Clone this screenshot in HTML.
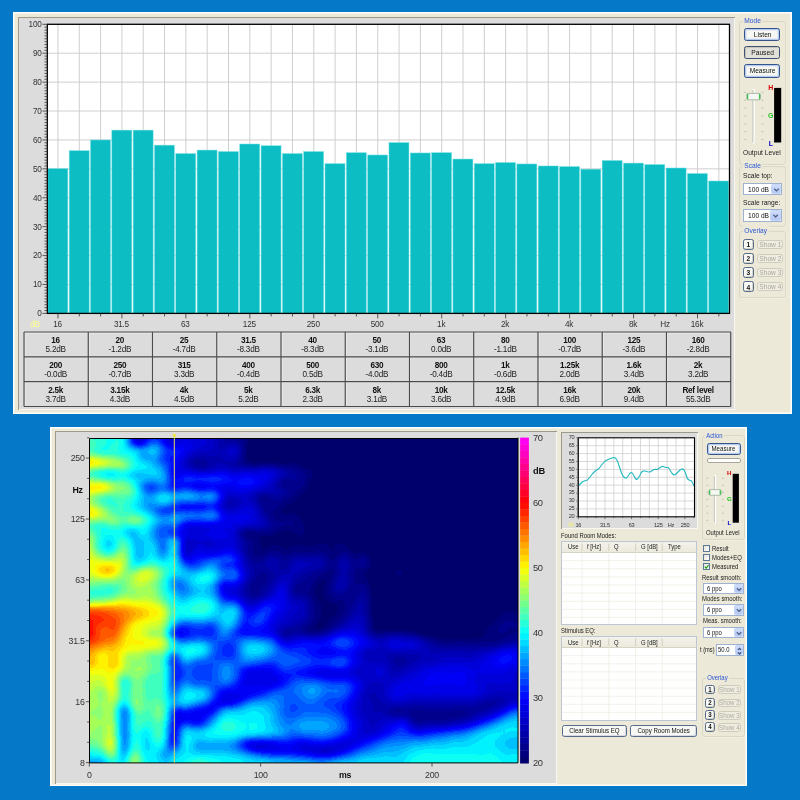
<!DOCTYPE html><html><head><meta charset="utf-8"><title>Room EQ - Spectrum and Waterfall</title><style>
html,body{margin:0;padding:0}
body{width:800px;height:800px;overflow:hidden;background:#0678c8;font-family:"Liberation Sans", Arial, sans-serif;position:relative;font-size:8px;color:#111}
#root{position:absolute;left:0;top:0;width:800px;height:800px;will-change:transform}
.abs{position:absolute}
.panel{background:#ece9d8;box-shadow:inset 0 0 0 1.6px #fefefa}
.sunk{background:#dcdcdc;box-shadow:inset 1px 1px 0 #9d9a8a, inset -1px -1px 0 #f8f7f0}
text.ax{font-family:"Liberation Sans", Arial, sans-serif;font-size:8.2px;fill:#333;letter-spacing:-0.25px}
text.ax2{font-family:"Liberation Sans", Arial, sans-serif;font-size:8.8px;fill:#333;letter-spacing:-0.3px}
text.ax3{font-family:"Liberation Sans", Arial, sans-serif;font-size:5.6px;fill:#333;letter-spacing:-0.2px}
text.b{font-weight:bold;fill:#111}
text.hgl{font-family:"Liberation Sans", Arial, sans-serif;font-weight:bold}
.tbl{border:0.6px solid #555;box-sizing:border-box}
.cell{box-sizing:border-box;text-align:center;font-size:8.2px;letter-spacing:-0.25px;color:#222}
.cell b{display:block;margin-top:4.2px;line-height:9px;color:#111}
.cell span{display:block;line-height:10.7px}
.grp{box-sizing:border-box;border:1px solid #dad7c7;border-radius:3px;box-shadow:0.5px 0.5px 0 #f6f5ec}
.glab{background:#ece9d8;color:#2a55d4;font-size:8px;line-height:10px;padding:0 1.5px;white-space:nowrap;transform:scaleX(.83);transform-origin:0 50%}
.lab{font-size:8px;line-height:10px;white-space:nowrap;color:#1a1a1a;transform:scaleX(.83);transform-origin:0 50%}
.btn{box-sizing:border-box;border:1px solid #35548a;border-radius:2.4px;background:#f7f7f3;display:flex;justify-content:center;align-items:center;padding-top:1px;font-size:8px;color:#111;white-space:nowrap;box-shadow:inset 0 0 0 1.3px #b6cbef}
.sx{display:block;flex:none;transform:scaleX(.83);transform-origin:50% 50%}
.btn.plain{box-shadow:inset -1px -1px 0 #d5d9e2;border-color:#566b8c}
.btn.down{background:#e2e1d9;box-shadow:inset 1px 1px 1px #c5c3b6;border-color:#3d5274}
.btn.num{font-weight:bold;box-shadow:inset -1px -1px 0 #d7d5c8;border-color:#55698a}
.btn.dis{border-color:#cfccbc;background:#efede2;color:#aaa89a;box-shadow:none;padding-top:0.8px}
.combo{box-sizing:border-box;border:1px solid #9fb3d0;background:#fff}
.combo .ct{position:absolute;top:0;font-size:8px;white-space:nowrap;color:#111;transform:scaleX(.83);transform-origin:0 50%}
.combo .cbtn{position:absolute;right:0;top:0;background:linear-gradient(#cfdcfb,#b3c8f3);border-radius:1.3px;border:0.5px solid #c5d5f7;box-sizing:border-box}
.list{box-sizing:border-box;border:1px solid #bcc6d4;background:#fff;overflow:hidden}
.lhead{position:absolute;left:0;top:0;right:0;height:10.2px;background:linear-gradient(#f3f2ea,#eceadd);border-bottom:1px solid #d6d3c4}
.lh{position:absolute;top:0.6px;font-size:8px;line-height:10px;color:#222;white-space:nowrap;transform:scaleX(.83);transform-origin:0 50%}
.p2 .lab,.p2 .glab,.p2 .combo .ct,.p2 .lh{font-size:7.25px;transform:scaleX(.815)}
.p2 .btn{font-size:7.4px}
.p2 .btn.dis{padding-top:0.2px}
.cb{box-sizing:border-box;border:0.8px solid #5d7896;background:linear-gradient(135deg,#e4e3dc,#fff);width:7.2px;height:7.2px}
</style></head><body><div id="root"><div class="abs panel" style="left:13px;top:12.4px;width:779px;height:401.6px"></div><div class="abs sunk" style="left:18px;top:17.4px;width:716.6px;height:393px"></div><svg class="abs" style="left:0;top:0" width="800" height="420" viewBox="0 0 800 420"><rect x="47.3" y="24.3" width="682.2" height="289.1" fill="#fff"/><path d="M47.3 284.49H729.5M47.3 255.58H729.5M47.3 226.67H729.5M47.3 197.76H729.5M47.3 168.85H729.5M47.3 139.94H729.5M47.3 111.03H729.5M47.3 82.12H729.5M47.3 53.21H729.5M57.96 24.3V313.4M79.28 24.3V313.4M100.6 24.3V313.4M121.92 24.3V313.4M143.23 24.3V313.4M164.55 24.3V313.4M185.87 24.3V313.4M207.19 24.3V313.4M228.51 24.3V313.4M249.83 24.3V313.4M271.15 24.3V313.4M292.47 24.3V313.4M313.78 24.3V313.4M335.1 24.3V313.4M356.42 24.3V313.4M377.74 24.3V313.4M399.06 24.3V313.4M420.38 24.3V313.4M441.7 24.3V313.4M463.02 24.3V313.4M484.33 24.3V313.4M505.65 24.3V313.4M526.97 24.3V313.4M548.29 24.3V313.4M569.61 24.3V313.4M590.93 24.3V313.4M612.25 24.3V313.4M633.57 24.3V313.4M654.88 24.3V313.4M676.2 24.3V313.4M697.52 24.3V313.4M718.84 24.3V313.4" stroke="#c9c9c9" stroke-width="0.9" fill="none"/><rect x="47.85" y="168.56" width="20.02" height="144.84" fill="#0cbec4" stroke="#7fe3e6" stroke-width="0.5"/><rect x="69.17" y="150.64" width="20.02" height="162.76" fill="#0cbec4" stroke="#7fe3e6" stroke-width="0.5"/><rect x="90.49" y="139.94" width="20.02" height="173.46" fill="#0cbec4" stroke="#7fe3e6" stroke-width="0.5"/><rect x="111.81" y="130.11" width="20.02" height="183.29" fill="#0cbec4" stroke="#7fe3e6" stroke-width="0.5"/><rect x="133.12" y="130.11" width="20.02" height="183.29" fill="#0cbec4" stroke="#7fe3e6" stroke-width="0.5"/><rect x="154.44" y="145.14" width="20.02" height="168.26" fill="#0cbec4" stroke="#7fe3e6" stroke-width="0.5"/><rect x="175.76" y="153.53" width="20.02" height="159.87" fill="#0cbec4" stroke="#7fe3e6" stroke-width="0.5"/><rect x="197.08" y="150.06" width="20.02" height="163.34" fill="#0cbec4" stroke="#7fe3e6" stroke-width="0.5"/><rect x="218.4" y="151.5" width="20.02" height="161.9" fill="#0cbec4" stroke="#7fe3e6" stroke-width="0.5"/><rect x="239.72" y="143.99" width="20.02" height="169.41" fill="#0cbec4" stroke="#7fe3e6" stroke-width="0.5"/><rect x="261.04" y="145.72" width="20.02" height="167.68" fill="#0cbec4" stroke="#7fe3e6" stroke-width="0.5"/><rect x="282.36" y="153.53" width="20.02" height="159.87" fill="#0cbec4" stroke="#7fe3e6" stroke-width="0.5"/><rect x="303.68" y="151.5" width="20.02" height="161.9" fill="#0cbec4" stroke="#7fe3e6" stroke-width="0.5"/><rect x="324.99" y="163.65" width="20.02" height="149.75" fill="#0cbec4" stroke="#7fe3e6" stroke-width="0.5"/><rect x="346.31" y="152.66" width="20.02" height="160.74" fill="#0cbec4" stroke="#7fe3e6" stroke-width="0.5"/><rect x="367.63" y="154.97" width="20.02" height="158.43" fill="#0cbec4" stroke="#7fe3e6" stroke-width="0.5"/><rect x="388.95" y="142.54" width="20.02" height="170.86" fill="#0cbec4" stroke="#7fe3e6" stroke-width="0.5"/><rect x="410.27" y="152.95" width="20.02" height="160.45" fill="#0cbec4" stroke="#7fe3e6" stroke-width="0.5"/><rect x="431.59" y="152.66" width="20.02" height="160.74" fill="#0cbec4" stroke="#7fe3e6" stroke-width="0.5"/><rect x="452.91" y="159.02" width="20.02" height="154.38" fill="#0cbec4" stroke="#7fe3e6" stroke-width="0.5"/><rect x="474.23" y="163.65" width="20.02" height="149.75" fill="#0cbec4" stroke="#7fe3e6" stroke-width="0.5"/><rect x="495.54" y="162.49" width="20.02" height="150.91" fill="#0cbec4" stroke="#7fe3e6" stroke-width="0.5"/><rect x="516.86" y="163.94" width="20.02" height="149.46" fill="#0cbec4" stroke="#7fe3e6" stroke-width="0.5"/><rect x="538.18" y="165.96" width="20.02" height="147.44" fill="#0cbec4" stroke="#7fe3e6" stroke-width="0.5"/><rect x="559.5" y="166.54" width="20.02" height="146.86" fill="#0cbec4" stroke="#7fe3e6" stroke-width="0.5"/><rect x="580.82" y="169.14" width="20.02" height="144.26" fill="#0cbec4" stroke="#7fe3e6" stroke-width="0.5"/><rect x="602.14" y="160.47" width="20.02" height="152.93" fill="#0cbec4" stroke="#7fe3e6" stroke-width="0.5"/><rect x="623.46" y="163.07" width="20.02" height="150.33" fill="#0cbec4" stroke="#7fe3e6" stroke-width="0.5"/><rect x="644.77" y="164.51" width="20.02" height="148.89" fill="#0cbec4" stroke="#7fe3e6" stroke-width="0.5"/><rect x="666.09" y="167.98" width="20.02" height="145.42" fill="#0cbec4" stroke="#7fe3e6" stroke-width="0.5"/><rect x="687.41" y="173.48" width="20.02" height="139.92" fill="#0cbec4" stroke="#7fe3e6" stroke-width="0.5"/><rect x="708.73" y="180.99" width="20.02" height="132.41" fill="#0cbec4" stroke="#7fe3e6" stroke-width="0.5"/><rect x="47.3" y="24.3" width="682.2" height="289.1" fill="none" stroke="#000" stroke-width="1.3"/><path d="M42.5 313.4H47.3M44.5 310.51H47.3M44.5 307.62H47.3M44.5 304.73H47.3M44.5 301.84H47.3M44.5 298.94H47.3M44.5 296.05H47.3M44.5 293.16H47.3M44.5 290.27H47.3M44.5 287.38H47.3M42.5 284.49H47.3M44.5 281.6H47.3M44.5 278.71H47.3M44.5 275.82H47.3M44.5 272.93H47.3M44.5 270.03H47.3M44.5 267.14H47.3M44.5 264.25H47.3M44.5 261.36H47.3M44.5 258.47H47.3M42.5 255.58H47.3M44.5 252.69H47.3M44.5 249.8H47.3M44.5 246.91H47.3M44.5 244.02H47.3M44.5 241.12H47.3M44.5 238.23H47.3M44.5 235.34H47.3M44.5 232.45H47.3M44.5 229.56H47.3M42.5 226.67H47.3M44.5 223.78H47.3M44.5 220.89H47.3M44.5 218H47.3M44.5 215.11H47.3M44.5 212.21H47.3M44.5 209.32H47.3M44.5 206.43H47.3M44.5 203.54H47.3M44.5 200.65H47.3M42.5 197.76H47.3M44.5 194.87H47.3M44.5 191.98H47.3M44.5 189.09H47.3M44.5 186.2H47.3M44.5 183.31H47.3M44.5 180.41H47.3M44.5 177.52H47.3M44.5 174.63H47.3M44.5 171.74H47.3M42.5 168.85H47.3M44.5 165.96H47.3M44.5 163.07H47.3M44.5 160.18H47.3M44.5 157.29H47.3M44.5 154.4H47.3M44.5 151.5H47.3M44.5 148.61H47.3M44.5 145.72H47.3M44.5 142.83H47.3M42.5 139.94H47.3M44.5 137.05H47.3M44.5 134.16H47.3M44.5 131.27H47.3M44.5 128.38H47.3M44.5 125.49H47.3M44.5 122.59H47.3M44.5 119.7H47.3M44.5 116.81H47.3M44.5 113.92H47.3M42.5 111.03H47.3M44.5 108.14H47.3M44.5 105.25H47.3M44.5 102.36H47.3M44.5 99.47H47.3M44.5 96.58H47.3M44.5 93.68H47.3M44.5 90.79H47.3M44.5 87.9H47.3M44.5 85.01H47.3M42.5 82.12H47.3M44.5 79.23H47.3M44.5 76.34H47.3M44.5 73.45H47.3M44.5 70.56H47.3M44.5 67.67H47.3M44.5 64.77H47.3M44.5 61.88H47.3M44.5 58.99H47.3M44.5 56.1H47.3M42.5 53.21H47.3M44.5 50.32H47.3M44.5 47.43H47.3M44.5 44.54H47.3M44.5 41.65H47.3M44.5 38.75H47.3M44.5 35.86H47.3M44.5 32.97H47.3M44.5 30.08H47.3M44.5 27.19H47.3M42.5 24.3H47.3" stroke="#333" stroke-width="0.8" fill="none"/><path d="M57.96 313.4v5M79.28 313.4v3M100.6 313.4v3M121.92 313.4v5M143.23 313.4v3M164.55 313.4v3M185.87 313.4v5M207.19 313.4v3M228.51 313.4v3M249.83 313.4v5M271.15 313.4v3M292.47 313.4v3M313.78 313.4v5M335.1 313.4v3M356.42 313.4v3M377.74 313.4v5M399.06 313.4v3M420.38 313.4v3M441.7 313.4v5M463.02 313.4v3M484.33 313.4v3M505.65 313.4v5M526.97 313.4v3M548.29 313.4v3M569.61 313.4v5M590.93 313.4v3M612.25 313.4v3M633.57 313.4v5M654.88 313.4v3M676.2 313.4v3M697.52 313.4v5M718.84 313.4v3" stroke="#333" stroke-width="0.8" fill="none"/><text x="41.5" y="316.3" text-anchor="end" class="ax">0</text><text x="41.5" y="287.39" text-anchor="end" class="ax">10</text><text x="41.5" y="258.48" text-anchor="end" class="ax">20</text><text x="41.5" y="229.57" text-anchor="end" class="ax">30</text><text x="41.5" y="200.66" text-anchor="end" class="ax">40</text><text x="41.5" y="171.75" text-anchor="end" class="ax">50</text><text x="41.5" y="142.84" text-anchor="end" class="ax">60</text><text x="41.5" y="113.93" text-anchor="end" class="ax">70</text><text x="41.5" y="85.02" text-anchor="end" class="ax">80</text><text x="41.5" y="56.11" text-anchor="end" class="ax">90</text><text x="41.5" y="27.2" text-anchor="end" class="ax">100</text><text x="57.46" y="327" text-anchor="middle" class="ax">16</text><text x="121.42" y="327" text-anchor="middle" class="ax">31.5</text><text x="185.37" y="327" text-anchor="middle" class="ax">63</text><text x="249.33" y="327" text-anchor="middle" class="ax">125</text><text x="313.28" y="327" text-anchor="middle" class="ax">250</text><text x="377.24" y="327" text-anchor="middle" class="ax">500</text><text x="441.2" y="327" text-anchor="middle" class="ax">1k</text><text x="505.15" y="327" text-anchor="middle" class="ax">2k</text><text x="569.11" y="327" text-anchor="middle" class="ax">4k</text><text x="633.07" y="327" text-anchor="middle" class="ax">8k</text><text x="697.02" y="327" text-anchor="middle" class="ax">16k</text><text x="665" y="327" text-anchor="middle" class="ax">Hz</text><text x="35" y="327" text-anchor="middle" class="ax" fill="#ffff8c" style="fill:#ffff8c">dB</text></svg><svg class="abs" style="left:21.5px;top:330.1px" width="710.75" height="78.49" viewBox="21.5 330.1 710.75 78.49"><path d="M24.5 332.1V406.59M88.75 332.1V406.59M153 332.1V406.59M217.25 332.1V406.59M281.5 332.1V406.59M345.75 332.1V406.59M410 332.1V406.59M474.25 332.1V406.59M538.5 332.1V406.59M602.75 332.1V406.59M667 332.1V406.59M23.5 333.1H730.25M23.5 357.93H730.25M23.5 382.76H730.25" stroke="#ededed" stroke-width="0.9" fill="none"/><path d="M23.5 332.1V406.59M87.75 332.1V406.59M152 332.1V406.59M216.25 332.1V406.59M280.5 332.1V406.59M344.75 332.1V406.59M409 332.1V406.59M473.25 332.1V406.59M537.5 332.1V406.59M601.75 332.1V406.59M666 332.1V406.59M730.25 332.1V406.59M23.5 332.1H730.25M23.5 356.93H730.25M23.5 381.76H730.25M23.5 406.59H730.25" stroke="#4a4a4a" stroke-width="1.15" fill="none"/></svg><div class="abs cell" style="left:23.5px;top:332.1px;width:64.25px;height:24.83px"><b>16</b><span>5.2dB</span></div><div class="abs cell" style="left:87.75px;top:332.1px;width:64.25px;height:24.83px"><b>20</b><span>-1.2dB</span></div><div class="abs cell" style="left:152px;top:332.1px;width:64.25px;height:24.83px"><b>25</b><span>-4.7dB</span></div><div class="abs cell" style="left:216.25px;top:332.1px;width:64.25px;height:24.83px"><b>31.5</b><span>-8.3dB</span></div><div class="abs cell" style="left:280.5px;top:332.1px;width:64.25px;height:24.83px"><b>40</b><span>-8.3dB</span></div><div class="abs cell" style="left:344.75px;top:332.1px;width:64.25px;height:24.83px"><b>50</b><span>-3.1dB</span></div><div class="abs cell" style="left:409px;top:332.1px;width:64.25px;height:24.83px"><b>63</b><span>0.0dB</span></div><div class="abs cell" style="left:473.25px;top:332.1px;width:64.25px;height:24.83px"><b>80</b><span>-1.1dB</span></div><div class="abs cell" style="left:537.5px;top:332.1px;width:64.25px;height:24.83px"><b>100</b><span>-0.7dB</span></div><div class="abs cell" style="left:601.75px;top:332.1px;width:64.25px;height:24.83px"><b>125</b><span>-3.6dB</span></div><div class="abs cell" style="left:666px;top:332.1px;width:64.25px;height:24.83px"><b>160</b><span>-2.8dB</span></div><div class="abs cell" style="left:23.5px;top:356.93px;width:64.25px;height:24.83px"><b>200</b><span>-0.0dB</span></div><div class="abs cell" style="left:87.75px;top:356.93px;width:64.25px;height:24.83px"><b>250</b><span>-0.7dB</span></div><div class="abs cell" style="left:152px;top:356.93px;width:64.25px;height:24.83px"><b>315</b><span>3.3dB</span></div><div class="abs cell" style="left:216.25px;top:356.93px;width:64.25px;height:24.83px"><b>400</b><span>-0.4dB</span></div><div class="abs cell" style="left:280.5px;top:356.93px;width:64.25px;height:24.83px"><b>500</b><span>0.5dB</span></div><div class="abs cell" style="left:344.75px;top:356.93px;width:64.25px;height:24.83px"><b>630</b><span>-4.0dB</span></div><div class="abs cell" style="left:409px;top:356.93px;width:64.25px;height:24.83px"><b>800</b><span>-0.4dB</span></div><div class="abs cell" style="left:473.25px;top:356.93px;width:64.25px;height:24.83px"><b>1k</b><span>-0.6dB</span></div><div class="abs cell" style="left:537.5px;top:356.93px;width:64.25px;height:24.83px"><b>1.25k</b><span>2.0dB</span></div><div class="abs cell" style="left:601.75px;top:356.93px;width:64.25px;height:24.83px"><b>1.6k</b><span>3.4dB</span></div><div class="abs cell" style="left:666px;top:356.93px;width:64.25px;height:24.83px"><b>2k</b><span>3.2dB</span></div><div class="abs cell" style="left:23.5px;top:381.76px;width:64.25px;height:24.83px"><b>2.5k</b><span>3.7dB</span></div><div class="abs cell" style="left:87.75px;top:381.76px;width:64.25px;height:24.83px"><b>3.15k</b><span>4.3dB</span></div><div class="abs cell" style="left:152px;top:381.76px;width:64.25px;height:24.83px"><b>4k</b><span>4.5dB</span></div><div class="abs cell" style="left:216.25px;top:381.76px;width:64.25px;height:24.83px"><b>5k</b><span>5.2dB</span></div><div class="abs cell" style="left:280.5px;top:381.76px;width:64.25px;height:24.83px"><b>6.3k</b><span>2.3dB</span></div><div class="abs cell" style="left:344.75px;top:381.76px;width:64.25px;height:24.83px"><b>8k</b><span>3.1dB</span></div><div class="abs cell" style="left:409px;top:381.76px;width:64.25px;height:24.83px"><b>10k</b><span>3.6dB</span></div><div class="abs cell" style="left:473.25px;top:381.76px;width:64.25px;height:24.83px"><b>12.5k</b><span>4.9dB</span></div><div class="abs cell" style="left:537.5px;top:381.76px;width:64.25px;height:24.83px"><b>16k</b><span>6.9dB</span></div><div class="abs cell" style="left:601.75px;top:381.76px;width:64.25px;height:24.83px"><b>20k</b><span>9.4dB</span></div><div class="abs cell" style="left:666px;top:381.76px;width:64.25px;height:24.83px"><b>Ref level</b><span>55.3dB</span></div><div class="abs grp" style="left:738.6px;top:21px;width:47.4px;height:143.5px"></div><div class="abs glab" style="left:742.8px;top:15.7px">Mode</div><div class="abs btn " style="left:744.4px;top:27.6px;width:36px;height:13.6px;line-height:12.4px"><span class="sx">Listen</span></div><div class="abs btn down" style="left:744.4px;top:45.6px;width:36px;height:13.8px;line-height:12.6px"><span class="sx">Paused</span></div><div class="abs btn " style="left:744.4px;top:63.6px;width:36px;height:14px;line-height:12.8px"><span class="sx">Measure</span></div><svg class="abs" style="left:736px;top:80px" width="56" height="72" viewBox="736 80 56 72"><path d="M753.6 90V142.6" stroke="#fff" stroke-width="2.2" stroke-linecap="round"/><path d="M752.9 90V142.6" stroke="#b9b7a8" stroke-width="0.9"/><path d="M744.4 92.4h1.7M761.6 92.4h1.7M744.4 100.25h1.7M761.6 100.25h1.7M744.4 108.1h1.7M761.6 108.1h1.7M744.4 115.95h1.7M761.6 115.95h1.7M744.4 123.8h1.7M761.6 123.8h1.7M744.4 131.65h1.7M761.6 131.65h1.7M744.4 139.5h1.7M761.6 139.5h1.7" stroke="#b3b1a2" stroke-width="0.8"/><rect x="746.8" y="93.4" width="13.6" height="6.4" rx="1.2" fill="#f6f6f2" stroke="#8fa58f" stroke-width="0.7"/><path d="M747.6 94v5.2M759.6 94v5.2" stroke="#3fc24a" stroke-width="1.3"/><rect x="774.1" y="87.9" width="7.1" height="54.6" fill="#000"/><text x="770.8" y="89.8" text-anchor="middle" class="hgl" style="fill:#d40000;font-size:6.9px">H</text><text x="770.8" y="118" text-anchor="middle" class="hgl" style="fill:#1fc01f;font-size:6.9px">G</text><text x="770.8" y="146.2" text-anchor="middle" class="hgl" style="fill:#0000c8;font-size:6.9px">L</text></svg><div class="abs lab" style="left:743px;top:148.2px;">Output Level</div><div class="abs grp" style="left:738.6px;top:166px;width:47.4px;height:60.5px"></div><div class="abs glab" style="left:742.8px;top:160.7px">Scale</div><div class="abs lab" style="left:742.8px;top:171.3px;">Scale top:</div><div class="abs combo" style="left:742.8px;top:183.3px;width:38.8px;height:12.2px"><span class="ct" style="left:4.5px;line-height:11.2px">100 dB</span><span class="cbtn" style="width:10px;height:10.2px"><svg width="10" height="10.2" style="display:block"><path d="M2.3 3.7L4.5 5.9L6.7 3.7" stroke="#4d6185" stroke-width="1.3" fill="none"/></svg></span></div><div class="abs lab" style="left:742.8px;top:197.8px;">Scale range:</div><div class="abs combo" style="left:742.8px;top:209.3px;width:38.8px;height:12.4px"><span class="ct" style="left:4.5px;line-height:11.4px">100 dB</span><span class="cbtn" style="width:10.2px;height:10.4px"><svg width="10.2" height="10.4" style="display:block"><path d="M2.4 3.8L4.6 6L6.8 3.8" stroke="#4d6185" stroke-width="1.3" fill="none"/></svg></span></div><div class="abs grp" style="left:738.6px;top:231px;width:47.4px;height:66.8px"></div><div class="abs glab" style="left:742.8px;top:225.7px">Overlay</div><div class="abs btn num" style="left:742.5px;top:239.2px;width:11.4px;height:10.4px;line-height:9.2px"><span class="sx">1</span></div><div class="abs btn dis" style="left:756.8px;top:239.7px;width:26.2px;height:9.4px;line-height:8.2px"><span class="sx">Show 1</span></div><div class="abs btn num" style="left:742.5px;top:253.27px;width:11.4px;height:10.4px;line-height:9.2px"><span class="sx">2</span></div><div class="abs btn dis" style="left:756.8px;top:253.77px;width:26.2px;height:9.4px;line-height:8.2px"><span class="sx">Show 2</span></div><div class="abs btn num" style="left:742.5px;top:267.34px;width:11.4px;height:10.4px;line-height:9.2px"><span class="sx">3</span></div><div class="abs btn dis" style="left:756.8px;top:267.84px;width:26.2px;height:9.4px;line-height:8.2px"><span class="sx">Show 3</span></div><div class="abs btn num" style="left:742.5px;top:281.41px;width:11.4px;height:10.4px;line-height:9.2px"><span class="sx">4</span></div><div class="abs btn dis" style="left:756.8px;top:281.91px;width:26.2px;height:9.4px;line-height:8.2px"><span class="sx">Show 4</span></div><div class="abs panel" style="left:50.2px;top:427.3px;width:697px;height:359px"></div><div class="abs sunk" style="left:55px;top:431.4px;width:502px;height:352.2px"></div><svg class="abs" style="left:89.3px;top:437.6px;overflow:hidden" width="428.3" height="325" viewBox="0 0 428.3 325"><defs><filter id="hm" x="-5%" y="-5%" width="110%" height="110%" filterUnits="objectBoundingBox" color-interpolation-filters="sRGB"><feGaussianBlur stdDeviation="2.5"/><feComponentTransfer><feFuncR type="discrete" tableValues="0 0 0 0 0 0 0 0 0 0 0 0 0 0 0 0 0 0 0 0 0.05 0.15 0.25 0.35 0.45 0.55 0.65 0.75 0.85 0.95 1 1 1 1 1 1 1 1 1 1"/><feFuncG type="discrete" tableValues="0 0 0 0 0 0 0 0 0 0 0.05 0.15 0.25 0.35 0.45 0.55 0.65 0.75 0.85 0.95 1 1 1 1 1 1 1 1 1 1 0.95 0.85 0.75 0.65 0.55 0.45 0.35 0.25 0.15 0.05"/><feFuncB type="discrete" tableValues="0.43 0.49 0.55 0.61 0.67 0.73 0.79 0.85 0.91 0.97 1 1 1 1 1 1 1 1 1 1 0.95 0.85 0.75 0.65 0.55 0.45 0.35 0.25 0.15 0.05 0 0 0 0 0 0 0 0 0 0"/></feComponentTransfer></filter></defs><g filter="url(#hm)"><rect x="-25" y="-25" width="478.3" height="375" fill="#000"/><path fill="rgb(1,1,1)" d="M214.7 24.4h15.5v5.5h-15.5zM229.7 29.4h5.5v5.5h-5.5zM229.7 34.4h5.5v5.5h-5.5zM219.7 44.4h5.5v5.5h-5.5zM219.7 49.4h5.5v5.5h-5.5zM219.7 79.4h5.5v5.5h-5.5zM219.7 84.4h5.5v5.5h-5.5zM229.7 94.4h30.5v5.5h-30.5zM294.7 124.4h5.5v5.5h-5.5zM314.7 124.4h5.5v5.5h-5.5zM294.7 129.4h5.5v5.5h-5.5zM319.7 129.4h5.5v5.5h-5.5zM279.7 134.4h5.5v5.5h-5.5zM294.7 134.4h5.5v5.5h-5.5zM319.7 134.4h5.5v5.5h-5.5zM294.7 139.4h5.5v5.5h-5.5zM314.7 139.4h5.5v5.5h-5.5zM294.7 154.4h10.5v5.5h-10.5zM294.7 159.4h10.5v5.5h-10.5zM294.7 164.4h10.5v5.5h-10.5zM409.7 164.4h40.5v5.5h-40.5zM294.7 169.4h10.5v5.5h-10.5zM329.7 174.4h10.5v5.5h-10.5zM334.7 179.4h5.5v5.5h-5.5zM284.7 184.4h5.5v5.5h-5.5zM319.7 189.4h5.5v5.5h-5.5zM349.7 194.4h30.5v5.5h-30.5z"/><path fill="rgb(2,2,2)" d="M159.7 -20.6h5.5v5.5h-5.5zM159.7 -15.6h5.5v5.5h-5.5zM159.7 -10.6h5.5v5.5h-5.5zM159.7 -5.6h5.5v5.5h-5.5zM159.7 -0.6h5.5v5.5h-5.5zM209.7 59.4h5.5v5.5h-5.5zM219.7 94.4h5.5v5.5h-5.5zM259.7 104.4h5.5v5.5h-5.5zM299.7 124.4h15.5v5.5h-15.5zM279.7 129.4h5.5v5.5h-5.5zM279.7 139.4h5.5v5.5h-5.5zM299.7 139.4h15.5v5.5h-15.5zM404.7 174.4h5.5v5.5h-5.5zM399.7 179.4h5.5v5.5h-5.5zM389.7 189.4h5.5v5.5h-5.5zM344.7 194.4h5.5v5.5h-5.5zM384.7 194.4h5.5v5.5h-5.5z"/><path fill="rgb(3,3,3)" d="M199.7 19.4h10.5v5.5h-10.5zM214.7 54.4h5.5v5.5h-5.5zM209.7 74.4h5.5v5.5h-5.5zM214.7 79.4h5.5v5.5h-5.5zM199.7 94.4h5.5v5.5h-5.5zM264.7 109.4h15.5v5.5h-15.5zM279.7 114.4h5.5v5.5h-5.5zM279.7 144.4h5.5v5.5h-5.5zM229.7 149.4h5.5v5.5h-5.5zM409.7 169.4h5.5v5.5h-5.5zM229.7 184.4h5.5v5.5h-5.5zM394.7 184.4h5.5v5.5h-5.5zM284.7 189.4h5.5v5.5h-5.5zM339.7 194.4h5.5v5.5h-5.5z"/><path fill="rgb(4,4,4)" d="M209.7 24.4h5.5v5.5h-5.5zM224.7 29.4h5.5v5.5h-5.5zM224.7 34.4h5.5v5.5h-5.5zM219.7 39.4h5.5v5.5h-5.5zM204.7 64.4h5.5v5.5h-5.5zM204.7 69.4h5.5v5.5h-5.5zM159.7 94.4h5.5v5.5h-5.5zM184.7 94.4h5.5v5.5h-5.5zM174.7 99.4h5.5v5.5h-5.5zM224.7 99.4h5.5v5.5h-5.5zM254.7 99.4h5.5v5.5h-5.5zM279.7 124.4h5.5v5.5h-5.5zM274.7 134.4h5.5v5.5h-5.5zM229.7 144.4h5.5v5.5h-5.5zM224.7 149.4h5.5v5.5h-5.5zM279.7 149.4h5.5v5.5h-5.5zM224.7 154.4h10.5v5.5h-10.5zM239.7 164.4h5.5v5.5h-5.5zM239.7 169.4h5.5v5.5h-5.5zM279.7 169.4h5.5v5.5h-5.5zM424.7 169.4h25.5v5.5h-25.5zM224.7 189.4h5.5v5.5h-5.5zM289.7 189.4h5.5v5.5h-5.5zM314.7 189.4h5.5v5.5h-5.5zM334.7 194.4h5.5v5.5h-5.5z"/><path fill="rgb(5,5,5)" d="M154.7 14.4h5.5v5.5h-5.5zM194.7 64.4h10.5v5.5h-10.5zM194.7 69.4h10.5v5.5h-10.5zM214.7 84.4h5.5v5.5h-5.5zM214.7 89.4h5.5v5.5h-5.5zM164.7 94.4h10.5v5.5h-10.5zM214.7 94.4h5.5v5.5h-5.5zM179.7 99.4h25.5v5.5h-25.5zM219.7 99.4h5.5v5.5h-5.5zM229.7 99.4h20.5v5.5h-20.5zM174.7 104.4h5.5v5.5h-5.5zM169.7 109.4h5.5v5.5h-5.5zM259.7 109.4h5.5v5.5h-5.5zM279.7 119.4h5.5v5.5h-5.5zM299.7 129.4h5.5v5.5h-5.5zM314.7 129.4h5.5v5.5h-5.5zM299.7 134.4h5.5v5.5h-5.5zM314.7 134.4h5.5v5.5h-5.5zM279.7 154.4h5.5v5.5h-5.5zM229.7 159.4h5.5v5.5h-5.5zM279.7 159.4h5.5v5.5h-5.5zM234.7 164.4h5.5v5.5h-5.5zM244.7 164.4h5.5v5.5h-5.5zM279.7 164.4h5.5v5.5h-5.5zM234.7 169.4h5.5v5.5h-5.5zM244.7 169.4h5.5v5.5h-5.5zM414.7 169.4h10.5v5.5h-10.5zM234.7 174.4h10.5v5.5h-10.5zM229.7 179.4h10.5v5.5h-10.5zM224.7 184.4h5.5v5.5h-5.5zM234.7 184.4h5.5v5.5h-5.5zM299.7 189.4h15.5v5.5h-15.5zM389.7 194.4h5.5v5.5h-5.5z"/><path fill="rgb(6,6,6)" d="M154.7 9.4h5.5v5.5h-5.5zM154.7 19.4h5.5v5.5h-5.5zM214.7 49.4h5.5v5.5h-5.5zM209.7 54.4h5.5v5.5h-5.5zM204.7 59.4h5.5v5.5h-5.5zM189.7 69.4h5.5v5.5h-5.5zM189.7 74.4h5.5v5.5h-5.5zM194.7 89.4h5.5v5.5h-5.5zM154.7 94.4h5.5v5.5h-5.5zM174.7 94.4h10.5v5.5h-10.5zM204.7 94.4h5.5v5.5h-5.5zM169.7 99.4h5.5v5.5h-5.5zM204.7 99.4h15.5v5.5h-15.5zM249.7 99.4h5.5v5.5h-5.5zM169.7 104.4h5.5v5.5h-5.5zM179.7 104.4h45.5v5.5h-45.5zM239.7 104.4h5.5v5.5h-5.5zM254.7 104.4h5.5v5.5h-5.5zM194.7 109.4h5.5v5.5h-5.5zM239.7 109.4h10.5v5.5h-10.5zM229.7 139.4h10.5v5.5h-10.5zM234.7 159.4h5.5v5.5h-5.5zM229.7 164.4h5.5v5.5h-5.5zM229.7 169.4h5.5v5.5h-5.5zM229.7 174.4h5.5v5.5h-5.5zM279.7 174.4h5.5v5.5h-5.5zM404.7 179.4h5.5v5.5h-5.5zM219.7 189.4h5.5v5.5h-5.5zM229.7 189.4h5.5v5.5h-5.5zM294.7 189.4h5.5v5.5h-5.5z"/><path fill="rgb(7,7,7)" d="M154.7 4.4h5.5v5.5h-5.5zM189.7 24.4h10.5v5.5h-10.5zM219.7 29.4h5.5v5.5h-5.5zM194.7 74.4h5.5v5.5h-5.5zM204.7 74.4h5.5v5.5h-5.5zM209.7 79.4h5.5v5.5h-5.5zM189.7 89.4h5.5v5.5h-5.5zM199.7 89.4h5.5v5.5h-5.5zM209.7 94.4h5.5v5.5h-5.5zM224.7 104.4h15.5v5.5h-15.5zM244.7 104.4h5.5v5.5h-5.5zM174.7 109.4h5.5v5.5h-5.5zM189.7 109.4h5.5v5.5h-5.5zM239.7 114.4h5.5v5.5h-5.5zM304.7 129.4h10.5v5.5h-10.5zM269.7 134.4h5.5v5.5h-5.5zM304.7 134.4h10.5v5.5h-10.5zM224.7 144.4h5.5v5.5h-5.5zM234.7 144.4h5.5v5.5h-5.5zM224.7 159.4h5.5v5.5h-5.5zM244.7 174.4h5.5v5.5h-5.5zM409.7 174.4h5.5v5.5h-5.5zM239.7 179.4h5.5v5.5h-5.5zM399.7 184.4h5.5v5.5h-5.5zM394.7 189.4h5.5v5.5h-5.5zM354.7 199.4h10.5v5.5h-10.5zM374.7 199.4h10.5v5.5h-10.5z"/><path fill="rgb(8,8,8)" d="M204.7 24.4h5.5v5.5h-5.5zM219.7 34.4h5.5v5.5h-5.5zM214.7 44.4h5.5v5.5h-5.5zM199.7 59.4h5.5v5.5h-5.5zM199.7 74.4h5.5v5.5h-5.5zM209.7 89.4h5.5v5.5h-5.5zM249.7 104.4h5.5v5.5h-5.5zM199.7 109.4h5.5v5.5h-5.5zM214.7 109.4h5.5v5.5h-5.5zM264.7 114.4h5.5v5.5h-5.5zM274.7 129.4h5.5v5.5h-5.5zM234.7 134.4h5.5v5.5h-5.5zM274.7 139.4h5.5v5.5h-5.5zM234.7 154.4h5.5v5.5h-5.5zM239.7 159.4h5.5v5.5h-5.5zM249.7 169.4h5.5v5.5h-5.5zM329.7 194.4h5.5v5.5h-5.5zM394.7 194.4h5.5v5.5h-5.5zM349.7 199.4h5.5v5.5h-5.5zM364.7 199.4h10.5v5.5h-10.5zM384.7 199.4h20.5v5.5h-20.5z"/><path fill="rgb(9,9,9)" d="M154.7 -20.6h5.5v5.5h-5.5zM154.7 -15.6h5.5v5.5h-5.5zM154.7 -10.6h5.5v5.5h-5.5zM154.7 -5.6h5.5v5.5h-5.5zM154.7 -0.6h5.5v5.5h-5.5zM199.7 24.4h5.5v5.5h-5.5zM214.7 29.4h5.5v5.5h-5.5zM204.7 54.4h5.5v5.5h-5.5zM189.7 64.4h5.5v5.5h-5.5zM184.7 74.4h5.5v5.5h-5.5zM209.7 84.4h5.5v5.5h-5.5zM204.7 89.4h5.5v5.5h-5.5zM164.7 99.4h5.5v5.5h-5.5zM164.7 109.4h5.5v5.5h-5.5zM204.7 109.4h10.5v5.5h-10.5zM219.7 109.4h5.5v5.5h-5.5zM234.7 109.4h5.5v5.5h-5.5zM249.7 109.4h10.5v5.5h-10.5zM244.7 114.4h5.5v5.5h-5.5zM274.7 114.4h5.5v5.5h-5.5zM264.7 134.4h5.5v5.5h-5.5zM219.7 149.4h5.5v5.5h-5.5zM234.7 149.4h5.5v5.5h-5.5zM224.7 164.4h5.5v5.5h-5.5zM249.7 164.4h5.5v5.5h-5.5zM224.7 169.4h5.5v5.5h-5.5zM414.7 174.4h35.5v5.5h-35.5zM404.7 199.4h5.5v5.5h-5.5z"/><path fill="rgb(10,10,10)" d="M209.7 49.4h5.5v5.5h-5.5zM164.7 104.4h5.5v5.5h-5.5zM224.7 109.4h5.5v5.5h-5.5zM164.7 114.4h10.5v5.5h-10.5zM239.7 129.4h5.5v5.5h-5.5zM264.7 129.4h10.5v5.5h-10.5zM229.7 134.4h5.5v5.5h-5.5zM239.7 134.4h5.5v5.5h-5.5zM264.7 139.4h10.5v5.5h-10.5zM219.7 154.4h5.5v5.5h-5.5zM244.7 159.4h5.5v5.5h-5.5zM224.7 174.4h5.5v5.5h-5.5zM224.7 179.4h5.5v5.5h-5.5zM279.7 179.4h5.5v5.5h-5.5zM219.7 184.4h5.5v5.5h-5.5zM279.7 184.4h5.5v5.5h-5.5zM214.7 189.4h5.5v5.5h-5.5zM399.7 194.4h5.5v5.5h-5.5z"/><path fill="rgb(11,11,11)" d="M164.7 24.4h5.5v5.5h-5.5zM184.7 24.4h5.5v5.5h-5.5zM214.7 39.4h5.5v5.5h-5.5zM174.7 59.4h5.5v5.5h-5.5zM194.7 59.4h5.5v5.5h-5.5zM184.7 69.4h5.5v5.5h-5.5zM204.7 79.4h5.5v5.5h-5.5zM184.7 89.4h5.5v5.5h-5.5zM179.7 109.4h10.5v5.5h-10.5zM229.7 109.4h5.5v5.5h-5.5zM259.7 114.4h5.5v5.5h-5.5zM269.7 114.4h5.5v5.5h-5.5zM239.7 119.4h5.5v5.5h-5.5zM224.7 139.4h5.5v5.5h-5.5zM249.7 174.4h5.5v5.5h-5.5zM244.7 179.4h5.5v5.5h-5.5zM409.7 179.4h5.5v5.5h-5.5zM239.7 184.4h5.5v5.5h-5.5zM404.7 184.4h5.5v5.5h-5.5zM399.7 189.4h5.5v5.5h-5.5zM404.7 194.4h15.5v5.5h-15.5zM344.7 199.4h5.5v5.5h-5.5zM409.7 199.4h5.5v5.5h-5.5z"/><path fill="rgb(12,12,12)" d="M159.7 24.4h5.5v5.5h-5.5zM169.7 24.4h5.5v5.5h-5.5zM209.7 29.4h5.5v5.5h-5.5zM194.7 44.4h5.5v5.5h-5.5zM184.7 79.4h10.5v5.5h-10.5zM204.7 84.4h5.5v5.5h-5.5zM194.7 114.4h5.5v5.5h-5.5zM239.7 124.4h5.5v5.5h-5.5zM239.7 139.4h5.5v5.5h-5.5zM264.7 144.4h5.5v5.5h-5.5zM249.7 159.4h5.5v5.5h-5.5zM424.7 179.4h25.5v5.5h-25.5zM279.7 189.4h5.5v5.5h-5.5zM419.7 189.4h30.5v5.5h-30.5zM419.7 194.4h5.5v5.5h-5.5zM429.7 194.4h20.5v5.5h-20.5z"/><path fill="rgb(13,13,13)" d="M174.7 24.4h5.5v5.5h-5.5zM214.7 34.4h5.5v5.5h-5.5zM194.7 39.4h5.5v5.5h-5.5zM204.7 49.4h5.5v5.5h-5.5zM199.7 54.4h5.5v5.5h-5.5zM169.7 59.4h5.5v5.5h-5.5zM179.7 69.4h5.5v5.5h-5.5zM194.7 79.4h5.5v5.5h-5.5zM194.7 84.4h10.5v5.5h-10.5zM159.7 99.4h5.5v5.5h-5.5zM159.7 109.4h5.5v5.5h-5.5zM264.7 119.4h5.5v5.5h-5.5zM264.7 124.4h5.5v5.5h-5.5zM219.7 144.4h5.5v5.5h-5.5zM274.7 144.4h5.5v5.5h-5.5zM259.7 149.4h10.5v5.5h-10.5zM259.7 154.4h5.5v5.5h-5.5zM254.7 159.4h5.5v5.5h-5.5zM254.7 164.4h5.5v5.5h-5.5zM414.7 179.4h10.5v5.5h-10.5zM409.7 184.4h5.5v5.5h-5.5zM419.7 184.4h30.5v5.5h-30.5zM234.7 189.4h5.5v5.5h-5.5zM404.7 189.4h5.5v5.5h-5.5zM414.7 189.4h5.5v5.5h-5.5zM324.7 194.4h5.5v5.5h-5.5zM424.7 194.4h5.5v5.5h-5.5z"/><path fill="rgb(14,14,14)" d="M179.7 24.4h5.5v5.5h-5.5zM179.7 74.4h5.5v5.5h-5.5zM199.7 79.4h5.5v5.5h-5.5zM189.7 84.4h5.5v5.5h-5.5zM159.7 104.4h5.5v5.5h-5.5zM159.7 114.4h5.5v5.5h-5.5zM189.7 114.4h5.5v5.5h-5.5zM234.7 114.4h5.5v5.5h-5.5zM234.7 129.4h5.5v5.5h-5.5zM224.7 134.4h5.5v5.5h-5.5zM204.7 149.4h5.5v5.5h-5.5zM239.7 154.4h5.5v5.5h-5.5zM254.7 169.4h5.5v5.5h-5.5zM414.7 184.4h5.5v5.5h-5.5zM409.7 189.4h5.5v5.5h-5.5zM414.7 199.4h5.5v5.5h-5.5zM324.7 274.4h5.5v5.5h-5.5z"/><path fill="rgb(15,15,15)" d="M149.7 -10.6h5.5v5.5h-5.5zM149.7 -5.6h5.5v5.5h-5.5zM149.7 -0.6h5.5v5.5h-5.5zM154.7 24.4h5.5v5.5h-5.5zM189.7 44.4h5.5v5.5h-5.5zM209.7 44.4h5.5v5.5h-5.5zM189.7 59.4h5.5v5.5h-5.5zM174.7 69.4h5.5v5.5h-5.5zM154.7 89.4h5.5v5.5h-5.5zM179.7 89.4h5.5v5.5h-5.5zM174.7 114.4h5.5v5.5h-5.5zM244.7 119.4h5.5v5.5h-5.5zM274.7 124.4h5.5v5.5h-5.5zM219.7 139.4h5.5v5.5h-5.5zM269.7 144.4h5.5v5.5h-5.5zM209.7 149.4h5.5v5.5h-5.5zM274.7 149.4h5.5v5.5h-5.5zM254.7 154.4h5.5v5.5h-5.5zM219.7 159.4h5.5v5.5h-5.5zM259.7 159.4h5.5v5.5h-5.5zM329.7 274.4h5.5v5.5h-5.5zM344.7 274.4h15.5v5.5h-15.5zM324.7 279.4h5.5v5.5h-5.5z"/><path fill="rgb(16,16,16)" d="M149.7 -20.6h5.5v5.5h-5.5zM149.7 -15.6h5.5v5.5h-5.5zM149.7 19.4h5.5v5.5h-5.5zM204.7 29.4h5.5v5.5h-5.5zM199.7 44.4h5.5v5.5h-5.5zM174.7 64.4h5.5v5.5h-5.5zM184.7 64.4h5.5v5.5h-5.5zM159.7 89.4h5.5v5.5h-5.5zM199.7 114.4h5.5v5.5h-5.5zM164.7 119.4h5.5v5.5h-5.5zM259.7 119.4h5.5v5.5h-5.5zM274.7 119.4h5.5v5.5h-5.5zM244.7 129.4h5.5v5.5h-5.5zM164.7 139.4h10.5v5.5h-10.5zM164.7 144.4h5.5v5.5h-5.5zM239.7 144.4h5.5v5.5h-5.5zM259.7 144.4h5.5v5.5h-5.5zM164.7 149.4h5.5v5.5h-5.5zM214.7 149.4h5.5v5.5h-5.5zM164.7 154.4h5.5v5.5h-5.5zM209.7 189.4h5.5v5.5h-5.5zM339.7 199.4h5.5v5.5h-5.5zM304.7 269.4h10.5v5.5h-10.5zM334.7 274.4h10.5v5.5h-10.5zM359.7 274.4h15.5v5.5h-15.5zM329.7 279.4h5.5v5.5h-5.5zM349.7 279.4h5.5v5.5h-5.5z"/><path fill="rgb(17,17,17)" d="M209.7 34.4h5.5v5.5h-5.5zM189.7 39.4h5.5v5.5h-5.5zM199.7 49.4h5.5v5.5h-5.5zM179.7 59.4h5.5v5.5h-5.5zM179.7 79.4h5.5v5.5h-5.5zM184.7 84.4h5.5v5.5h-5.5zM249.7 114.4h5.5v5.5h-5.5zM169.7 119.4h5.5v5.5h-5.5zM269.7 124.4h5.5v5.5h-5.5zM259.7 129.4h5.5v5.5h-5.5zM259.7 134.4h5.5v5.5h-5.5zM169.7 144.4h5.5v5.5h-5.5zM209.7 144.4h10.5v5.5h-10.5zM159.7 149.4h5.5v5.5h-5.5zM159.7 154.4h5.5v5.5h-5.5zM264.7 154.4h5.5v5.5h-5.5zM254.7 174.4h5.5v5.5h-5.5zM219.7 179.4h5.5v5.5h-5.5zM249.7 179.4h5.5v5.5h-5.5zM214.7 184.4h5.5v5.5h-5.5zM284.7 194.4h5.5v5.5h-5.5zM419.7 199.4h5.5v5.5h-5.5zM354.7 204.4h10.5v5.5h-10.5zM374.7 204.4h30.5v5.5h-30.5zM319.7 274.4h5.5v5.5h-5.5zM344.7 279.4h5.5v5.5h-5.5zM354.7 279.4h5.5v5.5h-5.5z"/><path fill="rgb(18,18,18)" d="M144.7 -20.6h5.5v5.5h-5.5zM144.7 -15.6h5.5v5.5h-5.5zM144.7 -10.6h5.5v5.5h-5.5zM144.7 -5.6h5.5v5.5h-5.5zM199.7 39.4h5.5v5.5h-5.5zM209.7 39.4h5.5v5.5h-5.5zM204.7 44.4h5.5v5.5h-5.5zM194.7 54.4h5.5v5.5h-5.5zM179.7 64.4h5.5v5.5h-5.5zM174.7 89.4h5.5v5.5h-5.5zM149.7 94.4h5.5v5.5h-5.5zM204.7 114.4h20.5v5.5h-20.5zM254.7 114.4h5.5v5.5h-5.5zM269.7 119.4h5.5v5.5h-5.5zM244.7 124.4h5.5v5.5h-5.5zM259.7 124.4h5.5v5.5h-5.5zM169.7 134.4h5.5v5.5h-5.5zM219.7 134.4h5.5v5.5h-5.5zM244.7 134.4h5.5v5.5h-5.5zM174.7 139.4h5.5v5.5h-5.5zM259.7 139.4h5.5v5.5h-5.5zM159.7 144.4h5.5v5.5h-5.5zM204.7 144.4h5.5v5.5h-5.5zM239.7 149.4h5.5v5.5h-5.5zM269.7 149.4h5.5v5.5h-5.5zM244.7 154.4h10.5v5.5h-10.5zM274.7 154.4h5.5v5.5h-5.5zM219.7 164.4h5.5v5.5h-5.5zM259.7 164.4h5.5v5.5h-5.5zM219.7 169.4h5.5v5.5h-5.5zM219.7 174.4h5.5v5.5h-5.5zM244.7 184.4h5.5v5.5h-5.5zM289.7 194.4h5.5v5.5h-5.5zM319.7 194.4h5.5v5.5h-5.5zM434.7 199.4h15.5v5.5h-15.5zM349.7 204.4h5.5v5.5h-5.5zM364.7 204.4h10.5v5.5h-10.5zM314.7 269.4h10.5v5.5h-10.5zM364.7 269.4h10.5v5.5h-10.5zM374.7 274.4h5.5v5.5h-5.5zM339.7 279.4h5.5v5.5h-5.5z"/><path fill="rgb(19,19,19)" d="M139.7 -5.6h5.5v5.5h-5.5zM144.7 -0.6h5.5v5.5h-5.5zM149.7 4.4h5.5v5.5h-5.5zM149.7 24.4h5.5v5.5h-5.5zM169.7 54.4h10.5v5.5h-10.5zM184.7 59.4h5.5v5.5h-5.5zM164.7 89.4h5.5v5.5h-5.5zM154.7 99.4h5.5v5.5h-5.5zM184.7 114.4h5.5v5.5h-5.5zM224.7 114.4h10.5v5.5h-10.5zM194.7 119.4h5.5v5.5h-5.5zM169.7 129.4h5.5v5.5h-5.5zM229.7 129.4h5.5v5.5h-5.5zM174.7 134.4h5.5v5.5h-5.5zM214.7 139.4h5.5v5.5h-5.5zM204.7 154.4h5.5v5.5h-5.5zM214.7 154.4h5.5v5.5h-5.5zM424.7 199.4h10.5v5.5h-10.5zM404.7 204.4h5.5v5.5h-5.5zM324.7 269.4h10.5v5.5h-10.5zM359.7 269.4h5.5v5.5h-5.5zM374.7 269.4h5.5v5.5h-5.5zM334.7 279.4h5.5v5.5h-5.5z"/><path fill="rgb(20,20,20)" d="M139.7 -20.6h5.5v5.5h-5.5zM139.7 -15.6h5.5v5.5h-5.5zM139.7 -10.6h5.5v5.5h-5.5zM139.7 -0.6h5.5v5.5h-5.5zM149.7 14.4h5.5v5.5h-5.5zM104.7 24.4h10.5v5.5h-10.5zM199.7 29.4h5.5v5.5h-5.5zM204.7 34.4h5.5v5.5h-5.5zM169.7 89.4h5.5v5.5h-5.5zM154.7 109.4h5.5v5.5h-5.5zM179.7 114.4h5.5v5.5h-5.5zM159.7 119.4h5.5v5.5h-5.5zM234.7 119.4h5.5v5.5h-5.5zM234.7 124.4h5.5v5.5h-5.5zM174.7 144.4h5.5v5.5h-5.5zM169.7 149.4h5.5v5.5h-5.5zM259.7 169.4h5.5v5.5h-5.5zM274.7 169.4h5.5v5.5h-5.5zM194.7 189.4h5.5v5.5h-5.5zM194.7 194.4h5.5v5.5h-5.5zM299.7 269.4h5.5v5.5h-5.5zM334.7 269.4h25.5v5.5h-25.5zM359.7 279.4h5.5v5.5h-5.5z"/><path fill="rgb(21,21,21)" d="M104.7 19.4h10.5v5.5h-10.5zM204.7 39.4h5.5v5.5h-5.5zM169.7 64.4h5.5v5.5h-5.5zM174.7 74.4h5.5v5.5h-5.5zM154.7 104.4h5.5v5.5h-5.5zM189.7 124.4h10.5v5.5h-10.5zM174.7 129.4h5.5v5.5h-5.5zM164.7 134.4h5.5v5.5h-5.5zM209.7 139.4h5.5v5.5h-5.5zM254.7 149.4h5.5v5.5h-5.5zM169.7 154.4h5.5v5.5h-5.5zM209.7 154.4h5.5v5.5h-5.5zM264.7 159.4h5.5v5.5h-5.5zM274.7 159.4h5.5v5.5h-5.5zM274.7 164.4h5.5v5.5h-5.5zM274.7 174.4h5.5v5.5h-5.5zM199.7 189.4h10.5v5.5h-10.5zM294.7 194.4h5.5v5.5h-5.5zM314.7 194.4h5.5v5.5h-5.5zM394.7 264.4h5.5v5.5h-5.5zM379.7 269.4h5.5v5.5h-5.5zM304.7 274.4h5.5v5.5h-5.5z"/><path fill="rgb(22,22,22)" d="M134.7 -5.6h5.5v5.5h-5.5zM134.7 -0.6h5.5v5.5h-5.5zM194.7 49.4h5.5v5.5h-5.5zM189.7 119.4h5.5v5.5h-5.5zM164.7 129.4h5.5v5.5h-5.5zM179.7 134.4h5.5v5.5h-5.5zM214.7 134.4h5.5v5.5h-5.5zM159.7 139.4h5.5v5.5h-5.5zM179.7 139.4h5.5v5.5h-5.5zM209.7 184.4h5.5v5.5h-5.5zM239.7 189.4h5.5v5.5h-5.5zM334.7 199.4h5.5v5.5h-5.5zM344.7 204.4h5.5v5.5h-5.5zM304.7 219.4h10.5v5.5h-10.5zM389.7 264.4h5.5v5.5h-5.5zM399.7 264.4h5.5v5.5h-5.5zM384.7 269.4h5.5v5.5h-5.5zM314.7 274.4h5.5v5.5h-5.5zM364.7 279.4h5.5v5.5h-5.5z"/><path fill="rgb(23,23,23)" d="M134.7 -20.6h5.5v5.5h-5.5zM134.7 -15.6h5.5v5.5h-5.5zM134.7 -10.6h5.5v5.5h-5.5zM149.7 9.4h5.5v5.5h-5.5zM144.7 24.4h5.5v5.5h-5.5zM189.7 54.4h5.5v5.5h-5.5zM179.7 84.4h5.5v5.5h-5.5zM149.7 89.4h5.5v5.5h-5.5zM164.7 124.4h5.5v5.5h-5.5zM224.7 129.4h5.5v5.5h-5.5zM244.7 139.4h5.5v5.5h-5.5zM269.7 154.4h5.5v5.5h-5.5zM219.7 194.4h10.5v5.5h-10.5zM299.7 194.4h5.5v5.5h-5.5zM309.7 194.4h5.5v5.5h-5.5zM304.7 224.4h5.5v5.5h-5.5zM389.7 269.4h5.5v5.5h-5.5zM309.7 274.4h5.5v5.5h-5.5zM379.7 274.4h5.5v5.5h-5.5z"/><path fill="rgb(24,24,24)" d="M114.7 24.4h5.5v5.5h-5.5zM194.7 29.4h5.5v5.5h-5.5zM199.7 34.4h5.5v5.5h-5.5zM179.7 54.4h5.5v5.5h-5.5zM154.7 114.4h5.5v5.5h-5.5zM174.7 119.4h5.5v5.5h-5.5zM169.7 124.4h5.5v5.5h-5.5zM154.7 149.4h5.5v5.5h-5.5zM154.7 154.4h5.5v5.5h-5.5zM304.7 194.4h5.5v5.5h-5.5zM409.7 204.4h5.5v5.5h-5.5zM314.7 219.4h5.5v5.5h-5.5zM309.7 224.4h5.5v5.5h-5.5zM299.7 274.4h5.5v5.5h-5.5z"/><path fill="rgb(25,25,25)" d="M114.7 19.4h5.5v5.5h-5.5zM164.7 59.4h5.5v5.5h-5.5zM169.7 69.4h5.5v5.5h-5.5zM179.7 129.4h5.5v5.5h-5.5zM189.7 129.4h5.5v5.5h-5.5zM219.7 129.4h5.5v5.5h-5.5zM209.7 134.4h5.5v5.5h-5.5zM204.7 139.4h5.5v5.5h-5.5zM154.7 144.4h5.5v5.5h-5.5zM199.7 149.4h5.5v5.5h-5.5zM244.7 149.4h5.5v5.5h-5.5zM264.7 164.4h5.5v5.5h-5.5zM214.7 179.4h5.5v5.5h-5.5zM254.7 179.4h5.5v5.5h-5.5zM274.7 179.4h5.5v5.5h-5.5zM249.7 184.4h5.5v5.5h-5.5zM199.7 194.4h5.5v5.5h-5.5zM214.7 194.4h5.5v5.5h-5.5zM279.7 194.4h5.5v5.5h-5.5zM399.7 259.4h10.5v5.5h-10.5zM384.7 264.4h5.5v5.5h-5.5zM404.7 264.4h5.5v5.5h-5.5zM394.7 269.4h5.5v5.5h-5.5zM319.7 279.4h5.5v5.5h-5.5zM369.7 279.4h5.5v5.5h-5.5z"/><path fill="rgb(26,26,26)" d="M99.7 19.4h5.5v5.5h-5.5zM99.7 24.4h5.5v5.5h-5.5zM139.7 24.4h5.5v5.5h-5.5zM164.7 54.4h5.5v5.5h-5.5zM184.7 54.4h5.5v5.5h-5.5zM199.7 119.4h5.5v5.5h-5.5zM159.7 124.4h5.5v5.5h-5.5zM184.7 129.4h5.5v5.5h-5.5zM249.7 129.4h5.5v5.5h-5.5zM254.7 134.4h5.5v5.5h-5.5zM174.7 149.4h5.5v5.5h-5.5zM249.7 149.4h5.5v5.5h-5.5zM214.7 159.4h5.5v5.5h-5.5zM259.7 174.4h5.5v5.5h-5.5zM204.7 184.4h5.5v5.5h-5.5zM274.7 184.4h5.5v5.5h-5.5zM229.7 194.4h5.5v5.5h-5.5zM304.7 214.4h10.5v5.5h-10.5zM299.7 219.4h5.5v5.5h-5.5zM324.7 264.4h10.5v5.5h-10.5zM364.7 264.4h15.5v5.5h-15.5z"/><path fill="rgb(27,27,27)" d="M129.7 -0.6h5.5v5.5h-5.5zM129.7 4.4h10.5v5.5h-10.5zM184.7 44.4h5.5v5.5h-5.5zM189.7 49.4h5.5v5.5h-5.5zM194.7 129.4h5.5v5.5h-5.5zM254.7 129.4h5.5v5.5h-5.5zM184.7 134.4h5.5v5.5h-5.5zM249.7 134.4h5.5v5.5h-5.5zM179.7 144.4h5.5v5.5h-5.5zM244.7 144.4h5.5v5.5h-5.5zM269.7 159.4h5.5v5.5h-5.5zM264.7 169.4h5.5v5.5h-5.5zM189.7 189.4h5.5v5.5h-5.5zM274.7 189.4h5.5v5.5h-5.5zM339.7 204.4h5.5v5.5h-5.5zM374.7 209.4h10.5v5.5h-10.5zM314.7 214.4h5.5v5.5h-5.5zM319.7 219.4h5.5v5.5h-5.5zM394.7 259.4h5.5v5.5h-5.5zM409.7 259.4h5.5v5.5h-5.5zM319.7 264.4h5.5v5.5h-5.5zM334.7 264.4h30.5v5.5h-30.5zM379.7 264.4h5.5v5.5h-5.5zM294.7 269.4h5.5v5.5h-5.5zM324.7 284.4h5.5v5.5h-5.5z"/><path fill="rgb(28,28,28)" d="M129.7 -20.6h5.5v5.5h-5.5zM129.7 -15.6h5.5v5.5h-5.5zM129.7 -10.6h5.5v5.5h-5.5zM129.7 -5.6h5.5v5.5h-5.5zM144.7 19.4h5.5v5.5h-5.5zM119.7 24.4h5.5v5.5h-5.5zM139.7 64.4h5.5v5.5h-5.5zM174.7 79.4h5.5v5.5h-5.5zM249.7 119.4h10.5v5.5h-10.5zM174.7 124.4h5.5v5.5h-5.5zM159.7 129.4h5.5v5.5h-5.5zM214.7 129.4h5.5v5.5h-5.5zM159.7 134.4h5.5v5.5h-5.5zM199.7 144.4h5.5v5.5h-5.5zM254.7 144.4h5.5v5.5h-5.5zM199.7 154.4h5.5v5.5h-5.5zM214.7 174.4h5.5v5.5h-5.5zM189.7 194.4h5.5v5.5h-5.5zM349.7 209.4h25.5v5.5h-25.5zM384.7 209.4h5.5v5.5h-5.5zM299.7 214.4h5.5v5.5h-5.5zM319.7 214.4h5.5v5.5h-5.5zM314.7 224.4h5.5v5.5h-5.5zM304.7 229.4h5.5v5.5h-5.5zM384.7 274.4h5.5v5.5h-5.5zM374.7 279.4h5.5v5.5h-5.5zM329.7 284.4h5.5v5.5h-5.5z"/><path fill="rgb(29,29,29)" d="M119.7 19.4h5.5v5.5h-5.5zM194.7 34.4h5.5v5.5h-5.5zM139.7 59.4h5.5v5.5h-5.5zM149.7 99.4h5.5v5.5h-5.5zM229.7 119.4h5.5v5.5h-5.5zM229.7 124.4h5.5v5.5h-5.5zM254.7 139.4h5.5v5.5h-5.5zM174.7 154.4h5.5v5.5h-5.5zM159.7 159.4h5.5v5.5h-5.5zM269.7 164.4h5.5v5.5h-5.5zM214.7 169.4h5.5v5.5h-5.5zM269.7 169.4h5.5v5.5h-5.5zM199.7 184.4h5.5v5.5h-5.5zM209.7 194.4h5.5v5.5h-5.5zM414.7 204.4h5.5v5.5h-5.5zM344.7 209.4h5.5v5.5h-5.5zM324.7 214.4h5.5v5.5h-5.5zM299.7 224.4h5.5v5.5h-5.5zM314.7 264.4h5.5v5.5h-5.5zM409.7 264.4h5.5v5.5h-5.5z"/><path fill="rgb(30,30,30)" d="M134.7 24.4h5.5v5.5h-5.5zM189.7 29.4h5.5v5.5h-5.5zM134.7 64.4h5.5v5.5h-5.5zM174.7 84.4h5.5v5.5h-5.5zM149.7 104.4h5.5v5.5h-5.5zM154.7 119.4h5.5v5.5h-5.5zM214.7 119.4h10.5v5.5h-10.5zM184.7 124.4h5.5v5.5h-5.5zM204.7 134.4h5.5v5.5h-5.5zM184.7 139.4h5.5v5.5h-5.5zM214.7 164.4h5.5v5.5h-5.5zM204.7 194.4h5.5v5.5h-5.5zM329.7 199.4h5.5v5.5h-5.5zM279.7 214.4h10.5v5.5h-10.5zM294.7 214.4h5.5v5.5h-5.5zM324.7 219.4h5.5v5.5h-5.5zM279.7 254.4h5.5v5.5h-5.5zM284.7 259.4h5.5v5.5h-5.5zM284.7 264.4h30.5v5.5h-30.5zM284.7 269.4h10.5v5.5h-10.5zM399.7 269.4h5.5v5.5h-5.5z"/><path fill="rgb(31,31,31)" d="M144.7 4.4h5.5v5.5h-5.5zM129.7 9.4h5.5v5.5h-5.5zM109.7 14.4h10.5v5.5h-10.5zM124.7 14.4h10.5v5.5h-10.5zM124.7 19.4h10.5v5.5h-10.5zM124.7 24.4h10.5v5.5h-10.5zM109.7 29.4h5.5v5.5h-5.5zM184.7 49.4h5.5v5.5h-5.5zM169.7 74.4h5.5v5.5h-5.5zM184.7 119.4h5.5v5.5h-5.5zM204.7 119.4h10.5v5.5h-10.5zM224.7 119.4h5.5v5.5h-5.5zM199.7 124.4h5.5v5.5h-5.5zM249.7 124.4h10.5v5.5h-10.5zM209.7 129.4h5.5v5.5h-5.5zM189.7 134.4h5.5v5.5h-5.5zM199.7 139.4h5.5v5.5h-5.5zM164.7 159.4h5.5v5.5h-5.5zM209.7 159.4h5.5v5.5h-5.5zM209.7 179.4h5.5v5.5h-5.5zM339.7 209.4h5.5v5.5h-5.5zM389.7 209.4h5.5v5.5h-5.5zM289.7 214.4h5.5v5.5h-5.5zM329.7 214.4h5.5v5.5h-5.5zM309.7 229.4h5.5v5.5h-5.5zM284.7 254.4h5.5v5.5h-5.5zM279.7 259.4h5.5v5.5h-5.5zM389.7 259.4h5.5v5.5h-5.5zM414.7 259.4h5.5v5.5h-5.5zM279.7 269.4h5.5v5.5h-5.5zM294.7 274.4h5.5v5.5h-5.5z"/><path fill="rgb(32,32,32)" d="M119.7 14.4h5.5v5.5h-5.5zM134.7 19.4h5.5v5.5h-5.5zM114.7 29.4h5.5v5.5h-5.5zM184.7 39.4h5.5v5.5h-5.5zM144.7 59.4h5.5v5.5h-5.5zM149.7 109.4h5.5v5.5h-5.5zM179.7 119.4h5.5v5.5h-5.5zM154.7 124.4h5.5v5.5h-5.5zM224.7 124.4h5.5v5.5h-5.5zM199.7 134.4h5.5v5.5h-5.5zM249.7 139.4h5.5v5.5h-5.5zM204.7 159.4h5.5v5.5h-5.5zM264.7 174.4h10.5v5.5h-10.5zM244.7 189.4h5.5v5.5h-5.5zM419.7 204.4h5.5v5.5h-5.5zM334.7 214.4h10.5v5.5h-10.5zM319.7 224.4h5.5v5.5h-5.5zM299.7 229.4h5.5v5.5h-5.5zM279.7 249.4h10.5v5.5h-10.5zM289.7 259.4h5.5v5.5h-5.5zM279.7 264.4h5.5v5.5h-5.5zM334.7 284.4h15.5v5.5h-15.5z"/><path fill="rgb(33,33,33)" d="M139.7 4.4h5.5v5.5h-5.5zM139.7 19.4h5.5v5.5h-5.5zM144.7 64.4h5.5v5.5h-5.5zM164.7 64.4h5.5v5.5h-5.5zM179.7 124.4h5.5v5.5h-5.5zM214.7 124.4h10.5v5.5h-10.5zM199.7 129.4h5.5v5.5h-5.5zM194.7 134.4h5.5v5.5h-5.5zM249.7 144.4h5.5v5.5h-5.5zM179.7 149.4h5.5v5.5h-5.5zM204.7 179.4h5.5v5.5h-5.5zM259.7 179.4h5.5v5.5h-5.5zM254.7 184.4h5.5v5.5h-5.5zM334.7 204.4h5.5v5.5h-5.5zM434.7 204.4h15.5v5.5h-15.5zM334.7 209.4h5.5v5.5h-5.5zM394.7 209.4h5.5v5.5h-5.5zM274.7 214.4h5.5v5.5h-5.5zM344.7 214.4h5.5v5.5h-5.5zM294.7 219.4h5.5v5.5h-5.5zM274.7 254.4h5.5v5.5h-5.5zM404.7 254.4h10.5v5.5h-10.5zM279.7 274.4h10.5v5.5h-10.5zM389.7 274.4h5.5v5.5h-5.5zM349.7 284.4h5.5v5.5h-5.5z"/><path fill="rgb(34,34,34)" d="M104.7 14.4h5.5v5.5h-5.5zM104.7 29.4h5.5v5.5h-5.5zM179.7 49.4h5.5v5.5h-5.5zM134.7 59.4h5.5v5.5h-5.5zM204.7 129.4h5.5v5.5h-5.5zM194.7 184.4h5.5v5.5h-5.5zM289.7 199.4h5.5v5.5h-5.5zM424.7 204.4h10.5v5.5h-10.5zM289.7 209.4h5.5v5.5h-5.5zM399.7 209.4h5.5v5.5h-5.5zM329.7 219.4h5.5v5.5h-5.5zM289.7 254.4h5.5v5.5h-5.5zM414.7 254.4h5.5v5.5h-5.5zM274.7 259.4h5.5v5.5h-5.5zM274.7 269.4h5.5v5.5h-5.5zM289.7 274.4h5.5v5.5h-5.5z"/><path fill="rgb(35,35,35)" d="M124.7 -20.6h5.5v5.5h-5.5zM124.7 -15.6h5.5v5.5h-5.5zM124.7 -10.6h5.5v5.5h-5.5zM124.7 -5.6h5.5v5.5h-5.5zM124.7 -0.6h5.5v5.5h-5.5zM124.7 4.4h5.5v5.5h-5.5zM124.7 9.4h5.5v5.5h-5.5zM134.7 14.4h5.5v5.5h-5.5zM159.7 54.4h5.5v5.5h-5.5zM159.7 59.4h5.5v5.5h-5.5zM154.7 139.4h5.5v5.5h-5.5zM149.7 149.4h5.5v5.5h-5.5zM149.7 154.4h5.5v5.5h-5.5zM209.7 174.4h5.5v5.5h-5.5zM234.7 194.4h5.5v5.5h-5.5zM284.7 209.4h5.5v5.5h-5.5zM294.7 209.4h5.5v5.5h-5.5zM329.7 209.4h5.5v5.5h-5.5zM349.7 214.4h5.5v5.5h-5.5zM374.7 214.4h10.5v5.5h-10.5zM279.7 219.4h10.5v5.5h-10.5zM334.7 219.4h10.5v5.5h-10.5zM304.7 234.4h5.5v5.5h-5.5zM284.7 244.4h5.5v5.5h-5.5zM274.7 249.4h5.5v5.5h-5.5zM289.7 249.4h5.5v5.5h-5.5zM399.7 254.4h5.5v5.5h-5.5zM419.7 254.4h30.5v5.5h-30.5zM384.7 259.4h5.5v5.5h-5.5zM274.7 264.4h5.5v5.5h-5.5zM379.7 279.4h5.5v5.5h-5.5zM354.7 284.4h5.5v5.5h-5.5z"/><path fill="rgb(36,36,36)" d="M134.7 9.4h5.5v5.5h-5.5zM144.7 14.4h5.5v5.5h-5.5zM119.7 29.4h5.5v5.5h-5.5zM144.7 29.4h5.5v5.5h-5.5zM189.7 34.4h5.5v5.5h-5.5zM174.7 49.4h5.5v5.5h-5.5zM149.7 59.4h5.5v5.5h-5.5zM169.7 84.4h5.5v5.5h-5.5zM209.7 124.4h5.5v5.5h-5.5zM154.7 159.4h5.5v5.5h-5.5zM269.7 179.4h5.5v5.5h-5.5zM279.7 209.4h5.5v5.5h-5.5zM354.7 214.4h20.5v5.5h-20.5zM289.7 219.4h5.5v5.5h-5.5zM344.7 219.4h5.5v5.5h-5.5zM324.7 224.4h5.5v5.5h-5.5zM314.7 229.4h5.5v5.5h-5.5zM299.7 234.4h5.5v5.5h-5.5zM279.7 244.4h5.5v5.5h-5.5zM289.7 244.4h5.5v5.5h-5.5zM294.7 259.4h5.5v5.5h-5.5zM329.7 259.4h5.5v5.5h-5.5zM419.7 259.4h5.5v5.5h-5.5zM434.7 259.4h10.5v5.5h-10.5zM274.7 274.4h5.5v5.5h-5.5z"/><path fill="rgb(37,37,37)" d="M94.7 19.4h5.5v5.5h-5.5zM94.7 24.4h5.5v5.5h-5.5zM184.7 29.4h5.5v5.5h-5.5zM179.7 44.4h5.5v5.5h-5.5zM144.7 94.4h5.5v5.5h-5.5zM204.7 124.4h5.5v5.5h-5.5zM154.7 129.4h5.5v5.5h-5.5zM199.7 159.4h5.5v5.5h-5.5zM209.7 164.4h5.5v5.5h-5.5zM209.7 169.4h5.5v5.5h-5.5zM204.7 174.4h5.5v5.5h-5.5zM199.7 179.4h5.5v5.5h-5.5zM284.7 199.4h5.5v5.5h-5.5zM324.7 259.4h5.5v5.5h-5.5zM334.7 259.4h45.5v5.5h-45.5zM429.7 259.4h5.5v5.5h-5.5zM444.7 259.4h5.5v5.5h-5.5zM404.7 269.4h5.5v5.5h-5.5zM279.7 279.4h10.5v5.5h-10.5zM279.7 284.4h5.5v5.5h-5.5zM234.7 309.4h5.5v5.5h-5.5z"/><path fill="rgb(38,38,38)" d="M149.7 29.4h15.5v5.5h-15.5zM169.7 79.4h5.5v5.5h-5.5zM94.7 104.4h10.5v5.5h-10.5zM94.7 109.4h5.5v5.5h-5.5zM189.7 139.4h10.5v5.5h-10.5zM184.7 144.4h5.5v5.5h-5.5zM264.7 179.4h5.5v5.5h-5.5zM269.7 184.4h5.5v5.5h-5.5zM274.7 194.4h5.5v5.5h-5.5zM294.7 199.4h5.5v5.5h-5.5zM324.7 199.4h5.5v5.5h-5.5zM314.7 209.4h15.5v5.5h-15.5zM384.7 214.4h5.5v5.5h-5.5zM294.7 224.4h5.5v5.5h-5.5zM394.7 254.4h5.5v5.5h-5.5zM379.7 259.4h5.5v5.5h-5.5zM424.7 259.4h5.5v5.5h-5.5zM414.7 264.4h5.5v5.5h-5.5zM279.7 289.4h5.5v5.5h-5.5zM229.7 309.4h5.5v5.5h-5.5z"/><path fill="rgb(39,39,39)" d="M109.7 9.4h15.5v5.5h-15.5zM99.7 14.4h5.5v5.5h-5.5zM139.7 29.4h5.5v5.5h-5.5zM169.7 49.4h5.5v5.5h-5.5zM154.7 59.4h5.5v5.5h-5.5zM164.7 84.4h5.5v5.5h-5.5zM144.7 89.4h5.5v5.5h-5.5zM149.7 144.4h5.5v5.5h-5.5zM169.7 159.4h5.5v5.5h-5.5zM204.7 169.4h5.5v5.5h-5.5zM199.7 174.4h5.5v5.5h-5.5zM189.7 184.4h5.5v5.5h-5.5zM289.7 204.4h5.5v5.5h-5.5zM274.7 209.4h5.5v5.5h-5.5zM299.7 209.4h5.5v5.5h-5.5zM309.7 209.4h5.5v5.5h-5.5zM274.7 219.4h5.5v5.5h-5.5zM269.7 229.4h10.5v5.5h-10.5zM269.7 234.4h10.5v5.5h-10.5zM319.7 259.4h5.5v5.5h-5.5zM269.7 264.4h5.5v5.5h-5.5zM269.7 269.4h5.5v5.5h-5.5zM284.7 284.4h5.5v5.5h-5.5zM319.7 284.4h5.5v5.5h-5.5zM359.7 284.4h5.5v5.5h-5.5zM239.7 309.4h5.5v5.5h-5.5z"/><path fill="rgb(40,40,40)" d="M164.7 29.4h5.5v5.5h-5.5zM134.7 69.4h5.5v5.5h-5.5zM164.7 69.4h5.5v5.5h-5.5zM159.7 84.4h5.5v5.5h-5.5zM99.7 99.4h5.5v5.5h-5.5zM144.7 99.4h5.5v5.5h-5.5zM149.7 114.4h5.5v5.5h-5.5zM179.7 154.4h5.5v5.5h-5.5zM204.7 164.4h5.5v5.5h-5.5zM259.7 184.4h5.5v5.5h-5.5zM249.7 189.4h5.5v5.5h-5.5zM194.7 199.4h5.5v5.5h-5.5zM329.7 204.4h5.5v5.5h-5.5zM304.7 209.4h5.5v5.5h-5.5zM404.7 209.4h5.5v5.5h-5.5zM349.7 219.4h5.5v5.5h-5.5zM329.7 224.4h5.5v5.5h-5.5zM319.7 229.4h5.5v5.5h-5.5zM309.7 234.4h5.5v5.5h-5.5zM279.7 239.4h25.5v5.5h-25.5zM274.7 244.4h5.5v5.5h-5.5zM294.7 244.4h5.5v5.5h-5.5zM404.7 249.4h45.5v5.5h-45.5zM269.7 259.4h5.5v5.5h-5.5zM394.7 274.4h5.5v5.5h-5.5zM274.7 279.4h5.5v5.5h-5.5zM289.7 279.4h5.5v5.5h-5.5zM299.7 279.4h5.5v5.5h-5.5zM274.7 289.4h5.5v5.5h-5.5z"/><path fill="rgb(41,41,41)" d="M119.7 -20.6h5.5v5.5h-5.5zM119.7 -15.6h5.5v5.5h-5.5zM119.7 -10.6h5.5v5.5h-5.5zM119.7 -5.6h5.5v5.5h-5.5zM139.7 14.4h5.5v5.5h-5.5zM99.7 29.4h5.5v5.5h-5.5zM124.7 29.4h5.5v5.5h-5.5zM139.7 54.4h5.5v5.5h-5.5zM149.7 64.4h5.5v5.5h-5.5zM139.7 69.4h5.5v5.5h-5.5zM94.7 99.4h5.5v5.5h-5.5zM144.7 104.4h5.5v5.5h-5.5zM94.7 114.4h5.5v5.5h-5.5zM159.7 164.4h5.5v5.5h-5.5zM269.7 189.4h5.5v5.5h-5.5zM314.7 199.4h10.5v5.5h-10.5zM269.7 214.4h5.5v5.5h-5.5zM279.7 224.4h5.5v5.5h-5.5zM294.7 229.4h5.5v5.5h-5.5zM294.7 234.4h5.5v5.5h-5.5zM274.7 239.4h5.5v5.5h-5.5zM269.7 254.4h5.5v5.5h-5.5zM294.7 254.4h5.5v5.5h-5.5zM269.7 274.4h5.5v5.5h-5.5zM294.7 279.4h5.5v5.5h-5.5zM314.7 279.4h5.5v5.5h-5.5zM274.7 284.4h5.5v5.5h-5.5zM284.7 289.4h5.5v5.5h-5.5zM224.7 309.4h5.5v5.5h-5.5z"/><path fill="rgb(42,42,42)" d="M119.7 -0.6h5.5v5.5h-5.5zM119.7 4.4h5.5v5.5h-5.5zM144.7 9.4h5.5v5.5h-5.5zM154.7 54.4h5.5v5.5h-5.5zM164.7 74.4h5.5v5.5h-5.5zM114.7 104.4h10.5v5.5h-10.5zM99.7 109.4h5.5v5.5h-5.5zM154.7 134.4h5.5v5.5h-5.5zM194.7 144.4h5.5v5.5h-5.5zM199.7 169.4h5.5v5.5h-5.5zM194.7 179.4h5.5v5.5h-5.5zM264.7 184.4h5.5v5.5h-5.5zM184.7 189.4h5.5v5.5h-5.5zM389.7 214.4h5.5v5.5h-5.5zM354.7 219.4h30.5v5.5h-30.5zM274.7 224.4h5.5v5.5h-5.5zM284.7 224.4h5.5v5.5h-5.5zM334.7 224.4h10.5v5.5h-10.5zM264.7 229.4h5.5v5.5h-5.5zM279.7 234.4h5.5v5.5h-5.5zM294.7 249.4h5.5v5.5h-5.5zM399.7 249.4h5.5v5.5h-5.5zM299.7 259.4h5.5v5.5h-5.5zM314.7 259.4h5.5v5.5h-5.5z"/><path fill="rgb(43,43,43)" d="M44.7 -5.6h5.5v5.5h-5.5zM79.7 -5.6h5.5v5.5h-5.5zM44.7 -0.6h5.5v5.5h-5.5zM79.7 -0.6h5.5v5.5h-5.5zM104.7 9.4h5.5v5.5h-5.5zM134.7 29.4h5.5v5.5h-5.5zM179.7 29.4h5.5v5.5h-5.5zM164.7 49.4h5.5v5.5h-5.5zM134.7 54.4h5.5v5.5h-5.5zM129.7 64.4h5.5v5.5h-5.5zM159.7 64.4h5.5v5.5h-5.5zM154.7 84.4h5.5v5.5h-5.5zM114.7 99.4h5.5v5.5h-5.5zM199.7 164.4h5.5v5.5h-5.5zM194.7 174.4h5.5v5.5h-5.5zM284.7 204.4h5.5v5.5h-5.5zM294.7 204.4h5.5v5.5h-5.5zM289.7 224.4h5.5v5.5h-5.5zM279.7 229.4h5.5v5.5h-5.5zM324.7 229.4h5.5v5.5h-5.5zM264.7 234.4h5.5v5.5h-5.5zM424.7 234.4h25.5v5.5h-25.5zM304.7 239.4h5.5v5.5h-5.5zM389.7 254.4h5.5v5.5h-5.5zM384.7 279.4h5.5v5.5h-5.5zM364.7 284.4h5.5v5.5h-5.5zM164.7 304.4h10.5v5.5h-10.5zM244.7 309.4h5.5v5.5h-5.5z"/><path fill="rgb(44,44,44)" d="M79.7 -20.6h5.5v5.5h-5.5zM104.7 -20.6h5.5v5.5h-5.5zM79.7 -15.6h5.5v5.5h-5.5zM104.7 -15.6h5.5v5.5h-5.5zM44.7 -10.6h5.5v5.5h-5.5zM79.7 -10.6h5.5v5.5h-5.5zM104.7 -10.6h5.5v5.5h-5.5zM84.7 -5.6h5.5v5.5h-5.5zM104.7 -5.6h5.5v5.5h-5.5zM84.7 -0.6h5.5v5.5h-5.5zM129.7 29.4h5.5v5.5h-5.5zM169.7 29.4h5.5v5.5h-5.5zM184.7 34.4h5.5v5.5h-5.5zM174.7 44.4h5.5v5.5h-5.5zM144.7 54.4h5.5v5.5h-5.5zM144.7 69.4h5.5v5.5h-5.5zM104.7 99.4h5.5v5.5h-5.5zM119.7 99.4h5.5v5.5h-5.5zM104.7 104.4h10.5v5.5h-10.5zM124.7 104.4h5.5v5.5h-5.5zM199.7 199.4h5.5v5.5h-5.5zM279.7 199.4h5.5v5.5h-5.5zM309.7 199.4h5.5v5.5h-5.5zM384.7 219.4h5.5v5.5h-5.5zM269.7 224.4h5.5v5.5h-5.5zM344.7 224.4h5.5v5.5h-5.5zM314.7 234.4h5.5v5.5h-5.5zM419.7 234.4h5.5v5.5h-5.5zM424.7 239.4h10.5v5.5h-10.5zM444.7 239.4h5.5v5.5h-5.5zM394.7 244.4h55.5v5.5h-55.5zM304.7 279.4h5.5v5.5h-5.5zM289.7 284.4h5.5v5.5h-5.5zM219.7 309.4h5.5v5.5h-5.5z"/><path fill="rgb(45,45,45)" d="M44.7 -20.6h5.5v5.5h-5.5zM84.7 -20.6h5.5v5.5h-5.5zM109.7 -20.6h10.5v5.5h-10.5zM44.7 -15.6h5.5v5.5h-5.5zM84.7 -15.6h5.5v5.5h-5.5zM109.7 -15.6h10.5v5.5h-10.5zM84.7 -10.6h5.5v5.5h-5.5zM109.7 -10.6h10.5v5.5h-10.5zM109.7 -5.6h10.5v5.5h-10.5zM49.7 -0.6h5.5v5.5h-5.5zM104.7 -0.6h15.5v5.5h-15.5zM114.7 4.4h5.5v5.5h-5.5zM179.7 39.4h5.5v5.5h-5.5zM149.7 54.4h5.5v5.5h-5.5zM154.7 64.4h5.5v5.5h-5.5zM164.7 79.4h5.5v5.5h-5.5zM109.7 99.4h5.5v5.5h-5.5zM144.7 149.4h5.5v5.5h-5.5zM184.7 149.4h5.5v5.5h-5.5zM189.7 179.4h5.5v5.5h-5.5zM254.7 189.4h5.5v5.5h-5.5zM269.7 219.4h5.5v5.5h-5.5zM424.7 229.4h5.5v5.5h-5.5zM394.7 239.4h10.5v5.5h-10.5zM414.7 239.4h10.5v5.5h-10.5zM434.7 239.4h10.5v5.5h-10.5zM269.7 249.4h5.5v5.5h-5.5zM394.7 249.4h5.5v5.5h-5.5zM264.7 264.4h5.5v5.5h-5.5zM264.7 269.4h5.5v5.5h-5.5zM409.7 269.4h5.5v5.5h-5.5zM269.7 279.4h5.5v5.5h-5.5zM269.7 289.4h5.5v5.5h-5.5zM274.7 294.4h5.5v5.5h-5.5zM244.7 304.4h10.5v5.5h-10.5zM214.7 309.4h5.5v5.5h-5.5z"/><path fill="rgb(46,46,46)" d="M99.7 -20.6h5.5v5.5h-5.5zM99.7 -15.6h5.5v5.5h-5.5zM99.7 -10.6h5.5v5.5h-5.5zM49.7 -5.6h5.5v5.5h-5.5zM99.7 -5.6h5.5v5.5h-5.5zM109.7 4.4h5.5v5.5h-5.5zM139.7 9.4h5.5v5.5h-5.5zM94.7 14.4h5.5v5.5h-5.5zM174.7 29.4h5.5v5.5h-5.5zM149.7 69.4h5.5v5.5h-5.5zM149.7 84.4h5.5v5.5h-5.5zM124.7 99.4h5.5v5.5h-5.5zM144.7 109.4h5.5v5.5h-5.5zM149.7 124.4h5.5v5.5h-5.5zM189.7 144.4h5.5v5.5h-5.5zM194.7 149.4h5.5v5.5h-5.5zM144.7 154.4h5.5v5.5h-5.5zM194.7 154.4h5.5v5.5h-5.5zM184.7 184.4h5.5v5.5h-5.5zM239.7 194.4h5.5v5.5h-5.5zM299.7 199.4h5.5v5.5h-5.5zM269.7 209.4h5.5v5.5h-5.5zM394.7 214.4h5.5v5.5h-5.5zM429.7 229.4h5.5v5.5h-5.5zM439.7 229.4h10.5v5.5h-10.5zM284.7 234.4h10.5v5.5h-10.5zM319.7 234.4h5.5v5.5h-5.5zM269.7 239.4h5.5v5.5h-5.5zM389.7 239.4h5.5v5.5h-5.5zM404.7 239.4h10.5v5.5h-10.5zM299.7 244.4h5.5v5.5h-5.5zM304.7 259.4h10.5v5.5h-10.5zM269.7 284.4h5.5v5.5h-5.5zM369.7 284.4h5.5v5.5h-5.5zM269.7 294.4h5.5v5.5h-5.5zM174.7 304.4h5.5v5.5h-5.5zM254.7 304.4h5.5v5.5h-5.5z"/><path fill="rgb(47,47,47)" d="M49.7 -10.6h5.5v5.5h-5.5zM99.7 -0.6h5.5v5.5h-5.5zM159.7 49.4h5.5v5.5h-5.5zM194.7 159.4h5.5v5.5h-5.5zM189.7 174.4h5.5v5.5h-5.5zM259.7 189.4h10.5v5.5h-10.5zM324.7 204.4h5.5v5.5h-5.5zM409.7 209.4h5.5v5.5h-5.5zM349.7 224.4h5.5v5.5h-5.5zM379.7 224.4h5.5v5.5h-5.5zM284.7 229.4h5.5v5.5h-5.5zM329.7 229.4h5.5v5.5h-5.5zM434.7 229.4h5.5v5.5h-5.5zM414.7 234.4h5.5v5.5h-5.5zM389.7 244.4h5.5v5.5h-5.5zM384.7 254.4h5.5v5.5h-5.5zM279.7 294.4h5.5v5.5h-5.5zM159.7 304.4h5.5v5.5h-5.5zM239.7 304.4h5.5v5.5h-5.5z"/><path fill="rgb(48,48,48)" d="M49.7 -20.6h5.5v5.5h-5.5zM49.7 -15.6h5.5v5.5h-5.5zM99.7 9.4h5.5v5.5h-5.5zM89.7 24.4h5.5v5.5h-5.5zM94.7 29.4h5.5v5.5h-5.5zM134.7 49.4h5.5v5.5h-5.5zM154.7 69.4h10.5v5.5h-10.5zM99.7 89.4h5.5v5.5h-5.5zM129.7 104.4h5.5v5.5h-5.5zM139.7 104.4h5.5v5.5h-5.5zM114.7 109.4h15.5v5.5h-15.5zM99.7 114.4h5.5v5.5h-5.5zM149.7 119.4h5.5v5.5h-5.5zM134.7 149.4h10.5v5.5h-10.5zM154.7 164.4h5.5v5.5h-5.5zM164.7 164.4h5.5v5.5h-5.5zM194.7 169.4h5.5v5.5h-5.5zM184.7 179.4h5.5v5.5h-5.5zM184.7 194.4h5.5v5.5h-5.5zM304.7 199.4h5.5v5.5h-5.5zM279.7 204.4h5.5v5.5h-5.5zM314.7 204.4h10.5v5.5h-10.5zM389.7 219.4h5.5v5.5h-5.5zM374.7 224.4h5.5v5.5h-5.5zM384.7 224.4h5.5v5.5h-5.5zM259.7 229.4h5.5v5.5h-5.5zM289.7 229.4h5.5v5.5h-5.5zM419.7 229.4h5.5v5.5h-5.5zM259.7 234.4h5.5v5.5h-5.5zM309.7 239.4h5.5v5.5h-5.5zM324.7 254.4h55.5v5.5h-55.5zM264.7 259.4h5.5v5.5h-5.5zM264.7 274.4h5.5v5.5h-5.5zM399.7 274.4h5.5v5.5h-5.5zM309.7 279.4h5.5v5.5h-5.5zM289.7 289.4h5.5v5.5h-5.5zM259.7 299.4h10.5v5.5h-10.5zM209.7 304.4h10.5v5.5h-10.5zM209.7 309.4h5.5v5.5h-5.5zM249.7 309.4h5.5v5.5h-5.5z"/><path fill="rgb(49,49,49)" d="M89.7 -5.6h5.5v5.5h-5.5zM104.7 4.4h5.5v5.5h-5.5zM89.7 19.4h5.5v5.5h-5.5zM104.7 44.4h10.5v5.5h-10.5zM139.7 49.4h5.5v5.5h-5.5zM159.7 79.4h5.5v5.5h-5.5zM99.7 84.4h5.5v5.5h-5.5zM104.7 89.4h15.5v5.5h-15.5zM139.7 89.4h5.5v5.5h-5.5zM104.7 94.4h10.5v5.5h-10.5zM139.7 94.4h5.5v5.5h-5.5zM139.7 99.4h5.5v5.5h-5.5zM174.7 159.4h5.5v5.5h-5.5zM194.7 164.4h5.5v5.5h-5.5zM189.7 199.4h5.5v5.5h-5.5zM354.7 224.4h20.5v5.5h-20.5zM239.7 234.4h10.5v5.5h-10.5zM324.7 234.4h5.5v5.5h-5.5zM389.7 234.4h25.5v5.5h-25.5zM384.7 239.4h5.5v5.5h-5.5zM269.7 244.4h5.5v5.5h-5.5zM299.7 249.4h5.5v5.5h-5.5zM389.7 249.4h5.5v5.5h-5.5zM299.7 254.4h5.5v5.5h-5.5zM319.7 254.4h5.5v5.5h-5.5zM379.7 254.4h5.5v5.5h-5.5zM419.7 264.4h5.5v5.5h-5.5zM294.7 284.4h5.5v5.5h-5.5zM324.7 289.4h10.5v5.5h-10.5zM234.7 304.4h5.5v5.5h-5.5z"/><path fill="rgb(50,50,50)" d="M89.7 -20.6h5.5v5.5h-5.5zM89.7 -15.6h5.5v5.5h-5.5zM89.7 -10.6h5.5v5.5h-5.5zM74.7 -5.6h5.5v5.5h-5.5zM94.7 -5.6h5.5v5.5h-5.5zM74.7 -0.6h5.5v5.5h-5.5zM89.7 -0.6h5.5v5.5h-5.5zM89.7 29.4h5.5v5.5h-5.5zM169.7 44.4h5.5v5.5h-5.5zM139.7 74.4h5.5v5.5h-5.5zM159.7 74.4h5.5v5.5h-5.5zM104.7 84.4h15.5v5.5h-15.5zM144.7 84.4h5.5v5.5h-5.5zM119.7 89.4h15.5v5.5h-15.5zM99.7 94.4h5.5v5.5h-5.5zM129.7 99.4h5.5v5.5h-5.5zM134.7 104.4h5.5v5.5h-5.5zM129.7 109.4h5.5v5.5h-5.5zM149.7 159.4h5.5v5.5h-5.5zM269.7 194.4h5.5v5.5h-5.5zM309.7 204.4h5.5v5.5h-5.5zM399.7 214.4h5.5v5.5h-5.5zM264.7 224.4h5.5v5.5h-5.5zM334.7 229.4h5.5v5.5h-5.5zM384.7 229.4h5.5v5.5h-5.5zM234.7 234.4h5.5v5.5h-5.5zM249.7 234.4h10.5v5.5h-10.5zM384.7 234.4h5.5v5.5h-5.5zM314.7 239.4h10.5v5.5h-10.5zM304.7 244.4h5.5v5.5h-5.5zM314.7 254.4h5.5v5.5h-5.5zM264.7 294.4h5.5v5.5h-5.5zM179.7 304.4h5.5v5.5h-5.5zM259.7 304.4h5.5v5.5h-5.5z"/><path fill="rgb(51,51,51)" d="M74.7 -20.6h5.5v5.5h-5.5zM94.7 -20.6h5.5v5.5h-5.5zM74.7 -15.6h5.5v5.5h-5.5zM94.7 -15.6h5.5v5.5h-5.5zM74.7 -10.6h5.5v5.5h-5.5zM94.7 -10.6h5.5v5.5h-5.5zM94.7 -0.6h5.5v5.5h-5.5zM179.7 34.4h5.5v5.5h-5.5zM174.7 39.4h5.5v5.5h-5.5zM154.7 49.4h5.5v5.5h-5.5zM129.7 69.4h5.5v5.5h-5.5zM119.7 84.4h20.5v5.5h-20.5zM94.7 89.4h5.5v5.5h-5.5zM134.7 89.4h5.5v5.5h-5.5zM94.7 94.4h5.5v5.5h-5.5zM134.7 94.4h5.5v5.5h-5.5zM134.7 99.4h5.5v5.5h-5.5zM104.7 109.4h10.5v5.5h-10.5zM139.7 154.4h5.5v5.5h-5.5zM184.7 154.4h5.5v5.5h-5.5zM204.7 199.4h5.5v5.5h-5.5zM299.7 204.4h5.5v5.5h-5.5zM264.7 214.4h5.5v5.5h-5.5zM389.7 224.4h5.5v5.5h-5.5zM384.7 244.4h5.5v5.5h-5.5zM134.7 259.4h5.5v5.5h-5.5zM264.7 279.4h5.5v5.5h-5.5zM374.7 284.4h5.5v5.5h-5.5zM254.7 299.4h5.5v5.5h-5.5zM219.7 304.4h5.5v5.5h-5.5zM229.7 304.4h5.5v5.5h-5.5z"/><path fill="rgb(52,52,52)" d="M84.7 4.4h5.5v5.5h-5.5zM84.7 29.4h5.5v5.5h-5.5zM144.7 49.4h5.5v5.5h-5.5zM134.7 74.4h5.5v5.5h-5.5zM144.7 74.4h5.5v5.5h-5.5zM154.7 74.4h5.5v5.5h-5.5zM139.7 79.4h5.5v5.5h-5.5zM94.7 84.4h5.5v5.5h-5.5zM139.7 84.4h5.5v5.5h-5.5zM114.7 94.4h5.5v5.5h-5.5zM414.7 209.4h5.5v5.5h-5.5zM424.7 209.4h25.5v5.5h-25.5zM394.7 219.4h5.5v5.5h-5.5zM379.7 229.4h5.5v5.5h-5.5zM389.7 229.4h5.5v5.5h-5.5zM329.7 234.4h5.5v5.5h-5.5zM324.7 239.4h5.5v5.5h-5.5zM384.7 249.4h5.5v5.5h-5.5zM134.7 254.4h5.5v5.5h-5.5zM309.7 254.4h5.5v5.5h-5.5zM139.7 259.4h5.5v5.5h-5.5zM434.7 264.4h15.5v5.5h-15.5zM389.7 279.4h5.5v5.5h-5.5zM284.7 294.4h5.5v5.5h-5.5zM224.7 304.4h5.5v5.5h-5.5zM174.7 309.4h5.5v5.5h-5.5z"/><path fill="rgb(53,53,53)" d="M79.7 4.4h5.5v5.5h-5.5zM144.7 34.4h5.5v5.5h-5.5zM114.7 44.4h5.5v5.5h-5.5zM149.7 49.4h5.5v5.5h-5.5zM149.7 74.4h5.5v5.5h-5.5zM144.7 79.4h5.5v5.5h-5.5zM154.7 79.4h5.5v5.5h-5.5zM129.7 94.4h5.5v5.5h-5.5zM134.7 109.4h5.5v5.5h-5.5zM134.7 144.4h5.5v5.5h-5.5zM144.7 144.4h5.5v5.5h-5.5zM184.7 174.4h5.5v5.5h-5.5zM179.7 184.4h5.5v5.5h-5.5zM274.7 199.4h5.5v5.5h-5.5zM274.7 204.4h5.5v5.5h-5.5zM304.7 204.4h5.5v5.5h-5.5zM419.7 209.4h5.5v5.5h-5.5zM264.7 219.4h5.5v5.5h-5.5zM424.7 224.4h5.5v5.5h-5.5zM229.7 229.4h10.5v5.5h-10.5zM339.7 229.4h5.5v5.5h-5.5zM394.7 229.4h10.5v5.5h-10.5zM414.7 229.4h5.5v5.5h-5.5zM229.7 234.4h5.5v5.5h-5.5zM379.7 234.4h5.5v5.5h-5.5zM379.7 239.4h5.5v5.5h-5.5zM309.7 244.4h15.5v5.5h-15.5zM314.7 249.4h10.5v5.5h-10.5zM139.7 254.4h5.5v5.5h-5.5zM304.7 254.4h5.5v5.5h-5.5zM259.7 264.4h5.5v5.5h-5.5zM429.7 264.4h5.5v5.5h-5.5zM259.7 269.4h5.5v5.5h-5.5zM264.7 289.4h5.5v5.5h-5.5zM334.7 289.4h5.5v5.5h-5.5zM269.7 299.4h5.5v5.5h-5.5zM204.7 304.4h5.5v5.5h-5.5zM169.7 309.4h5.5v5.5h-5.5zM179.7 309.4h10.5v5.5h-10.5zM204.7 309.4h5.5v5.5h-5.5zM229.7 314.4h5.5v5.5h-5.5z"/><path fill="rgb(54,54,54)" d="M99.7 4.4h5.5v5.5h-5.5zM164.7 34.4h5.5v5.5h-5.5zM174.7 34.4h5.5v5.5h-5.5zM134.7 79.4h5.5v5.5h-5.5zM149.7 79.4h5.5v5.5h-5.5zM139.7 109.4h5.5v5.5h-5.5zM189.7 149.4h5.5v5.5h-5.5zM134.7 154.4h5.5v5.5h-5.5zM189.7 169.4h5.5v5.5h-5.5zM179.7 189.4h5.5v5.5h-5.5zM209.7 199.4h5.5v5.5h-5.5zM219.7 199.4h10.5v5.5h-10.5zM394.7 224.4h5.5v5.5h-5.5zM429.7 224.4h20.5v5.5h-20.5zM254.7 229.4h5.5v5.5h-5.5zM404.7 229.4h5.5v5.5h-5.5zM154.7 239.4h10.5v5.5h-10.5zM179.7 239.4h5.5v5.5h-5.5zM264.7 239.4h5.5v5.5h-5.5zM324.7 244.4h5.5v5.5h-5.5zM379.7 244.4h5.5v5.5h-5.5zM304.7 249.4h10.5v5.5h-10.5zM324.7 249.4h5.5v5.5h-5.5zM344.7 249.4h5.5v5.5h-5.5zM144.7 254.4h5.5v5.5h-5.5zM264.7 254.4h5.5v5.5h-5.5zM129.7 259.4h5.5v5.5h-5.5zM424.7 264.4h5.5v5.5h-5.5zM264.7 284.4h5.5v5.5h-5.5zM299.7 284.4h5.5v5.5h-5.5zM189.7 309.4h5.5v5.5h-5.5zM234.7 314.4h5.5v5.5h-5.5z"/><path fill="rgb(55,55,55)" d="M94.7 9.4h5.5v5.5h-5.5zM139.7 34.4h5.5v5.5h-5.5zM169.7 34.4h5.5v5.5h-5.5zM99.7 44.4h5.5v5.5h-5.5zM129.7 49.4h5.5v5.5h-5.5zM129.7 59.4h5.5v5.5h-5.5zM119.7 94.4h5.5v5.5h-5.5zM149.7 139.4h5.5v5.5h-5.5zM189.7 154.4h5.5v5.5h-5.5zM159.7 169.4h5.5v5.5h-5.5zM214.7 199.4h5.5v5.5h-5.5zM229.7 199.4h5.5v5.5h-5.5zM164.7 229.4h10.5v5.5h-10.5zM239.7 229.4h5.5v5.5h-5.5zM344.7 229.4h5.5v5.5h-5.5zM374.7 229.4h5.5v5.5h-5.5zM409.7 229.4h5.5v5.5h-5.5zM159.7 234.4h25.5v5.5h-25.5zM174.7 239.4h5.5v5.5h-5.5zM184.7 239.4h5.5v5.5h-5.5zM154.7 244.4h5.5v5.5h-5.5zM174.7 244.4h10.5v5.5h-10.5zM329.7 249.4h15.5v5.5h-15.5zM349.7 249.4h35.5v5.5h-35.5zM149.7 254.4h5.5v5.5h-5.5zM84.7 274.4h10.5v5.5h-10.5zM294.7 289.4h5.5v5.5h-5.5zM184.7 304.4h5.5v5.5h-5.5zM194.7 309.4h10.5v5.5h-10.5z"/><path fill="rgb(56,56,56)" d="M89.7 4.4h5.5v5.5h-5.5zM84.7 34.4h5.5v5.5h-5.5zM159.7 34.4h5.5v5.5h-5.5zM124.7 94.4h5.5v5.5h-5.5zM114.7 114.4h10.5v5.5h-10.5zM149.7 129.4h5.5v5.5h-5.5zM139.7 144.4h5.5v5.5h-5.5zM189.7 159.4h5.5v5.5h-5.5zM189.7 164.4h5.5v5.5h-5.5zM264.7 194.4h5.5v5.5h-5.5zM264.7 209.4h5.5v5.5h-5.5zM404.7 214.4h5.5v5.5h-5.5zM399.7 219.4h5.5v5.5h-5.5zM419.7 224.4h5.5v5.5h-5.5zM159.7 229.4h5.5v5.5h-5.5zM174.7 229.4h5.5v5.5h-5.5zM224.7 229.4h5.5v5.5h-5.5zM349.7 229.4h25.5v5.5h-25.5zM169.7 239.4h5.5v5.5h-5.5zM329.7 239.4h5.5v5.5h-5.5zM159.7 244.4h5.5v5.5h-5.5zM169.7 244.4h5.5v5.5h-5.5zM144.7 259.4h5.5v5.5h-5.5zM84.7 279.4h5.5v5.5h-5.5zM339.7 289.4h5.5v5.5h-5.5zM164.7 309.4h5.5v5.5h-5.5zM254.7 309.4h5.5v5.5h-5.5z"/><path fill="rgb(57,57,57)" d="M89.7 14.4h5.5v5.5h-5.5zM149.7 34.4h5.5v5.5h-5.5zM169.7 39.4h5.5v5.5h-5.5zM119.7 44.4h5.5v5.5h-5.5zM134.7 44.4h5.5v5.5h-5.5zM164.7 44.4h5.5v5.5h-5.5zM179.7 159.4h5.5v5.5h-5.5zM179.7 179.4h5.5v5.5h-5.5zM244.7 194.4h5.5v5.5h-5.5zM234.7 209.4h5.5v5.5h-5.5zM399.7 224.4h5.5v5.5h-5.5zM244.7 229.4h5.5v5.5h-5.5zM154.7 234.4h5.5v5.5h-5.5zM184.7 234.4h5.5v5.5h-5.5zM224.7 234.4h5.5v5.5h-5.5zM334.7 234.4h5.5v5.5h-5.5zM164.7 239.4h5.5v5.5h-5.5zM164.7 244.4h5.5v5.5h-5.5zM329.7 244.4h5.5v5.5h-5.5zM344.7 244.4h20.5v5.5h-20.5zM374.7 244.4h5.5v5.5h-5.5zM154.7 254.4h5.5v5.5h-5.5zM119.7 269.4h5.5v5.5h-5.5zM259.7 274.4h5.5v5.5h-5.5zM89.7 279.4h5.5v5.5h-5.5zM84.7 284.4h5.5v5.5h-5.5zM319.7 289.4h5.5v5.5h-5.5zM259.7 294.4h5.5v5.5h-5.5zM249.7 299.4h5.5v5.5h-5.5zM264.7 304.4h5.5v5.5h-5.5zM224.7 314.4h5.5v5.5h-5.5z"/><path fill="rgb(58,58,58)" d="M94.7 4.4h5.5v5.5h-5.5zM84.7 44.4h5.5v5.5h-5.5zM129.7 44.4h5.5v5.5h-5.5zM139.7 44.4h5.5v5.5h-5.5zM89.7 94.4h5.5v5.5h-5.5zM109.7 114.4h5.5v5.5h-5.5zM239.7 209.4h5.5v5.5h-5.5zM249.7 229.4h5.5v5.5h-5.5zM374.7 234.4h5.5v5.5h-5.5zM374.7 239.4h5.5v5.5h-5.5zM184.7 244.4h5.5v5.5h-5.5zM339.7 244.4h5.5v5.5h-5.5zM364.7 244.4h10.5v5.5h-10.5zM129.7 254.4h5.5v5.5h-5.5zM114.7 269.4h5.5v5.5h-5.5zM104.7 274.4h10.5v5.5h-10.5zM404.7 274.4h5.5v5.5h-5.5zM379.7 284.4h5.5v5.5h-5.5zM344.7 289.4h5.5v5.5h-5.5zM274.7 299.4h5.5v5.5h-5.5zM154.7 304.4h5.5v5.5h-5.5zM199.7 304.4h5.5v5.5h-5.5zM239.7 314.4h5.5v5.5h-5.5z"/><path fill="rgb(59,59,59)" d="M84.7 24.4h5.5v5.5h-5.5zM154.7 34.4h5.5v5.5h-5.5zM124.7 44.4h5.5v5.5h-5.5zM104.7 114.4h5.5v5.5h-5.5zM144.7 114.4h5.5v5.5h-5.5zM184.7 159.4h5.5v5.5h-5.5zM154.7 189.4h5.5v5.5h-5.5zM269.7 204.4h5.5v5.5h-5.5zM229.7 209.4h5.5v5.5h-5.5zM154.7 229.4h5.5v5.5h-5.5zM179.7 229.4h5.5v5.5h-5.5zM354.7 234.4h10.5v5.5h-10.5zM189.7 239.4h5.5v5.5h-5.5zM334.7 239.4h5.5v5.5h-5.5zM349.7 239.4h15.5v5.5h-15.5zM149.7 244.4h5.5v5.5h-5.5zM334.7 244.4h5.5v5.5h-5.5zM259.7 259.4h5.5v5.5h-5.5zM124.7 264.4h5.5v5.5h-5.5zM414.7 269.4h5.5v5.5h-5.5zM104.7 279.4h5.5v5.5h-5.5zM314.7 284.4h5.5v5.5h-5.5zM189.7 304.4h5.5v5.5h-5.5z"/><path fill="rgb(60,60,60)" d="M84.7 19.4h5.5v5.5h-5.5zM124.7 64.4h5.5v5.5h-5.5zM89.7 89.4h5.5v5.5h-5.5zM94.7 119.4h5.5v5.5h-5.5zM169.7 164.4h5.5v5.5h-5.5zM89.7 189.4h5.5v5.5h-5.5zM174.7 189.4h5.5v5.5h-5.5zM89.7 194.4h5.5v5.5h-5.5zM259.7 224.4h5.5v5.5h-5.5zM404.7 224.4h5.5v5.5h-5.5zM219.7 229.4h5.5v5.5h-5.5zM219.7 234.4h5.5v5.5h-5.5zM339.7 234.4h5.5v5.5h-5.5zM349.7 234.4h5.5v5.5h-5.5zM364.7 234.4h10.5v5.5h-10.5zM339.7 239.4h10.5v5.5h-10.5zM364.7 239.4h10.5v5.5h-10.5zM264.7 249.4h5.5v5.5h-5.5zM109.7 269.4h5.5v5.5h-5.5zM94.7 274.4h10.5v5.5h-10.5zM289.7 294.4h5.5v5.5h-5.5zM194.7 304.4h5.5v5.5h-5.5z"/><path fill="rgb(61,61,61)" d="M54.7 -0.6h5.5v5.5h-5.5zM89.7 34.4h5.5v5.5h-5.5zM144.7 44.4h5.5v5.5h-5.5zM94.7 64.4h5.5v5.5h-5.5zM124.7 114.4h5.5v5.5h-5.5zM154.7 169.4h5.5v5.5h-5.5zM184.7 169.4h5.5v5.5h-5.5zM174.7 184.4h5.5v5.5h-5.5zM159.7 189.4h5.5v5.5h-5.5zM179.7 194.4h5.5v5.5h-5.5zM259.7 194.4h5.5v5.5h-5.5zM234.7 199.4h5.5v5.5h-5.5zM269.7 199.4h5.5v5.5h-5.5zM194.7 204.4h5.5v5.5h-5.5zM234.7 214.4h10.5v5.5h-10.5zM259.7 214.4h5.5v5.5h-5.5zM424.7 219.4h10.5v5.5h-10.5zM414.7 224.4h5.5v5.5h-5.5zM189.7 234.4h5.5v5.5h-5.5zM344.7 234.4h5.5v5.5h-5.5zM149.7 239.4h5.5v5.5h-5.5zM134.7 249.4h5.5v5.5h-5.5zM149.7 249.4h25.5v5.5h-25.5zM159.7 254.4h5.5v5.5h-5.5zM129.7 264.4h5.5v5.5h-5.5zM104.7 269.4h5.5v5.5h-5.5zM99.7 279.4h5.5v5.5h-5.5zM349.7 289.4h5.5v5.5h-5.5zM219.7 314.4h5.5v5.5h-5.5z"/><path fill="rgb(62,62,62)" d="M54.7 -5.6h5.5v5.5h-5.5zM74.7 4.4h5.5v5.5h-5.5zM134.7 34.4h5.5v5.5h-5.5zM89.7 44.4h10.5v5.5h-10.5zM129.7 54.4h5.5v5.5h-5.5zM99.7 64.4h15.5v5.5h-15.5zM99.7 119.4h5.5v5.5h-5.5zM144.7 124.4h5.5v5.5h-5.5zM129.7 144.4h5.5v5.5h-5.5zM129.7 149.4h5.5v5.5h-5.5zM169.7 189.4h5.5v5.5h-5.5zM84.7 194.4h5.5v5.5h-5.5zM244.7 209.4h5.5v5.5h-5.5zM229.7 214.4h5.5v5.5h-5.5zM404.7 219.4h5.5v5.5h-5.5zM434.7 219.4h15.5v5.5h-15.5zM259.7 239.4h5.5v5.5h-5.5zM264.7 244.4h5.5v5.5h-5.5zM139.7 249.4h10.5v5.5h-10.5zM124.7 259.4h5.5v5.5h-5.5zM119.7 264.4h5.5v5.5h-5.5zM114.7 274.4h5.5v5.5h-5.5zM94.7 279.4h5.5v5.5h-5.5zM109.7 279.4h5.5v5.5h-5.5zM259.7 279.4h5.5v5.5h-5.5zM394.7 279.4h5.5v5.5h-5.5zM84.7 289.4h5.5v5.5h-5.5zM244.7 299.4h5.5v5.5h-5.5z"/><path fill="rgb(63,63,63)" d="M54.7 -10.6h5.5v5.5h-5.5zM69.7 -5.6h5.5v5.5h-5.5zM89.7 9.4h5.5v5.5h-5.5zM84.7 39.4h5.5v5.5h-5.5zM159.7 44.4h5.5v5.5h-5.5zM129.7 79.4h5.5v5.5h-5.5zM184.7 164.4h5.5v5.5h-5.5zM164.7 169.4h5.5v5.5h-5.5zM149.7 189.4h5.5v5.5h-5.5zM164.7 189.4h5.5v5.5h-5.5zM174.7 194.4h5.5v5.5h-5.5zM249.7 194.4h5.5v5.5h-5.5zM199.7 204.4h5.5v5.5h-5.5zM224.7 209.4h5.5v5.5h-5.5zM409.7 214.4h5.5v5.5h-5.5zM424.7 214.4h25.5v5.5h-25.5zM409.7 224.4h5.5v5.5h-5.5zM214.7 229.4h5.5v5.5h-5.5zM214.7 234.4h5.5v5.5h-5.5zM149.7 259.4h5.5v5.5h-5.5zM134.7 264.4h5.5v5.5h-5.5zM254.7 269.4h5.5v5.5h-5.5zM304.7 284.4h5.5v5.5h-5.5zM299.7 289.4h5.5v5.5h-5.5zM159.7 309.4h5.5v5.5h-5.5z"/><path fill="rgb(64,64,64)" d="M54.7 -20.6h5.5v5.5h-5.5zM69.7 -20.6h5.5v5.5h-5.5zM54.7 -15.6h5.5v5.5h-5.5zM69.7 -15.6h5.5v5.5h-5.5zM69.7 -10.6h5.5v5.5h-5.5zM69.7 -0.6h5.5v5.5h-5.5zM49.7 4.4h5.5v5.5h-5.5zM164.7 39.4h5.5v5.5h-5.5zM89.7 64.4h5.5v5.5h-5.5zM149.7 134.4h5.5v5.5h-5.5zM179.7 174.4h5.5v5.5h-5.5zM169.7 194.4h5.5v5.5h-5.5zM254.7 194.4h5.5v5.5h-5.5zM259.7 209.4h5.5v5.5h-5.5zM244.7 214.4h5.5v5.5h-5.5zM419.7 219.4h5.5v5.5h-5.5zM254.7 264.4h5.5v5.5h-5.5zM99.7 269.4h5.5v5.5h-5.5zM84.7 294.4h5.5v5.5h-5.5zM209.7 299.4h5.5v5.5h-5.5zM279.7 299.4h5.5v5.5h-5.5zM244.7 314.4h5.5v5.5h-5.5z"/><path fill="rgb(65,65,65)" d="M79.7 29.4h5.5v5.5h-5.5zM104.7 34.4h20.5v5.5h-20.5zM144.7 39.4h5.5v5.5h-5.5zM149.7 44.4h5.5v5.5h-5.5zM114.7 64.4h5.5v5.5h-5.5zM89.7 84.4h5.5v5.5h-5.5zM144.7 159.4h5.5v5.5h-5.5zM84.7 189.4h5.5v5.5h-5.5zM224.7 214.4h5.5v5.5h-5.5zM419.7 214.4h5.5v5.5h-5.5zM259.7 219.4h5.5v5.5h-5.5zM194.7 234.4h5.5v5.5h-5.5zM189.7 244.4h5.5v5.5h-5.5zM174.7 249.4h5.5v5.5h-5.5zM259.7 284.4h5.5v5.5h-5.5zM259.7 289.4h5.5v5.5h-5.5zM354.7 289.4h5.5v5.5h-5.5zM84.7 299.4h5.5v5.5h-5.5z"/><path fill="rgb(66,66,66)" d="M44.7 4.4h5.5v5.5h-5.5zM99.7 34.4h5.5v5.5h-5.5zM139.7 39.4h5.5v5.5h-5.5zM149.7 39.4h5.5v5.5h-5.5zM154.7 44.4h5.5v5.5h-5.5zM89.7 99.4h5.5v5.5h-5.5zM89.7 109.4h5.5v5.5h-5.5zM89.7 114.4h5.5v5.5h-5.5zM94.7 189.4h5.5v5.5h-5.5zM229.7 204.4h5.5v5.5h-5.5zM249.7 209.4h5.5v5.5h-5.5zM414.7 214.4h5.5v5.5h-5.5zM184.7 229.4h5.5v5.5h-5.5zM194.7 239.4h5.5v5.5h-5.5zM244.7 239.4h5.5v5.5h-5.5zM144.7 244.4h5.5v5.5h-5.5zM129.7 249.4h5.5v5.5h-5.5zM164.7 254.4h5.5v5.5h-5.5zM139.7 264.4h5.5v5.5h-5.5zM84.7 269.4h10.5v5.5h-10.5zM254.7 294.4h5.5v5.5h-5.5zM79.7 299.4h5.5v5.5h-5.5zM204.7 299.4h5.5v5.5h-5.5zM214.7 299.4h5.5v5.5h-5.5zM269.7 304.4h5.5v5.5h-5.5zM259.7 309.4h5.5v5.5h-5.5zM214.7 314.4h5.5v5.5h-5.5z"/><path fill="rgb(67,67,67)" d="M79.7 19.4h5.5v5.5h-5.5zM79.7 34.4h5.5v5.5h-5.5zM94.7 34.4h5.5v5.5h-5.5zM124.7 34.4h10.5v5.5h-10.5zM124.7 49.4h5.5v5.5h-5.5zM119.7 64.4h5.5v5.5h-5.5zM74.7 69.4h5.5v5.5h-5.5zM129.7 74.4h5.5v5.5h-5.5zM89.7 104.4h5.5v5.5h-5.5zM154.7 184.4h5.5v5.5h-5.5zM94.7 194.4h5.5v5.5h-5.5zM164.7 194.4h5.5v5.5h-5.5zM264.7 199.4h5.5v5.5h-5.5zM204.7 204.4h5.5v5.5h-5.5zM234.7 204.4h5.5v5.5h-5.5zM264.7 204.4h5.5v5.5h-5.5zM219.7 209.4h5.5v5.5h-5.5zM254.7 214.4h5.5v5.5h-5.5zM409.7 219.4h5.5v5.5h-5.5zM84.7 229.4h5.5v5.5h-5.5zM209.7 229.4h5.5v5.5h-5.5zM84.7 234.4h5.5v5.5h-5.5zM209.7 234.4h5.5v5.5h-5.5zM239.7 239.4h5.5v5.5h-5.5zM254.7 239.4h5.5v5.5h-5.5zM259.7 254.4h5.5v5.5h-5.5zM294.7 294.4h5.5v5.5h-5.5zM164.7 299.4h10.5v5.5h-10.5z"/><path fill="rgb(68,68,68)" d="M84.7 14.4h5.5v5.5h-5.5zM154.7 39.4h10.5v5.5h-10.5zM79.7 44.4h5.5v5.5h-5.5zM79.7 69.4h5.5v5.5h-5.5zM84.7 94.4h5.5v5.5h-5.5zM129.7 114.4h5.5v5.5h-5.5zM149.7 164.4h5.5v5.5h-5.5zM179.7 164.4h5.5v5.5h-5.5zM159.7 174.4h5.5v5.5h-5.5zM154.7 179.4h5.5v5.5h-5.5zM149.7 194.4h5.5v5.5h-5.5zM184.7 199.4h5.5v5.5h-5.5zM189.7 204.4h5.5v5.5h-5.5zM224.7 204.4h5.5v5.5h-5.5zM254.7 209.4h5.5v5.5h-5.5zM249.7 214.4h5.5v5.5h-5.5zM414.7 219.4h5.5v5.5h-5.5zM84.7 224.4h5.5v5.5h-5.5zM174.7 224.4h10.5v5.5h-10.5zM149.7 234.4h5.5v5.5h-5.5zM249.7 239.4h5.5v5.5h-5.5zM254.7 274.4h5.5v5.5h-5.5zM384.7 284.4h5.5v5.5h-5.5zM359.7 289.4h5.5v5.5h-5.5zM79.7 294.4h5.5v5.5h-5.5zM174.7 299.4h10.5v5.5h-10.5zM239.7 299.4h5.5v5.5h-5.5z"/><path fill="rgb(69,69,69)" d="M39.7 -5.6h5.5v5.5h-5.5zM39.7 -0.6h5.5v5.5h-5.5zM109.7 49.4h5.5v5.5h-5.5zM84.7 69.4h15.5v5.5h-15.5zM104.7 69.4h10.5v5.5h-10.5zM144.7 119.4h5.5v5.5h-5.5zM134.7 124.4h10.5v5.5h-10.5zM129.7 154.4h5.5v5.5h-5.5zM174.7 164.4h5.5v5.5h-5.5zM169.7 184.4h5.5v5.5h-5.5zM154.7 194.4h10.5v5.5h-10.5zM219.7 214.4h5.5v5.5h-5.5zM149.7 229.4h5.5v5.5h-5.5zM199.7 234.4h5.5v5.5h-5.5zM84.7 239.4h5.5v5.5h-5.5zM254.7 259.4h5.5v5.5h-5.5zM94.7 269.4h5.5v5.5h-5.5zM104.7 284.4h5.5v5.5h-5.5zM309.7 284.4h5.5v5.5h-5.5zM159.7 299.4h5.5v5.5h-5.5zM209.7 314.4h5.5v5.5h-5.5z"/><path fill="rgb(70,70,70)" d="M39.7 -10.6h5.5v5.5h-5.5zM89.7 39.4h5.5v5.5h-5.5zM134.7 39.4h5.5v5.5h-5.5zM99.7 69.4h5.5v5.5h-5.5zM104.7 119.4h5.5v5.5h-5.5zM154.7 174.4h5.5v5.5h-5.5zM119.7 189.4h5.5v5.5h-5.5zM209.7 204.4h5.5v5.5h-5.5zM219.7 204.4h5.5v5.5h-5.5zM214.7 209.4h5.5v5.5h-5.5zM169.7 224.4h5.5v5.5h-5.5zM204.7 229.4h5.5v5.5h-5.5zM204.7 234.4h5.5v5.5h-5.5zM234.7 239.4h5.5v5.5h-5.5zM124.7 269.4h5.5v5.5h-5.5zM409.7 274.4h5.5v5.5h-5.5zM79.7 289.4h5.5v5.5h-5.5zM314.7 289.4h5.5v5.5h-5.5zM219.7 299.4h5.5v5.5h-5.5z"/><path fill="rgb(71,71,71)" d="M39.7 -20.6h5.5v5.5h-5.5zM39.7 -15.6h5.5v5.5h-5.5zM84.7 9.4h5.5v5.5h-5.5zM79.7 24.4h5.5v5.5h-5.5zM114.7 49.4h5.5v5.5h-5.5zM124.7 69.4h5.5v5.5h-5.5zM139.7 114.4h5.5v5.5h-5.5zM134.7 159.4h10.5v5.5h-10.5zM179.7 169.4h5.5v5.5h-5.5zM174.7 179.4h5.5v5.5h-5.5zM99.7 189.4h5.5v5.5h-5.5zM114.7 189.4h5.5v5.5h-5.5zM239.7 199.4h5.5v5.5h-5.5zM214.7 204.4h5.5v5.5h-5.5zM139.7 209.4h5.5v5.5h-5.5zM224.7 224.4h10.5v5.5h-10.5zM114.7 264.4h5.5v5.5h-5.5zM249.7 264.4h5.5v5.5h-5.5zM249.7 269.4h5.5v5.5h-5.5zM304.7 289.4h5.5v5.5h-5.5zM184.7 299.4h5.5v5.5h-5.5zM199.7 299.4h5.5v5.5h-5.5zM284.7 299.4h5.5v5.5h-5.5zM79.7 304.4h5.5v5.5h-5.5z"/><path fill="rgb(72,72,72)" d="M79.7 14.4h5.5v5.5h-5.5zM74.7 19.4h5.5v5.5h-5.5zM79.7 39.4h5.5v5.5h-5.5zM84.7 64.4h5.5v5.5h-5.5zM84.7 89.4h5.5v5.5h-5.5zM99.7 194.4h5.5v5.5h-5.5zM114.7 194.4h10.5v5.5h-10.5zM144.7 194.4h5.5v5.5h-5.5zM239.7 204.4h5.5v5.5h-5.5zM134.7 209.4h5.5v5.5h-5.5zM209.7 209.4h5.5v5.5h-5.5zM139.7 214.4h5.5v5.5h-5.5zM84.7 219.4h5.5v5.5h-5.5zM179.7 249.4h5.5v5.5h-5.5zM169.7 254.4h5.5v5.5h-5.5zM399.7 279.4h5.5v5.5h-5.5zM79.7 284.4h5.5v5.5h-5.5zM364.7 289.4h5.5v5.5h-5.5zM234.7 299.4h5.5v5.5h-5.5zM204.7 314.4h5.5v5.5h-5.5zM249.7 314.4h5.5v5.5h-5.5z"/><path fill="rgb(73,73,73)" d="M74.7 14.4h5.5v5.5h-5.5zM104.7 49.4h5.5v5.5h-5.5zM119.7 49.4h5.5v5.5h-5.5zM69.7 69.4h5.5v5.5h-5.5zM134.7 114.4h5.5v5.5h-5.5zM159.7 179.4h5.5v5.5h-5.5zM149.7 184.4h5.5v5.5h-5.5zM159.7 184.4h5.5v5.5h-5.5zM134.7 204.4h10.5v5.5h-10.5zM134.7 214.4h5.5v5.5h-5.5zM214.7 214.4h5.5v5.5h-5.5zM184.7 224.4h5.5v5.5h-5.5zM234.7 224.4h5.5v5.5h-5.5zM124.7 254.4h5.5v5.5h-5.5zM419.7 269.4h5.5v5.5h-5.5zM119.7 274.4h5.5v5.5h-5.5zM114.7 279.4h5.5v5.5h-5.5zM324.7 294.4h10.5v5.5h-10.5zM224.7 299.4h5.5v5.5h-5.5zM149.7 304.4h5.5v5.5h-5.5z"/><path fill="rgb(74,74,74)" d="M79.7 9.4h5.5v5.5h-5.5zM129.7 39.4h5.5v5.5h-5.5zM84.7 49.4h5.5v5.5h-5.5zM114.7 69.4h5.5v5.5h-5.5zM109.7 119.4h5.5v5.5h-5.5zM144.7 139.4h5.5v5.5h-5.5zM94.7 184.4h5.5v5.5h-5.5zM104.7 189.4h10.5v5.5h-10.5zM104.7 194.4h5.5v5.5h-5.5zM259.7 199.4h5.5v5.5h-5.5zM199.7 209.4h10.5v5.5h-10.5zM164.7 224.4h5.5v5.5h-5.5zM219.7 224.4h5.5v5.5h-5.5zM254.7 224.4h5.5v5.5h-5.5zM189.7 229.4h5.5v5.5h-5.5zM199.7 229.4h5.5v5.5h-5.5zM194.7 244.4h5.5v5.5h-5.5zM259.7 244.4h5.5v5.5h-5.5zM259.7 249.4h5.5v5.5h-5.5zM154.7 259.4h5.5v5.5h-5.5zM144.7 264.4h5.5v5.5h-5.5zM244.7 264.4h5.5v5.5h-5.5zM89.7 284.4h5.5v5.5h-5.5zM249.7 294.4h5.5v5.5h-5.5zM299.7 294.4h5.5v5.5h-5.5zM229.7 299.4h5.5v5.5h-5.5zM84.7 304.4h5.5v5.5h-5.5zM274.7 304.4h5.5v5.5h-5.5zM154.7 309.4h5.5v5.5h-5.5zM199.7 314.4h5.5v5.5h-5.5z"/><path fill="rgb(75,75,75)" d="M59.7 -5.6h10.5v5.5h-10.5zM59.7 -0.6h5.5v5.5h-5.5zM104.7 39.4h5.5v5.5h-5.5zM124.7 79.4h5.5v5.5h-5.5zM99.7 124.4h5.5v5.5h-5.5zM134.7 139.4h5.5v5.5h-5.5zM169.7 169.4h5.5v5.5h-5.5zM164.7 174.4h5.5v5.5h-5.5zM164.7 184.4h5.5v5.5h-5.5zM144.7 189.4h5.5v5.5h-5.5zM109.7 194.4h5.5v5.5h-5.5zM259.7 204.4h5.5v5.5h-5.5zM194.7 209.4h5.5v5.5h-5.5zM224.7 219.4h10.5v5.5h-10.5zM89.7 229.4h5.5v5.5h-5.5zM89.7 234.4h5.5v5.5h-5.5zM199.7 239.4h5.5v5.5h-5.5zM229.7 239.4h5.5v5.5h-5.5zM139.7 244.4h5.5v5.5h-5.5zM254.7 279.4h5.5v5.5h-5.5zM99.7 284.4h5.5v5.5h-5.5zM109.7 284.4h5.5v5.5h-5.5zM369.7 289.4h5.5v5.5h-5.5zM154.7 299.4h5.5v5.5h-5.5zM189.7 299.4h10.5v5.5h-10.5z"/><path fill="rgb(76,76,76)" d="M59.7 -10.6h10.5v5.5h-10.5zM64.7 -0.6h5.5v5.5h-5.5zM109.7 39.4h5.5v5.5h-5.5zM79.7 49.4h5.5v5.5h-5.5zM174.7 174.4h5.5v5.5h-5.5zM89.7 184.4h5.5v5.5h-5.5zM129.7 209.4h5.5v5.5h-5.5zM129.7 214.4h5.5v5.5h-5.5zM234.7 219.4h5.5v5.5h-5.5zM194.7 229.4h5.5v5.5h-5.5zM144.7 239.4h5.5v5.5h-5.5zM124.7 249.4h5.5v5.5h-5.5zM249.7 259.4h5.5v5.5h-5.5zM309.7 289.4h5.5v5.5h-5.5zM319.7 294.4h5.5v5.5h-5.5zM334.7 294.4h5.5v5.5h-5.5zM264.7 309.4h5.5v5.5h-5.5zM184.7 314.4h15.5v5.5h-15.5z"/><path fill="rgb(77,77,77)" d="M59.7 -20.6h10.5v5.5h-10.5zM59.7 -15.6h10.5v5.5h-10.5zM99.7 39.4h5.5v5.5h-5.5zM114.7 39.4h5.5v5.5h-5.5zM124.7 39.4h5.5v5.5h-5.5zM59.7 44.4h5.5v5.5h-5.5zM104.7 124.4h5.5v5.5h-5.5zM129.7 124.4h5.5v5.5h-5.5zM129.7 204.4h5.5v5.5h-5.5zM209.7 214.4h5.5v5.5h-5.5zM159.7 224.4h5.5v5.5h-5.5zM239.7 224.4h5.5v5.5h-5.5zM239.7 264.4h5.5v5.5h-5.5zM244.7 269.4h5.5v5.5h-5.5zM434.7 269.4h10.5v5.5h-10.5zM254.7 289.4h5.5v5.5h-5.5zM179.7 314.4h5.5v5.5h-5.5z"/><path fill="rgb(78,78,78)" d="M54.7 4.4h5.5v5.5h-5.5zM74.7 9.4h5.5v5.5h-5.5zM94.7 39.4h5.5v5.5h-5.5zM119.7 39.4h5.5v5.5h-5.5zM59.7 49.4h5.5v5.5h-5.5zM99.7 79.4h15.5v5.5h-15.5zM79.7 94.4h5.5v5.5h-5.5zM144.7 129.4h5.5v5.5h-5.5zM149.7 179.4h5.5v5.5h-5.5zM99.7 184.4h5.5v5.5h-5.5zM119.7 184.4h5.5v5.5h-5.5zM244.7 204.4h5.5v5.5h-5.5zM219.7 219.4h5.5v5.5h-5.5zM214.7 224.4h5.5v5.5h-5.5zM224.7 239.4h5.5v5.5h-5.5zM84.7 244.4h5.5v5.5h-5.5zM184.7 249.4h5.5v5.5h-5.5zM254.7 254.4h5.5v5.5h-5.5zM119.7 259.4h5.5v5.5h-5.5zM444.7 269.4h5.5v5.5h-5.5zM249.7 274.4h5.5v5.5h-5.5zM389.7 284.4h5.5v5.5h-5.5zM289.7 299.4h5.5v5.5h-5.5z"/><path fill="rgb(79,79,79)" d="M99.7 49.4h5.5v5.5h-5.5zM79.7 89.4h5.5v5.5h-5.5zM114.7 119.4h5.5v5.5h-5.5zM139.7 139.4h5.5v5.5h-5.5zM174.7 169.4h5.5v5.5h-5.5zM114.7 184.4h5.5v5.5h-5.5zM244.7 199.4h5.5v5.5h-5.5zM124.7 214.4h5.5v5.5h-5.5zM239.7 219.4h5.5v5.5h-5.5zM254.7 219.4h5.5v5.5h-5.5zM239.7 259.4h10.5v5.5h-10.5zM109.7 264.4h5.5v5.5h-5.5zM304.7 294.4h5.5v5.5h-5.5z"/><path fill="rgb(80,80,80)" d="M69.7 4.4h5.5v5.5h-5.5zM119.7 69.4h5.5v5.5h-5.5zM114.7 79.4h5.5v5.5h-5.5zM169.7 174.4h5.5v5.5h-5.5zM124.7 194.4h5.5v5.5h-5.5zM139.7 199.4h5.5v5.5h-5.5zM204.7 214.4h5.5v5.5h-5.5zM104.7 224.4h10.5v5.5h-10.5zM204.7 224.4h10.5v5.5h-10.5zM104.7 239.4h5.5v5.5h-5.5zM219.7 239.4h5.5v5.5h-5.5zM174.7 254.4h5.5v5.5h-5.5zM234.7 264.4h5.5v5.5h-5.5zM199.7 269.4h5.5v5.5h-5.5zM429.7 269.4h5.5v5.5h-5.5zM254.7 284.4h5.5v5.5h-5.5zM374.7 289.4h5.5v5.5h-5.5zM314.7 294.4h5.5v5.5h-5.5zM339.7 294.4h5.5v5.5h-5.5zM174.7 314.4h5.5v5.5h-5.5zM254.7 314.4h5.5v5.5h-5.5z"/><path fill="rgb(81,81,81)" d="M54.7 44.4h5.5v5.5h-5.5zM89.7 49.4h5.5v5.5h-5.5zM94.7 79.4h5.5v5.5h-5.5zM119.7 79.4h5.5v5.5h-5.5zM74.7 89.4h5.5v5.5h-5.5zM139.7 119.4h5.5v5.5h-5.5zM94.7 124.4h5.5v5.5h-5.5zM164.7 179.4h10.5v5.5h-10.5zM124.7 189.4h5.5v5.5h-5.5zM254.7 199.4h5.5v5.5h-5.5zM254.7 204.4h5.5v5.5h-5.5zM189.7 209.4h5.5v5.5h-5.5zM144.7 214.4h5.5v5.5h-5.5zM79.7 219.4h5.5v5.5h-5.5zM124.7 219.4h5.5v5.5h-5.5zM139.7 219.4h5.5v5.5h-5.5zM89.7 224.4h5.5v5.5h-5.5zM114.7 224.4h10.5v5.5h-10.5zM154.7 224.4h5.5v5.5h-5.5zM244.7 224.4h5.5v5.5h-5.5zM104.7 229.4h20.5v5.5h-20.5zM104.7 234.4h20.5v5.5h-20.5zM89.7 239.4h5.5v5.5h-5.5zM109.7 239.4h15.5v5.5h-15.5zM204.7 239.4h5.5v5.5h-5.5zM214.7 239.4h5.5v5.5h-5.5zM234.7 259.4h5.5v5.5h-5.5zM199.7 264.4h10.5v5.5h-10.5zM204.7 269.4h5.5v5.5h-5.5zM239.7 269.4h5.5v5.5h-5.5zM424.7 269.4h5.5v5.5h-5.5zM79.7 279.4h5.5v5.5h-5.5zM244.7 294.4h5.5v5.5h-5.5zM279.7 304.4h5.5v5.5h-5.5z"/><path fill="rgb(82,82,82)" d="M124.7 59.4h5.5v5.5h-5.5zM89.7 119.4h5.5v5.5h-5.5zM129.7 139.4h5.5v5.5h-5.5zM104.7 184.4h10.5v5.5h-10.5zM139.7 194.4h5.5v5.5h-5.5zM94.7 199.4h5.5v5.5h-5.5zM124.7 199.4h5.5v5.5h-5.5zM134.7 199.4h5.5v5.5h-5.5zM144.7 204.4h5.5v5.5h-5.5zM249.7 204.4h5.5v5.5h-5.5zM144.7 209.4h5.5v5.5h-5.5zM199.7 214.4h5.5v5.5h-5.5zM134.7 219.4h5.5v5.5h-5.5zM214.7 219.4h5.5v5.5h-5.5zM189.7 224.4h5.5v5.5h-5.5zM199.7 224.4h5.5v5.5h-5.5zM249.7 224.4h5.5v5.5h-5.5zM209.7 239.4h5.5v5.5h-5.5zM124.7 244.4h5.5v5.5h-5.5zM134.7 244.4h5.5v5.5h-5.5zM254.7 244.4h5.5v5.5h-5.5zM189.7 249.4h5.5v5.5h-5.5zM309.7 294.4h5.5v5.5h-5.5z"/><path fill="rgb(83,83,83)" d="M69.7 19.4h5.5v5.5h-5.5zM74.7 24.4h5.5v5.5h-5.5zM69.7 89.4h5.5v5.5h-5.5zM134.7 119.4h5.5v5.5h-5.5zM134.7 129.4h5.5v5.5h-5.5zM129.7 159.4h5.5v5.5h-5.5zM89.7 199.4h5.5v5.5h-5.5zM119.7 199.4h5.5v5.5h-5.5zM129.7 199.4h5.5v5.5h-5.5zM179.7 199.4h5.5v5.5h-5.5zM124.7 209.4h5.5v5.5h-5.5zM119.7 219.4h5.5v5.5h-5.5zM129.7 219.4h5.5v5.5h-5.5zM179.7 219.4h5.5v5.5h-5.5zM244.7 219.4h5.5v5.5h-5.5zM99.7 229.4h5.5v5.5h-5.5zM99.7 234.4h5.5v5.5h-5.5zM129.7 244.4h5.5v5.5h-5.5zM199.7 244.4h5.5v5.5h-5.5zM229.7 264.4h5.5v5.5h-5.5zM414.7 274.4h5.5v5.5h-5.5zM94.7 284.4h5.5v5.5h-5.5z"/><path fill="rgb(84,84,84)" d="M54.7 49.4h5.5v5.5h-5.5zM64.7 49.4h5.5v5.5h-5.5zM94.7 49.4h5.5v5.5h-5.5zM84.7 84.4h5.5v5.5h-5.5zM74.7 94.4h5.5v5.5h-5.5zM149.7 169.4h5.5v5.5h-5.5zM144.7 199.4h5.5v5.5h-5.5zM249.7 199.4h5.5v5.5h-5.5zM124.7 204.4h5.5v5.5h-5.5zM184.7 204.4h5.5v5.5h-5.5zM84.7 214.4h5.5v5.5h-5.5zM194.7 214.4h5.5v5.5h-5.5zM184.7 219.4h5.5v5.5h-5.5zM209.7 219.4h5.5v5.5h-5.5zM79.7 224.4h5.5v5.5h-5.5zM149.7 224.4h5.5v5.5h-5.5zM94.7 229.4h5.5v5.5h-5.5zM144.7 229.4h5.5v5.5h-5.5zM94.7 234.4h5.5v5.5h-5.5zM144.7 234.4h5.5v5.5h-5.5zM119.7 244.4h5.5v5.5h-5.5zM254.7 249.4h5.5v5.5h-5.5zM159.7 259.4h5.5v5.5h-5.5zM199.7 259.4h5.5v5.5h-5.5zM79.7 274.4h5.5v5.5h-5.5zM199.7 274.4h5.5v5.5h-5.5zM404.7 279.4h5.5v5.5h-5.5zM204.7 294.4h5.5v5.5h-5.5zM344.7 294.4h5.5v5.5h-5.5zM269.7 309.4h5.5v5.5h-5.5z"/><path fill="rgb(85,85,85)" d="M79.7 64.4h5.5v5.5h-5.5zM129.7 119.4h5.5v5.5h-5.5zM109.7 124.4h5.5v5.5h-5.5zM124.7 144.4h5.5v5.5h-5.5zM144.7 219.4h5.5v5.5h-5.5zM204.7 219.4h5.5v5.5h-5.5zM249.7 219.4h5.5v5.5h-5.5zM99.7 224.4h5.5v5.5h-5.5zM124.7 224.4h5.5v5.5h-5.5zM194.7 224.4h5.5v5.5h-5.5zM99.7 239.4h5.5v5.5h-5.5zM239.7 244.4h15.5v5.5h-15.5zM194.7 249.4h5.5v5.5h-5.5zM249.7 254.4h5.5v5.5h-5.5zM204.7 259.4h5.5v5.5h-5.5zM104.7 264.4h5.5v5.5h-5.5zM194.7 264.4h5.5v5.5h-5.5zM209.7 264.4h5.5v5.5h-5.5zM194.7 269.4h5.5v5.5h-5.5zM209.7 269.4h5.5v5.5h-5.5zM234.7 269.4h5.5v5.5h-5.5zM244.7 274.4h5.5v5.5h-5.5zM294.7 299.4h5.5v5.5h-5.5z"/><path fill="rgb(86,86,86)" d="M69.7 14.4h5.5v5.5h-5.5zM64.7 44.4h5.5v5.5h-5.5zM64.7 69.4h5.5v5.5h-5.5zM69.7 94.4h5.5v5.5h-5.5zM139.7 129.4h5.5v5.5h-5.5zM149.7 174.4h5.5v5.5h-5.5zM189.7 214.4h5.5v5.5h-5.5zM79.7 229.4h5.5v5.5h-5.5zM124.7 229.4h5.5v5.5h-5.5zM79.7 234.4h5.5v5.5h-5.5zM124.7 234.4h5.5v5.5h-5.5zM79.7 239.4h5.5v5.5h-5.5zM124.7 239.4h5.5v5.5h-5.5zM229.7 259.4h5.5v5.5h-5.5zM224.7 264.4h5.5v5.5h-5.5zM224.7 269.4h10.5v5.5h-10.5zM194.7 274.4h5.5v5.5h-5.5zM204.7 274.4h5.5v5.5h-5.5zM249.7 279.4h5.5v5.5h-5.5zM199.7 294.4h5.5v5.5h-5.5zM209.7 294.4h5.5v5.5h-5.5zM149.7 309.4h5.5v5.5h-5.5zM169.7 314.4h5.5v5.5h-5.5z"/><path fill="rgb(87,87,87)" d="M39.7 4.4h5.5v5.5h-5.5zM74.7 29.4h5.5v5.5h-5.5zM119.7 119.4h5.5v5.5h-5.5zM144.7 134.4h5.5v5.5h-5.5zM124.7 184.4h5.5v5.5h-5.5zM99.7 199.4h5.5v5.5h-5.5zM114.7 199.4h5.5v5.5h-5.5zM114.7 219.4h5.5v5.5h-5.5zM174.7 219.4h5.5v5.5h-5.5zM199.7 219.4h5.5v5.5h-5.5zM84.7 249.4h5.5v5.5h-5.5zM234.7 254.4h10.5v5.5h-10.5zM194.7 259.4h5.5v5.5h-5.5zM219.7 269.4h5.5v5.5h-5.5zM249.7 289.4h5.5v5.5h-5.5zM239.7 294.4h5.5v5.5h-5.5zM349.7 294.4h5.5v5.5h-5.5z"/><path fill="rgb(88,88,88)" d="M74.7 44.4h5.5v5.5h-5.5zM74.7 49.4h5.5v5.5h-5.5zM74.7 74.4h5.5v5.5h-5.5zM69.7 99.4h5.5v5.5h-5.5zM69.7 104.4h5.5v5.5h-5.5zM129.7 129.4h5.5v5.5h-5.5zM124.7 149.4h5.5v5.5h-5.5zM144.7 224.4h5.5v5.5h-5.5zM104.7 244.4h5.5v5.5h-5.5zM234.7 244.4h5.5v5.5h-5.5zM199.7 249.4h5.5v5.5h-5.5zM179.7 254.4h5.5v5.5h-5.5zM199.7 254.4h5.5v5.5h-5.5zM244.7 254.4h5.5v5.5h-5.5zM149.7 264.4h5.5v5.5h-5.5zM214.7 264.4h10.5v5.5h-10.5zM214.7 269.4h5.5v5.5h-5.5zM394.7 284.4h5.5v5.5h-5.5zM379.7 289.4h5.5v5.5h-5.5zM149.7 299.4h5.5v5.5h-5.5zM144.7 304.4h5.5v5.5h-5.5zM284.7 304.4h5.5v5.5h-5.5z"/><path fill="rgb(89,89,89)" d="M124.7 54.4h5.5v5.5h-5.5zM69.7 74.4h5.5v5.5h-5.5zM124.7 119.4h5.5v5.5h-5.5zM174.7 199.4h5.5v5.5h-5.5zM119.7 214.4h5.5v5.5h-5.5zM184.7 214.4h5.5v5.5h-5.5zM189.7 219.4h5.5v5.5h-5.5zM109.7 244.4h10.5v5.5h-10.5zM194.7 254.4h5.5v5.5h-5.5zM204.7 254.4h5.5v5.5h-5.5zM209.7 259.4h5.5v5.5h-5.5zM239.7 274.4h5.5v5.5h-5.5zM214.7 294.4h5.5v5.5h-5.5zM299.7 299.4h5.5v5.5h-5.5zM259.7 314.4h5.5v5.5h-5.5zM229.7 319.4h5.5v5.5h-5.5z"/><path fill="rgb(90,90,90)" d="M124.7 74.4h5.5v5.5h-5.5zM74.7 84.4h5.5v5.5h-5.5zM64.7 94.4h5.5v5.5h-5.5zM69.7 109.4h5.5v5.5h-5.5zM134.7 134.4h5.5v5.5h-5.5zM89.7 144.4h5.5v5.5h-5.5zM109.7 219.4h5.5v5.5h-5.5zM194.7 219.4h5.5v5.5h-5.5zM94.7 224.4h5.5v5.5h-5.5zM94.7 239.4h5.5v5.5h-5.5zM79.7 244.4h5.5v5.5h-5.5zM204.7 244.4h5.5v5.5h-5.5zM249.7 249.4h5.5v5.5h-5.5zM79.7 269.4h5.5v5.5h-5.5zM209.7 274.4h5.5v5.5h-5.5zM114.7 284.4h5.5v5.5h-5.5zM219.7 294.4h5.5v5.5h-5.5zM354.7 294.4h5.5v5.5h-5.5zM274.7 309.4h5.5v5.5h-5.5zM224.7 319.4h5.5v5.5h-5.5zM234.7 319.4h5.5v5.5h-5.5z"/><path fill="rgb(91,91,91)" d="M69.7 49.4h5.5v5.5h-5.5zM109.7 59.4h5.5v5.5h-5.5zM89.7 79.4h5.5v5.5h-5.5zM69.7 84.4h5.5v5.5h-5.5zM144.7 164.4h5.5v5.5h-5.5zM84.7 184.4h5.5v5.5h-5.5zM139.7 189.4h5.5v5.5h-5.5zM79.7 194.4h5.5v5.5h-5.5zM104.7 199.4h10.5v5.5h-10.5zM139.7 239.4h5.5v5.5h-5.5zM119.7 249.4h5.5v5.5h-5.5zM234.7 249.4h10.5v5.5h-10.5zM184.7 254.4h10.5v5.5h-10.5zM229.7 254.4h5.5v5.5h-5.5zM224.7 259.4h5.5v5.5h-5.5zM124.7 274.4h5.5v5.5h-5.5zM249.7 284.4h5.5v5.5h-5.5zM224.7 294.4h5.5v5.5h-5.5zM234.7 294.4h5.5v5.5h-5.5zM304.7 299.4h10.5v5.5h-10.5zM79.7 309.4h5.5v5.5h-5.5z"/><path fill="rgb(92,92,92)" d="M84.7 144.4h5.5v5.5h-5.5zM89.7 149.4h5.5v5.5h-5.5zM124.7 154.4h5.5v5.5h-5.5zM149.7 199.4h5.5v5.5h-5.5zM169.7 199.4h5.5v5.5h-5.5zM184.7 209.4h5.5v5.5h-5.5zM79.7 214.4h5.5v5.5h-5.5zM169.7 219.4h5.5v5.5h-5.5zM229.7 244.4h5.5v5.5h-5.5zM204.7 249.4h5.5v5.5h-5.5zM244.7 249.4h5.5v5.5h-5.5zM164.7 259.4h5.5v5.5h-5.5zM189.7 259.4h5.5v5.5h-5.5zM129.7 269.4h5.5v5.5h-5.5zM189.7 269.4h5.5v5.5h-5.5zM34.7 274.4h5.5v5.5h-5.5zM219.7 274.4h5.5v5.5h-5.5zM234.7 274.4h5.5v5.5h-5.5zM119.7 279.4h5.5v5.5h-5.5zM199.7 279.4h5.5v5.5h-5.5zM229.7 294.4h5.5v5.5h-5.5zM314.7 299.4h5.5v5.5h-5.5zM164.7 314.4h5.5v5.5h-5.5z"/><path fill="rgb(93,93,93)" d="M69.7 9.4h5.5v5.5h-5.5zM74.7 34.4h5.5v5.5h-5.5zM114.7 59.4h5.5v5.5h-5.5zM79.7 84.4h5.5v5.5h-5.5zM64.7 89.4h5.5v5.5h-5.5zM124.7 124.4h5.5v5.5h-5.5zM144.7 184.4h5.5v5.5h-5.5zM129.7 194.4h5.5v5.5h-5.5zM104.7 219.4h5.5v5.5h-5.5zM139.7 224.4h5.5v5.5h-5.5zM119.7 254.4h5.5v5.5h-5.5zM209.7 254.4h5.5v5.5h-5.5zM214.7 259.4h5.5v5.5h-5.5zM189.7 264.4h5.5v5.5h-5.5zM189.7 274.4h5.5v5.5h-5.5zM214.7 274.4h5.5v5.5h-5.5zM224.7 274.4h10.5v5.5h-10.5zM34.7 279.4h5.5v5.5h-5.5zM194.7 279.4h5.5v5.5h-5.5zM244.7 279.4h5.5v5.5h-5.5zM34.7 294.4h5.5v5.5h-5.5zM194.7 294.4h5.5v5.5h-5.5z"/><path fill="rgb(94,94,94)" d="M69.7 24.4h5.5v5.5h-5.5zM139.7 134.4h5.5v5.5h-5.5zM94.7 149.4h5.5v5.5h-5.5zM134.7 194.4h5.5v5.5h-5.5zM179.7 214.4h5.5v5.5h-5.5zM149.7 219.4h5.5v5.5h-5.5zM129.7 224.4h5.5v5.5h-5.5zM89.7 244.4h5.5v5.5h-5.5zM209.7 244.4h5.5v5.5h-5.5zM219.7 259.4h5.5v5.5h-5.5zM34.7 284.4h5.5v5.5h-5.5zM34.7 289.4h5.5v5.5h-5.5zM89.7 289.4h5.5v5.5h-5.5zM244.7 289.4h5.5v5.5h-5.5zM359.7 294.4h5.5v5.5h-5.5zM34.7 299.4h5.5v5.5h-5.5zM319.7 299.4h5.5v5.5h-5.5zM329.7 299.4h5.5v5.5h-5.5zM34.7 304.4h5.5v5.5h-5.5zM289.7 304.4h5.5v5.5h-5.5zM219.7 319.4h5.5v5.5h-5.5z"/><path fill="rgb(95,95,95)" d="M59.7 4.4h5.5v5.5h-5.5zM74.7 39.4h5.5v5.5h-5.5zM69.7 44.4h5.5v5.5h-5.5zM104.7 59.4h5.5v5.5h-5.5zM119.7 59.4h5.5v5.5h-5.5zM114.7 124.4h5.5v5.5h-5.5zM164.7 199.4h5.5v5.5h-5.5zM164.7 219.4h5.5v5.5h-5.5zM129.7 229.4h5.5v5.5h-5.5zM129.7 234.4h5.5v5.5h-5.5zM129.7 239.4h5.5v5.5h-5.5zM99.7 244.4h5.5v5.5h-5.5zM79.7 249.4h5.5v5.5h-5.5zM169.7 259.4h5.5v5.5h-5.5zM34.7 269.4h5.5v5.5h-5.5zM204.7 279.4h5.5v5.5h-5.5zM194.7 284.4h5.5v5.5h-5.5zM199.7 289.4h5.5v5.5h-5.5zM324.7 299.4h5.5v5.5h-5.5zM279.7 309.4h5.5v5.5h-5.5zM239.7 319.4h5.5v5.5h-5.5z"/><path fill="rgb(96,96,96)" d="M64.7 4.4h5.5v5.5h-5.5zM59.7 64.4h5.5v5.5h-5.5zM79.7 74.4h5.5v5.5h-5.5zM94.7 74.4h20.5v5.5h-20.5zM74.7 104.4h5.5v5.5h-5.5zM99.7 129.4h5.5v5.5h-5.5zM129.7 134.4h5.5v5.5h-5.5zM84.7 139.4h5.5v5.5h-5.5zM134.7 164.4h5.5v5.5h-5.5zM79.7 189.4h5.5v5.5h-5.5zM119.7 204.4h5.5v5.5h-5.5zM139.7 229.4h5.5v5.5h-5.5zM139.7 234.4h5.5v5.5h-5.5zM209.7 249.4h5.5v5.5h-5.5zM229.7 249.4h5.5v5.5h-5.5zM84.7 254.4h5.5v5.5h-5.5zM114.7 259.4h5.5v5.5h-5.5zM184.7 259.4h5.5v5.5h-5.5zM99.7 264.4h5.5v5.5h-5.5zM419.7 274.4h5.5v5.5h-5.5zM409.7 279.4h5.5v5.5h-5.5zM199.7 284.4h5.5v5.5h-5.5zM204.7 289.4h5.5v5.5h-5.5zM384.7 289.4h5.5v5.5h-5.5zM364.7 294.4h5.5v5.5h-5.5zM334.7 299.4h5.5v5.5h-5.5zM144.7 309.4h5.5v5.5h-5.5z"/><path fill="rgb(97,97,97)" d="M64.7 19.4h5.5v5.5h-5.5zM89.7 59.4h10.5v5.5h-10.5zM64.7 64.4h5.5v5.5h-5.5zM74.7 64.4h5.5v5.5h-5.5zM74.7 99.4h5.5v5.5h-5.5zM74.7 109.4h5.5v5.5h-5.5zM104.7 129.4h5.5v5.5h-5.5zM89.7 139.4h5.5v5.5h-5.5zM84.7 199.4h5.5v5.5h-5.5zM154.7 199.4h5.5v5.5h-5.5zM149.7 214.4h5.5v5.5h-5.5zM89.7 219.4h5.5v5.5h-5.5zM134.7 224.4h5.5v5.5h-5.5zM214.7 244.4h5.5v5.5h-5.5zM224.7 244.4h5.5v5.5h-5.5zM174.7 259.4h5.5v5.5h-5.5zM189.7 279.4h5.5v5.5h-5.5zM239.7 279.4h5.5v5.5h-5.5zM244.7 284.4h5.5v5.5h-5.5zM399.7 284.4h5.5v5.5h-5.5zM139.7 304.4h5.5v5.5h-5.5zM264.7 314.4h5.5v5.5h-5.5z"/><path fill="rgb(98,98,98)" d="M49.7 44.4h5.5v5.5h-5.5zM59.7 54.4h5.5v5.5h-5.5zM109.7 54.4h5.5v5.5h-5.5zM99.7 59.4h5.5v5.5h-5.5zM89.7 74.4h5.5v5.5h-5.5zM94.7 144.4h5.5v5.5h-5.5zM129.7 189.4h5.5v5.5h-5.5zM159.7 199.4h5.5v5.5h-5.5zM149.7 204.4h5.5v5.5h-5.5zM119.7 209.4h5.5v5.5h-5.5zM159.7 219.4h5.5v5.5h-5.5zM134.7 239.4h5.5v5.5h-5.5zM214.7 254.4h5.5v5.5h-5.5zM179.7 259.4h5.5v5.5h-5.5zM84.7 264.4h5.5v5.5h-5.5zM239.7 289.4h5.5v5.5h-5.5zM369.7 294.4h5.5v5.5h-5.5zM84.7 309.4h5.5v5.5h-5.5zM214.7 319.4h5.5v5.5h-5.5z"/><path fill="rgb(99,99,99)" d="M59.7 69.4h5.5v5.5h-5.5zM64.7 99.4h5.5v5.5h-5.5zM89.7 124.4h5.5v5.5h-5.5zM84.7 149.4h5.5v5.5h-5.5zM179.7 204.4h5.5v5.5h-5.5zM154.7 219.4h5.5v5.5h-5.5zM134.7 229.4h5.5v5.5h-5.5zM219.7 244.4h5.5v5.5h-5.5zM224.7 254.4h5.5v5.5h-5.5zM29.7 269.4h5.5v5.5h-5.5zM184.7 269.4h5.5v5.5h-5.5zM29.7 274.4h5.5v5.5h-5.5zM434.7 274.4h10.5v5.5h-10.5zM209.7 279.4h5.5v5.5h-5.5zM189.7 284.4h5.5v5.5h-5.5zM189.7 294.4h5.5v5.5h-5.5zM294.7 304.4h5.5v5.5h-5.5zM159.7 314.4h5.5v5.5h-5.5z"/><path fill="rgb(100,100,100)" d="M54.7 14.4h5.5v5.5h-5.5zM84.7 59.4h5.5v5.5h-5.5zM84.7 74.4h5.5v5.5h-5.5zM114.7 74.4h5.5v5.5h-5.5zM69.7 114.4h5.5v5.5h-5.5zM119.7 124.4h5.5v5.5h-5.5zM139.7 164.4h5.5v5.5h-5.5zM134.7 234.4h5.5v5.5h-5.5zM184.7 264.4h5.5v5.5h-5.5zM444.7 274.4h5.5v5.5h-5.5zM29.7 279.4h5.5v5.5h-5.5zM234.7 279.4h5.5v5.5h-5.5zM204.7 284.4h5.5v5.5h-5.5zM194.7 289.4h5.5v5.5h-5.5zM339.7 299.4h5.5v5.5h-5.5zM109.7 304.4h30.5v5.5h-30.5zM299.7 304.4h5.5v5.5h-5.5zM74.7 309.4h5.5v5.5h-5.5zM284.7 309.4h5.5v5.5h-5.5zM204.7 319.4h10.5v5.5h-10.5zM244.7 319.4h5.5v5.5h-5.5z"/><path fill="rgb(101,101,101)" d="M54.7 54.4h5.5v5.5h-5.5zM114.7 54.4h5.5v5.5h-5.5zM54.7 64.4h5.5v5.5h-5.5zM69.7 64.4h5.5v5.5h-5.5zM64.7 74.4h5.5v5.5h-5.5zM89.7 154.4h10.5v5.5h-10.5zM129.7 164.4h5.5v5.5h-5.5zM119.7 179.4h5.5v5.5h-5.5zM144.7 179.4h5.5v5.5h-5.5zM149.7 209.4h5.5v5.5h-5.5zM214.7 249.4h5.5v5.5h-5.5zM79.7 254.4h5.5v5.5h-5.5zM154.7 264.4h5.5v5.5h-5.5zM429.7 274.4h5.5v5.5h-5.5zM214.7 279.4h20.5v5.5h-20.5zM239.7 284.4h5.5v5.5h-5.5zM209.7 289.4h5.5v5.5h-5.5zM89.7 294.4h5.5v5.5h-5.5zM304.7 304.4h10.5v5.5h-10.5zM74.7 314.4h5.5v5.5h-5.5z"/><path fill="rgb(102,102,102)" d="M59.7 39.4h5.5v5.5h-5.5zM104.7 54.4h5.5v5.5h-5.5zM119.7 74.4h5.5v5.5h-5.5zM64.7 84.4h5.5v5.5h-5.5zM174.7 214.4h5.5v5.5h-5.5zM219.7 254.4h5.5v5.5h-5.5zM424.7 274.4h5.5v5.5h-5.5zM29.7 284.4h5.5v5.5h-5.5zM29.7 289.4h5.5v5.5h-5.5zM224.7 289.4h5.5v5.5h-5.5zM234.7 289.4h5.5v5.5h-5.5zM29.7 294.4h5.5v5.5h-5.5zM184.7 294.4h5.5v5.5h-5.5zM144.7 299.4h5.5v5.5h-5.5zM34.7 309.4h5.5v5.5h-5.5z"/><path fill="rgb(103,103,103)" d="M49.7 14.4h5.5v5.5h-5.5zM119.7 54.4h5.5v5.5h-5.5zM74.7 79.4h5.5v5.5h-5.5zM99.7 149.4h5.5v5.5h-5.5zM134.7 189.4h5.5v5.5h-5.5zM99.7 219.4h5.5v5.5h-5.5zM94.7 244.4h5.5v5.5h-5.5zM224.7 249.4h5.5v5.5h-5.5zM184.7 274.4h5.5v5.5h-5.5zM219.7 289.4h5.5v5.5h-5.5zM229.7 289.4h5.5v5.5h-5.5zM374.7 294.4h5.5v5.5h-5.5zM29.7 299.4h5.5v5.5h-5.5zM344.7 299.4h10.5v5.5h-10.5zM104.7 304.4h5.5v5.5h-5.5zM314.7 304.4h5.5v5.5h-5.5zM139.7 309.4h5.5v5.5h-5.5zM269.7 314.4h5.5v5.5h-5.5zM199.7 319.4h5.5v5.5h-5.5z"/><path fill="rgb(104,104,104)" d="M64.7 39.4h5.5v5.5h-5.5zM54.7 59.4h5.5v5.5h-5.5zM69.7 79.4h5.5v5.5h-5.5zM84.7 79.4h5.5v5.5h-5.5zM84.7 99.4h5.5v5.5h-5.5zM94.7 129.4h5.5v5.5h-5.5zM124.7 129.4h5.5v5.5h-5.5zM124.7 179.4h5.5v5.5h-5.5zM129.7 184.4h5.5v5.5h-5.5zM179.7 209.4h5.5v5.5h-5.5zM114.7 214.4h5.5v5.5h-5.5zM234.7 284.4h5.5v5.5h-5.5zM214.7 289.4h5.5v5.5h-5.5zM29.7 304.4h5.5v5.5h-5.5zM74.7 304.4h5.5v5.5h-5.5zM289.7 309.4h5.5v5.5h-5.5z"/><path fill="rgb(105,105,105)" d="M64.7 14.4h5.5v5.5h-5.5zM59.7 19.4h5.5v5.5h-5.5zM64.7 24.4h5.5v5.5h-5.5zM69.7 29.4h5.5v5.5h-5.5zM59.7 59.4h5.5v5.5h-5.5zM59.7 94.4h5.5v5.5h-5.5zM124.7 139.4h5.5v5.5h-5.5zM119.7 144.4h5.5v5.5h-5.5zM219.7 249.4h5.5v5.5h-5.5zM89.7 264.4h5.5v5.5h-5.5zM179.7 264.4h5.5v5.5h-5.5zM184.7 279.4h5.5v5.5h-5.5zM414.7 279.4h5.5v5.5h-5.5zM209.7 284.4h5.5v5.5h-5.5zM224.7 284.4h10.5v5.5h-10.5zM389.7 289.4h5.5v5.5h-5.5zM179.7 294.4h5.5v5.5h-5.5zM89.7 299.4h5.5v5.5h-5.5zM249.7 319.4h5.5v5.5h-5.5z"/><path fill="rgb(106,106,106)" d="M44.7 34.4h5.5v5.5h-5.5zM49.7 49.4h5.5v5.5h-5.5zM84.7 54.4h5.5v5.5h-5.5zM64.7 104.4h5.5v5.5h-5.5zM109.7 129.4h5.5v5.5h-5.5zM94.7 139.4h5.5v5.5h-5.5zM124.7 159.4h5.5v5.5h-5.5zM94.7 179.4h5.5v5.5h-5.5zM114.7 179.4h5.5v5.5h-5.5zM114.7 249.4h5.5v5.5h-5.5zM134.7 269.4h5.5v5.5h-5.5zM184.7 284.4h5.5v5.5h-5.5zM219.7 284.4h5.5v5.5h-5.5zM404.7 284.4h5.5v5.5h-5.5zM354.7 299.4h5.5v5.5h-5.5zM109.7 309.4h15.5v5.5h-15.5zM134.7 309.4h5.5v5.5h-5.5zM294.7 309.4h10.5v5.5h-10.5zM154.7 314.4h5.5v5.5h-5.5zM274.7 314.4h5.5v5.5h-5.5zM-15.3 324.4h25.5v5.5h-25.5zM224.7 334.4h5.5v5.5h-5.5zM224.7 339.4h10.5v5.5h-10.5zM224.7 344.4h10.5v5.5h-10.5z"/><path fill="rgb(107,107,107)" d="M49.7 9.4h5.5v5.5h-5.5zM54.7 19.4h5.5v5.5h-5.5zM49.7 34.4h5.5v5.5h-5.5zM54.7 39.4h5.5v5.5h-5.5zM69.7 39.4h5.5v5.5h-5.5zM39.7 94.4h5.5v5.5h-5.5zM74.7 114.4h5.5v5.5h-5.5zM79.7 144.4h5.5v5.5h-5.5zM99.7 179.4h5.5v5.5h-5.5zM89.7 249.4h5.5v5.5h-5.5zM94.7 264.4h5.5v5.5h-5.5zM179.7 269.4h5.5v5.5h-5.5zM214.7 284.4h5.5v5.5h-5.5zM104.7 289.4h5.5v5.5h-5.5zM189.7 289.4h5.5v5.5h-5.5zM29.7 309.4h5.5v5.5h-5.5zM124.7 309.4h10.5v5.5h-10.5zM304.7 309.4h5.5v5.5h-5.5zM69.7 314.4h5.5v5.5h-5.5zM-20.3 319.4h30.5v5.5h-30.5zM194.7 319.4h5.5v5.5h-5.5zM-20.3 324.4h5.5v5.5h-5.5zM9.7 324.4h5.5v5.5h-5.5zM184.7 334.4h10.5v5.5h-10.5zM229.7 334.4h5.5v5.5h-5.5zM184.7 339.4h10.5v5.5h-10.5zM184.7 344.4h10.5v5.5h-10.5z"/><path fill="rgb(108,108,108)" d="M64.7 54.4h5.5v5.5h-5.5zM79.7 79.4h5.5v5.5h-5.5zM44.7 104.4h5.5v5.5h-5.5zM79.7 139.4h5.5v5.5h-5.5zM119.7 149.4h5.5v5.5h-5.5zM89.7 179.4h5.5v5.5h-5.5zM169.7 214.4h5.5v5.5h-5.5zM84.7 259.4h5.5v5.5h-5.5zM139.7 269.4h5.5v5.5h-5.5zM119.7 284.4h5.5v5.5h-5.5zM174.7 294.4h5.5v5.5h-5.5zM74.7 299.4h5.5v5.5h-5.5zM89.7 304.4h5.5v5.5h-5.5zM319.7 304.4h5.5v5.5h-5.5zM424.7 304.4h25.5v5.5h-25.5zM79.7 314.4h5.5v5.5h-5.5zM279.7 314.4h5.5v5.5h-5.5zM9.7 319.4h5.5v5.5h-5.5zM254.7 319.4h5.5v5.5h-5.5zM224.7 324.4h5.5v5.5h-5.5zM-20.3 329.4h30.5v5.5h-30.5zM184.7 329.4h10.5v5.5h-10.5zM224.7 329.4h5.5v5.5h-5.5zM-20.3 334.4h30.5v5.5h-30.5zM-20.3 339.4h30.5v5.5h-30.5zM219.7 339.4h5.5v5.5h-5.5zM-20.3 344.4h30.5v5.5h-30.5zM219.7 344.4h5.5v5.5h-5.5z"/><path fill="rgb(109,109,109)" d="M59.7 14.4h5.5v5.5h-5.5zM89.7 54.4h5.5v5.5h-5.5zM99.7 54.4h5.5v5.5h-5.5zM54.7 69.4h5.5v5.5h-5.5zM59.7 89.4h5.5v5.5h-5.5zM44.7 99.4h5.5v5.5h-5.5zM49.7 104.4h5.5v5.5h-5.5zM84.7 104.4h5.5v5.5h-5.5zM49.7 114.4h5.5v5.5h-5.5zM119.7 154.4h5.5v5.5h-5.5zM104.7 179.4h10.5v5.5h-10.5zM174.7 204.4h5.5v5.5h-5.5zM154.7 214.4h5.5v5.5h-5.5zM109.7 259.4h5.5v5.5h-5.5zM79.7 264.4h5.5v5.5h-5.5zM159.7 264.4h5.5v5.5h-5.5zM174.7 264.4h5.5v5.5h-5.5zM144.7 269.4h5.5v5.5h-5.5zM379.7 294.4h5.5v5.5h-5.5zM424.7 299.4h25.5v5.5h-25.5zM419.7 304.4h5.5v5.5h-5.5zM184.7 319.4h5.5v5.5h-5.5zM229.7 324.4h5.5v5.5h-5.5zM9.7 329.4h5.5v5.5h-5.5zM229.7 329.4h5.5v5.5h-5.5zM9.7 334.4h5.5v5.5h-5.5zM194.7 334.4h5.5v5.5h-5.5zM219.7 334.4h5.5v5.5h-5.5zM234.7 334.4h5.5v5.5h-5.5zM9.7 339.4h5.5v5.5h-5.5zM194.7 339.4h5.5v5.5h-5.5zM234.7 339.4h5.5v5.5h-5.5zM9.7 344.4h5.5v5.5h-5.5zM194.7 344.4h5.5v5.5h-5.5zM234.7 344.4h5.5v5.5h-5.5z"/><path fill="rgb(110,110,110)" d="M54.7 9.4h5.5v5.5h-5.5zM44.7 94.4h5.5v5.5h-5.5zM49.7 109.4h5.5v5.5h-5.5zM64.7 109.4h5.5v5.5h-5.5zM84.7 114.4h5.5v5.5h-5.5zM99.7 144.4h5.5v5.5h-5.5zM99.7 154.4h5.5v5.5h-5.5zM129.7 169.4h5.5v5.5h-5.5zM139.7 184.4h5.5v5.5h-5.5zM89.7 214.4h5.5v5.5h-5.5zM359.7 299.4h5.5v5.5h-5.5zM419.7 299.4h5.5v5.5h-5.5zM324.7 304.4h5.5v5.5h-5.5zM104.7 309.4h5.5v5.5h-5.5zM309.7 309.4h5.5v5.5h-5.5zM284.7 314.4h5.5v5.5h-5.5zM189.7 319.4h5.5v5.5h-5.5zM259.7 319.4h5.5v5.5h-5.5zM184.7 324.4h5.5v5.5h-5.5zM179.7 329.4h5.5v5.5h-5.5zM194.7 329.4h5.5v5.5h-5.5zM219.7 329.4h5.5v5.5h-5.5zM179.7 334.4h5.5v5.5h-5.5zM179.7 339.4h5.5v5.5h-5.5zM179.7 344.4h5.5v5.5h-5.5z"/><path fill="rgb(111,111,111)" d="M79.7 54.4h5.5v5.5h-5.5zM79.7 59.4h5.5v5.5h-5.5zM49.7 64.4h5.5v5.5h-5.5zM44.7 109.4h5.5v5.5h-5.5zM44.7 114.4h5.5v5.5h-5.5zM104.7 149.4h5.5v5.5h-5.5zM144.7 169.4h5.5v5.5h-5.5zM144.7 174.4h5.5v5.5h-5.5zM114.7 204.4h5.5v5.5h-5.5zM154.7 204.4h5.5v5.5h-5.5zM164.7 214.4h5.5v5.5h-5.5zM94.7 219.4h5.5v5.5h-5.5zM169.7 264.4h5.5v5.5h-5.5zM129.7 274.4h5.5v5.5h-5.5zM124.7 279.4h5.5v5.5h-5.5zM109.7 289.4h5.5v5.5h-5.5zM169.7 294.4h5.5v5.5h-5.5zM139.7 299.4h5.5v5.5h-5.5zM329.7 304.4h5.5v5.5h-5.5zM149.7 314.4h5.5v5.5h-5.5zM179.7 319.4h5.5v5.5h-5.5zM189.7 324.4h5.5v5.5h-5.5zM219.7 324.4h5.5v5.5h-5.5zM234.7 324.4h5.5v5.5h-5.5zM234.7 329.4h5.5v5.5h-5.5z"/><path fill="rgb(112,112,112)" d="M34.7 -0.6h5.5v5.5h-5.5zM64.7 9.4h5.5v5.5h-5.5zM39.7 34.4h5.5v5.5h-5.5zM54.7 34.4h5.5v5.5h-5.5zM69.7 34.4h5.5v5.5h-5.5zM94.7 54.4h5.5v5.5h-5.5zM49.7 99.4h5.5v5.5h-5.5zM84.7 109.4h5.5v5.5h-5.5zM84.7 154.4h5.5v5.5h-5.5zM114.7 254.4h5.5v5.5h-5.5zM79.7 259.4h5.5v5.5h-5.5zM164.7 264.4h5.5v5.5h-5.5zM419.7 279.4h5.5v5.5h-5.5zM434.7 279.4h15.5v5.5h-15.5zM394.7 289.4h5.5v5.5h-5.5zM364.7 299.4h10.5v5.5h-10.5zM414.7 304.4h5.5v5.5h-5.5zM29.7 314.4h5.5v5.5h-5.5zM299.7 314.4h5.5v5.5h-5.5zM194.7 324.4h5.5v5.5h-5.5zM199.7 334.4h5.5v5.5h-5.5zM214.7 334.4h5.5v5.5h-5.5zM239.7 334.4h5.5v5.5h-5.5zM199.7 339.4h5.5v5.5h-5.5zM214.7 339.4h5.5v5.5h-5.5zM239.7 339.4h5.5v5.5h-5.5zM199.7 344.4h5.5v5.5h-5.5zM214.7 344.4h5.5v5.5h-5.5zM239.7 344.4h5.5v5.5h-5.5z"/><path fill="rgb(113,113,113)" d="M34.7 -5.6h5.5v5.5h-5.5zM49.7 19.4h5.5v5.5h-5.5zM49.7 59.4h5.5v5.5h-5.5zM39.7 89.4h5.5v5.5h-5.5zM59.7 99.4h5.5v5.5h-5.5zM79.7 149.4h5.5v5.5h-5.5zM129.7 179.4h5.5v5.5h-5.5zM159.7 214.4h5.5v5.5h-5.5zM109.7 249.4h5.5v5.5h-5.5zM179.7 274.4h5.5v5.5h-5.5zM179.7 279.4h5.5v5.5h-5.5zM429.7 279.4h5.5v5.5h-5.5zM99.7 289.4h5.5v5.5h-5.5zM104.7 299.4h10.5v5.5h-10.5zM414.7 299.4h5.5v5.5h-5.5zM334.7 304.4h5.5v5.5h-5.5zM314.7 309.4h5.5v5.5h-5.5zM289.7 314.4h10.5v5.5h-10.5zM304.7 314.4h5.5v5.5h-5.5zM74.7 319.4h5.5v5.5h-5.5zM264.7 319.4h5.5v5.5h-5.5zM179.7 324.4h5.5v5.5h-5.5zM199.7 329.4h5.5v5.5h-5.5zM74.7 334.4h5.5v5.5h-5.5zM74.7 339.4h5.5v5.5h-5.5zM74.7 344.4h5.5v5.5h-5.5z"/><path fill="rgb(114,114,114)" d="M34.7 -20.6h5.5v5.5h-5.5zM34.7 -15.6h5.5v5.5h-5.5zM34.7 -10.6h5.5v5.5h-5.5zM49.7 39.4h5.5v5.5h-5.5zM64.7 59.4h5.5v5.5h-5.5zM79.7 99.4h5.5v5.5h-5.5zM64.7 114.4h5.5v5.5h-5.5zM49.7 119.4h5.5v5.5h-5.5zM89.7 129.4h5.5v5.5h-5.5zM114.7 129.4h5.5v5.5h-5.5zM109.7 149.4h10.5v5.5h-10.5zM114.7 154.4h5.5v5.5h-5.5zM89.7 159.4h5.5v5.5h-5.5zM134.7 169.4h5.5v5.5h-5.5zM124.7 174.4h5.5v5.5h-5.5zM134.7 184.4h5.5v5.5h-5.5zM89.7 204.4h5.5v5.5h-5.5zM174.7 209.4h5.5v5.5h-5.5zM149.7 269.4h5.5v5.5h-5.5zM174.7 269.4h5.5v5.5h-5.5zM424.7 279.4h5.5v5.5h-5.5zM179.7 284.4h5.5v5.5h-5.5zM184.7 289.4h5.5v5.5h-5.5zM74.7 294.4h5.5v5.5h-5.5zM164.7 294.4h5.5v5.5h-5.5zM124.7 299.4h15.5v5.5h-15.5zM374.7 299.4h5.5v5.5h-5.5zM34.7 314.4h5.5v5.5h-5.5zM144.7 314.4h5.5v5.5h-5.5zM74.7 324.4h5.5v5.5h-5.5zM199.7 324.4h5.5v5.5h-5.5zM214.7 324.4h5.5v5.5h-5.5zM74.7 329.4h5.5v5.5h-5.5zM174.7 329.4h5.5v5.5h-5.5zM214.7 329.4h5.5v5.5h-5.5zM239.7 329.4h5.5v5.5h-5.5zM164.7 334.4h5.5v5.5h-5.5zM174.7 334.4h5.5v5.5h-5.5zM204.7 334.4h5.5v5.5h-5.5zM164.7 339.4h5.5v5.5h-5.5zM174.7 339.4h5.5v5.5h-5.5zM204.7 339.4h10.5v5.5h-10.5zM164.7 344.4h5.5v5.5h-5.5zM174.7 344.4h5.5v5.5h-5.5zM204.7 344.4h10.5v5.5h-10.5z"/><path fill="rgb(115,115,115)" d="M44.7 9.4h5.5v5.5h-5.5zM59.7 24.4h5.5v5.5h-5.5zM64.7 29.4h5.5v5.5h-5.5zM59.7 34.4h5.5v5.5h-5.5zM49.7 54.4h5.5v5.5h-5.5zM64.7 79.4h5.5v5.5h-5.5zM119.7 129.4h5.5v5.5h-5.5zM89.7 134.4h15.5v5.5h-15.5zM124.7 134.4h5.5v5.5h-5.5zM114.7 144.4h5.5v5.5h-5.5zM129.7 174.4h5.5v5.5h-5.5zM169.7 204.4h5.5v5.5h-5.5zM109.7 214.4h5.5v5.5h-5.5zM104.7 249.4h5.5v5.5h-5.5zM89.7 254.4h5.5v5.5h-5.5zM104.7 259.4h5.5v5.5h-5.5zM409.7 284.4h5.5v5.5h-5.5zM74.7 289.4h5.5v5.5h-5.5zM384.7 294.4h5.5v5.5h-5.5zM114.7 299.4h10.5v5.5h-10.5zM339.7 304.4h5.5v5.5h-5.5zM349.7 304.4h5.5v5.5h-5.5zM69.7 309.4h5.5v5.5h-5.5zM174.7 319.4h5.5v5.5h-5.5zM239.7 324.4h5.5v5.5h-5.5zM164.7 329.4h5.5v5.5h-5.5zM204.7 329.4h5.5v5.5h-5.5zM159.7 334.4h5.5v5.5h-5.5zM169.7 334.4h5.5v5.5h-5.5zM209.7 334.4h5.5v5.5h-5.5zM159.7 339.4h5.5v5.5h-5.5zM169.7 339.4h5.5v5.5h-5.5zM159.7 344.4h5.5v5.5h-5.5zM169.7 344.4h5.5v5.5h-5.5z"/><path fill="rgb(116,116,116)" d="M34.7 4.4h5.5v5.5h-5.5zM59.7 74.4h5.5v5.5h-5.5zM44.7 119.4h5.5v5.5h-5.5zM69.7 119.4h5.5v5.5h-5.5zM104.7 154.4h10.5v5.5h-10.5zM94.7 159.4h5.5v5.5h-5.5zM34.7 264.4h5.5v5.5h-5.5zM94.7 289.4h5.5v5.5h-5.5zM159.7 294.4h5.5v5.5h-5.5zM54.7 304.4h5.5v5.5h-5.5zM344.7 304.4h5.5v5.5h-5.5zM354.7 304.4h5.5v5.5h-5.5zM409.7 304.4h5.5v5.5h-5.5zM89.7 309.4h5.5v5.5h-5.5zM419.7 309.4h30.5v5.5h-30.5zM309.7 314.4h5.5v5.5h-5.5zM69.7 319.4h5.5v5.5h-5.5zM174.7 324.4h5.5v5.5h-5.5zM204.7 324.4h10.5v5.5h-10.5zM159.7 329.4h5.5v5.5h-5.5zM169.7 329.4h5.5v5.5h-5.5zM209.7 329.4h5.5v5.5h-5.5zM69.7 334.4h5.5v5.5h-5.5zM244.7 334.4h5.5v5.5h-5.5zM69.7 339.4h5.5v5.5h-5.5zM244.7 339.4h5.5v5.5h-5.5zM69.7 344.4h5.5v5.5h-5.5zM244.7 344.4h5.5v5.5h-5.5z"/><path fill="rgb(117,117,117)" d="M64.7 34.4h5.5v5.5h-5.5zM59.7 84.4h5.5v5.5h-5.5zM44.7 89.4h5.5v5.5h-5.5zM54.7 99.4h5.5v5.5h-5.5zM14.7 104.4h10.5v5.5h-10.5zM54.7 114.4h5.5v5.5h-5.5zM84.7 134.4h5.5v5.5h-5.5zM99.7 139.4h5.5v5.5h-5.5zM84.7 179.4h5.5v5.5h-5.5zM84.7 204.4h5.5v5.5h-5.5zM114.7 209.4h5.5v5.5h-5.5zM154.7 209.4h5.5v5.5h-5.5zM29.7 264.4h5.5v5.5h-5.5zM74.7 284.4h5.5v5.5h-5.5zM399.7 289.4h5.5v5.5h-5.5zM104.7 294.4h5.5v5.5h-5.5zM99.7 304.4h5.5v5.5h-5.5zM319.7 309.4h5.5v5.5h-5.5zM414.7 309.4h5.5v5.5h-5.5zM84.7 314.4h5.5v5.5h-5.5zM139.7 314.4h5.5v5.5h-5.5zM164.7 319.4h10.5v5.5h-10.5zM269.7 319.4h5.5v5.5h-5.5zM69.7 324.4h5.5v5.5h-5.5zM159.7 324.4h10.5v5.5h-10.5zM69.7 329.4h5.5v5.5h-5.5zM259.7 334.4h5.5v5.5h-5.5zM259.7 339.4h5.5v5.5h-5.5zM259.7 344.4h10.5v5.5h-10.5z"/><path fill="rgb(118,118,118)" d="M59.7 9.4h5.5v5.5h-5.5zM54.7 104.4h5.5v5.5h-5.5zM84.7 119.4h5.5v5.5h-5.5zM104.7 144.4h5.5v5.5h-5.5zM124.7 169.4h5.5v5.5h-5.5zM139.7 179.4h5.5v5.5h-5.5zM94.7 204.4h5.5v5.5h-5.5zM159.7 204.4h5.5v5.5h-5.5zM419.7 294.4h30.5v5.5h-30.5zM54.7 299.4h5.5v5.5h-5.5zM379.7 299.4h5.5v5.5h-5.5zM409.7 299.4h5.5v5.5h-5.5zM54.7 309.4h5.5v5.5h-5.5zM99.7 309.4h5.5v5.5h-5.5zM29.7 319.4h5.5v5.5h-5.5zM79.7 319.4h5.5v5.5h-5.5zM159.7 319.4h5.5v5.5h-5.5zM304.7 319.4h5.5v5.5h-5.5zM169.7 324.4h5.5v5.5h-5.5zM244.7 324.4h5.5v5.5h-5.5zM79.7 329.4h5.5v5.5h-5.5zM244.7 329.4h5.5v5.5h-5.5zM259.7 329.4h10.5v5.5h-10.5zM79.7 334.4h5.5v5.5h-5.5zM264.7 334.4h5.5v5.5h-5.5zM79.7 339.4h5.5v5.5h-5.5zM264.7 339.4h5.5v5.5h-5.5zM79.7 344.4h5.5v5.5h-5.5z"/><path fill="rgb(119,119,119)" d="M59.7 29.4h5.5v5.5h-5.5zM49.7 69.4h5.5v5.5h-5.5zM14.7 99.4h5.5v5.5h-5.5zM79.7 104.4h5.5v5.5h-5.5zM54.7 109.4h5.5v5.5h-5.5zM74.7 119.4h5.5v5.5h-5.5zM109.7 144.4h5.5v5.5h-5.5zM124.7 164.4h5.5v5.5h-5.5zM119.7 174.4h5.5v5.5h-5.5zM164.7 204.4h5.5v5.5h-5.5zM99.7 249.4h5.5v5.5h-5.5zM154.7 269.4h5.5v5.5h-5.5zM169.7 269.4h5.5v5.5h-5.5zM414.7 284.4h5.5v5.5h-5.5zM114.7 289.4h5.5v5.5h-5.5zM179.7 289.4h5.5v5.5h-5.5zM54.7 294.4h5.5v5.5h-5.5zM154.7 294.4h5.5v5.5h-5.5zM359.7 304.4h5.5v5.5h-5.5zM369.7 304.4h5.5v5.5h-5.5zM274.7 319.4h20.5v5.5h-20.5zM299.7 319.4h5.5v5.5h-5.5zM309.7 319.4h5.5v5.5h-5.5zM29.7 324.4h5.5v5.5h-5.5zM79.7 324.4h5.5v5.5h-5.5zM259.7 324.4h10.5v5.5h-10.5zM29.7 329.4h5.5v5.5h-5.5zM154.7 329.4h5.5v5.5h-5.5zM309.7 329.4h5.5v5.5h-5.5zM29.7 334.4h5.5v5.5h-5.5zM154.7 334.4h5.5v5.5h-5.5zM249.7 334.4h10.5v5.5h-10.5zM309.7 334.4h5.5v5.5h-5.5zM29.7 339.4h5.5v5.5h-5.5zM154.7 339.4h5.5v5.5h-5.5zM249.7 339.4h10.5v5.5h-10.5zM309.7 339.4h5.5v5.5h-5.5zM29.7 344.4h5.5v5.5h-5.5zM154.7 344.4h5.5v5.5h-5.5zM249.7 344.4h10.5v5.5h-10.5zM309.7 344.4h5.5v5.5h-5.5z"/><path fill="rgb(120,120,120)" d="M14.7 34.4h10.5v5.5h-10.5zM69.7 54.4h5.5v5.5h-5.5zM34.7 89.4h5.5v5.5h-5.5zM34.7 94.4h5.5v5.5h-5.5zM19.7 99.4h5.5v5.5h-5.5zM39.7 99.4h5.5v5.5h-5.5zM59.7 104.4h5.5v5.5h-5.5zM104.7 134.4h5.5v5.5h-5.5zM84.7 159.4h5.5v5.5h-5.5zM139.7 169.4h5.5v5.5h-5.5zM134.7 174.4h5.5v5.5h-5.5zM134.7 179.4h5.5v5.5h-5.5zM79.7 184.4h5.5v5.5h-5.5zM104.7 214.4h5.5v5.5h-5.5zM89.7 259.4h5.5v5.5h-5.5zM174.7 274.4h5.5v5.5h-5.5zM174.7 279.4h5.5v5.5h-5.5zM174.7 284.4h5.5v5.5h-5.5zM424.7 284.4h25.5v5.5h-25.5zM404.7 289.4h5.5v5.5h-5.5zM109.7 294.4h5.5v5.5h-5.5zM389.7 294.4h5.5v5.5h-5.5zM414.7 294.4h5.5v5.5h-5.5zM364.7 304.4h5.5v5.5h-5.5zM374.7 304.4h5.5v5.5h-5.5zM404.7 304.4h5.5v5.5h-5.5zM324.7 309.4h5.5v5.5h-5.5zM409.7 309.4h5.5v5.5h-5.5zM134.7 314.4h5.5v5.5h-5.5zM314.7 314.4h5.5v5.5h-5.5zM294.7 319.4h5.5v5.5h-5.5zM154.7 324.4h5.5v5.5h-5.5zM309.7 324.4h5.5v5.5h-5.5zM254.7 329.4h5.5v5.5h-5.5zM304.7 334.4h5.5v5.5h-5.5zM304.7 339.4h5.5v5.5h-5.5zM304.7 344.4h5.5v5.5h-5.5z"/><path fill="rgb(121,121,121)" d="M44.7 14.4h5.5v5.5h-5.5zM49.7 29.4h10.5v5.5h-10.5zM44.7 39.4h5.5v5.5h-5.5zM74.7 54.4h5.5v5.5h-5.5zM44.7 64.4h5.5v5.5h-5.5zM79.7 109.4h5.5v5.5h-5.5zM109.7 204.4h5.5v5.5h-5.5zM169.7 209.4h5.5v5.5h-5.5zM74.7 219.4h5.5v5.5h-5.5zM94.7 249.4h5.5v5.5h-5.5zM99.7 259.4h5.5v5.5h-5.5zM419.7 284.4h5.5v5.5h-5.5zM384.7 299.4h5.5v5.5h-5.5zM404.7 299.4h5.5v5.5h-5.5zM104.7 314.4h30.5v5.5h-30.5zM154.7 319.4h5.5v5.5h-5.5zM14.7 324.4h5.5v5.5h-5.5zM249.7 324.4h10.5v5.5h-10.5zM304.7 324.4h5.5v5.5h-5.5zM249.7 329.4h5.5v5.5h-5.5zM304.7 329.4h5.5v5.5h-5.5zM269.7 334.4h5.5v5.5h-5.5zM289.7 334.4h5.5v5.5h-5.5zM269.7 339.4h5.5v5.5h-5.5zM289.7 339.4h5.5v5.5h-5.5zM269.7 344.4h5.5v5.5h-5.5zM289.7 344.4h5.5v5.5h-5.5z"/><path fill="rgb(122,122,122)" d="M39.7 9.4h5.5v5.5h-5.5zM44.7 29.4h5.5v5.5h-5.5zM34.7 34.4h5.5v5.5h-5.5zM54.7 94.4h5.5v5.5h-5.5zM84.7 124.4h5.5v5.5h-5.5zM119.7 159.4h5.5v5.5h-5.5zM99.7 204.4h5.5v5.5h-5.5zM84.7 209.4h5.5v5.5h-5.5zM109.7 254.4h5.5v5.5h-5.5zM159.7 269.4h10.5v5.5h-10.5zM134.7 274.4h5.5v5.5h-5.5zM149.7 274.4h5.5v5.5h-5.5zM174.7 289.4h5.5v5.5h-5.5zM409.7 289.4h5.5v5.5h-5.5zM39.7 294.4h5.5v5.5h-5.5zM99.7 294.4h5.5v5.5h-5.5zM409.7 294.4h5.5v5.5h-5.5zM99.7 299.4h5.5v5.5h-5.5zM389.7 299.4h10.5v5.5h-10.5zM59.7 304.4h5.5v5.5h-5.5zM379.7 304.4h5.5v5.5h-5.5zM389.7 304.4h15.5v5.5h-15.5zM64.7 314.4h5.5v5.5h-5.5zM89.7 314.4h15.5v5.5h-15.5zM414.7 314.4h5.5v5.5h-5.5zM284.7 324.4h10.5v5.5h-10.5zM14.7 329.4h5.5v5.5h-5.5zM84.7 329.4h5.5v5.5h-5.5zM269.7 329.4h5.5v5.5h-5.5zM284.7 329.4h20.5v5.5h-20.5zM14.7 334.4h5.5v5.5h-5.5zM84.7 334.4h5.5v5.5h-5.5zM284.7 334.4h5.5v5.5h-5.5zM294.7 334.4h10.5v5.5h-10.5zM84.7 339.4h5.5v5.5h-5.5zM284.7 339.4h5.5v5.5h-5.5zM294.7 339.4h10.5v5.5h-10.5zM84.7 344.4h5.5v5.5h-5.5zM284.7 344.4h5.5v5.5h-5.5zM294.7 344.4h10.5v5.5h-10.5z"/><path fill="rgb(123,123,123)" d="M44.7 44.4h5.5v5.5h-5.5zM74.7 59.4h5.5v5.5h-5.5zM49.7 94.4h5.5v5.5h-5.5zM59.7 114.4h5.5v5.5h-5.5zM99.7 159.4h5.5v5.5h-5.5zM139.7 174.4h5.5v5.5h-5.5zM104.7 204.4h5.5v5.5h-5.5zM74.7 224.4h5.5v5.5h-5.5zM144.7 274.4h5.5v5.5h-5.5zM154.7 274.4h20.5v5.5h-20.5zM414.7 289.4h35.5v5.5h-35.5zM149.7 294.4h5.5v5.5h-5.5zM394.7 294.4h5.5v5.5h-5.5zM399.7 299.4h5.5v5.5h-5.5zM384.7 304.4h5.5v5.5h-5.5zM59.7 309.4h5.5v5.5h-5.5zM94.7 309.4h5.5v5.5h-5.5zM329.7 309.4h5.5v5.5h-5.5zM404.7 309.4h5.5v5.5h-5.5zM54.7 314.4h5.5v5.5h-5.5zM419.7 314.4h5.5v5.5h-5.5zM14.7 319.4h5.5v5.5h-5.5zM84.7 319.4h5.5v5.5h-5.5zM314.7 319.4h5.5v5.5h-5.5zM84.7 324.4h5.5v5.5h-5.5zM269.7 324.4h5.5v5.5h-5.5zM294.7 324.4h10.5v5.5h-10.5zM149.7 329.4h5.5v5.5h-5.5zM279.7 329.4h5.5v5.5h-5.5zM314.7 329.4h5.5v5.5h-5.5zM149.7 334.4h5.5v5.5h-5.5zM274.7 334.4h10.5v5.5h-10.5zM314.7 334.4h5.5v5.5h-5.5zM14.7 339.4h5.5v5.5h-5.5zM149.7 339.4h5.5v5.5h-5.5zM274.7 339.4h10.5v5.5h-10.5zM314.7 339.4h5.5v5.5h-5.5zM14.7 344.4h5.5v5.5h-5.5zM149.7 344.4h5.5v5.5h-5.5zM274.7 344.4h10.5v5.5h-10.5zM314.7 344.4h5.5v5.5h-5.5z"/><path fill="rgb(124,124,124)" d="M54.7 24.4h5.5v5.5h-5.5zM24.7 34.4h5.5v5.5h-5.5zM69.7 59.4h5.5v5.5h-5.5zM54.7 89.4h5.5v5.5h-5.5zM39.7 104.4h5.5v5.5h-5.5zM14.7 109.4h5.5v5.5h-5.5zM59.7 109.4h5.5v5.5h-5.5zM79.7 114.4h5.5v5.5h-5.5zM54.7 119.4h5.5v5.5h-5.5zM84.7 129.4h5.5v5.5h-5.5zM159.7 209.4h10.5v5.5h-10.5zM104.7 254.4h5.5v5.5h-5.5zM39.7 274.4h5.5v5.5h-5.5zM139.7 274.4h5.5v5.5h-5.5zM39.7 279.4h5.5v5.5h-5.5zM169.7 279.4h5.5v5.5h-5.5zM124.7 284.4h5.5v5.5h-5.5zM399.7 294.4h10.5v5.5h-10.5zM334.7 309.4h5.5v5.5h-5.5zM344.7 309.4h15.5v5.5h-15.5zM389.7 309.4h5.5v5.5h-5.5zM319.7 314.4h5.5v5.5h-5.5zM409.7 314.4h5.5v5.5h-5.5zM424.7 314.4h25.5v5.5h-25.5zM64.7 319.4h5.5v5.5h-5.5zM149.7 319.4h5.5v5.5h-5.5zM64.7 324.4h5.5v5.5h-5.5zM149.7 324.4h5.5v5.5h-5.5zM274.7 324.4h10.5v5.5h-10.5zM314.7 324.4h5.5v5.5h-5.5zM64.7 329.4h5.5v5.5h-5.5zM89.7 329.4h5.5v5.5h-5.5zM274.7 329.4h5.5v5.5h-5.5zM64.7 334.4h5.5v5.5h-5.5zM89.7 334.4h5.5v5.5h-5.5zM64.7 339.4h5.5v5.5h-5.5zM89.7 339.4h5.5v5.5h-5.5zM64.7 344.4h5.5v5.5h-5.5zM89.7 344.4h5.5v5.5h-5.5z"/><path fill="rgb(125,125,125)" d="M34.7 9.4h5.5v5.5h-5.5zM9.7 34.4h5.5v5.5h-5.5zM19.7 109.4h5.5v5.5h-5.5zM79.7 134.4h5.5v5.5h-5.5zM119.7 139.4h5.5v5.5h-5.5zM79.7 154.4h5.5v5.5h-5.5zM74.7 229.4h5.5v5.5h-5.5zM74.7 234.4h5.5v5.5h-5.5zM74.7 239.4h5.5v5.5h-5.5zM74.7 244.4h5.5v5.5h-5.5zM74.7 279.4h5.5v5.5h-5.5zM39.7 284.4h5.5v5.5h-5.5zM169.7 284.4h5.5v5.5h-5.5zM39.7 289.4h5.5v5.5h-5.5zM54.7 289.4h5.5v5.5h-5.5zM49.7 294.4h5.5v5.5h-5.5zM94.7 294.4h5.5v5.5h-5.5zM114.7 294.4h5.5v5.5h-5.5zM39.7 299.4h5.5v5.5h-5.5zM64.7 309.4h5.5v5.5h-5.5zM339.7 309.4h5.5v5.5h-5.5zM359.7 309.4h30.5v5.5h-30.5zM394.7 309.4h10.5v5.5h-10.5zM-20.3 314.4h25.5v5.5h-25.5zM59.7 314.4h5.5v5.5h-5.5zM89.7 319.4h5.5v5.5h-5.5zM414.7 319.4h5.5v5.5h-5.5zM89.7 324.4h5.5v5.5h-5.5z"/><path fill="rgb(126,126,126)" d="M44.7 19.4h5.5v5.5h-5.5zM44.7 59.4h5.5v5.5h-5.5zM49.7 89.4h5.5v5.5h-5.5zM89.7 164.4h5.5v5.5h-5.5zM89.7 174.4h5.5v5.5h-5.5zM114.7 174.4h5.5v5.5h-5.5zM79.7 199.4h5.5v5.5h-5.5zM89.7 209.4h5.5v5.5h-5.5zM74.7 249.4h5.5v5.5h-5.5zM94.7 259.4h5.5v5.5h-5.5zM129.7 279.4h5.5v5.5h-5.5zM119.7 289.4h5.5v5.5h-5.5zM169.7 289.4h5.5v5.5h-5.5zM144.7 294.4h5.5v5.5h-5.5zM49.7 299.4h5.5v5.5h-5.5zM59.7 299.4h5.5v5.5h-5.5zM39.7 304.4h5.5v5.5h-5.5zM94.7 304.4h5.5v5.5h-5.5zM59.7 319.4h5.5v5.5h-5.5zM419.7 319.4h30.5v5.5h-30.5zM59.7 324.4h5.5v5.5h-5.5zM414.7 324.4h10.5v5.5h-10.5zM59.7 329.4h5.5v5.5h-5.5zM134.7 329.4h5.5v5.5h-5.5zM144.7 329.4h5.5v5.5h-5.5zM414.7 329.4h35.5v5.5h-35.5zM54.7 334.4h10.5v5.5h-10.5zM134.7 334.4h15.5v5.5h-15.5zM414.7 334.4h35.5v5.5h-35.5zM54.7 339.4h10.5v5.5h-10.5zM134.7 339.4h15.5v5.5h-15.5zM414.7 339.4h35.5v5.5h-35.5zM54.7 344.4h10.5v5.5h-10.5zM134.7 344.4h15.5v5.5h-15.5zM414.7 344.4h35.5v5.5h-35.5z"/><path fill="rgb(127,127,127)" d="M49.7 24.4h5.5v5.5h-5.5zM29.7 34.4h5.5v5.5h-5.5zM44.7 69.4h5.5v5.5h-5.5zM59.7 79.4h5.5v5.5h-5.5zM14.7 94.4h5.5v5.5h-5.5zM64.7 119.4h5.5v5.5h-5.5zM44.7 124.4h5.5v5.5h-5.5zM109.7 134.4h5.5v5.5h-5.5zM104.7 139.4h5.5v5.5h-5.5zM74.7 144.4h5.5v5.5h-5.5zM114.7 159.4h5.5v5.5h-5.5zM99.7 214.4h5.5v5.5h-5.5zM74.7 254.4h5.5v5.5h-5.5zM94.7 254.4h10.5v5.5h-10.5zM149.7 279.4h20.5v5.5h-20.5zM154.7 284.4h5.5v5.5h-5.5zM49.7 304.4h5.5v5.5h-5.5zM324.7 314.4h5.5v5.5h-5.5zM404.7 314.4h5.5v5.5h-5.5zM34.7 319.4h5.5v5.5h-5.5zM54.7 319.4h5.5v5.5h-5.5zM134.7 319.4h15.5v5.5h-15.5zM409.7 319.4h5.5v5.5h-5.5zM54.7 324.4h5.5v5.5h-5.5zM129.7 324.4h20.5v5.5h-20.5zM424.7 324.4h25.5v5.5h-25.5zM34.7 329.4h5.5v5.5h-5.5zM54.7 329.4h5.5v5.5h-5.5zM129.7 329.4h5.5v5.5h-5.5zM139.7 329.4h5.5v5.5h-5.5zM34.7 334.4h5.5v5.5h-5.5zM129.7 334.4h5.5v5.5h-5.5zM409.7 334.4h5.5v5.5h-5.5zM34.7 339.4h5.5v5.5h-5.5zM129.7 339.4h5.5v5.5h-5.5zM409.7 339.4h5.5v5.5h-5.5zM34.7 344.4h5.5v5.5h-5.5zM129.7 344.4h5.5v5.5h-5.5zM409.7 344.4h5.5v5.5h-5.5z"/><path fill="rgb(128,128,128)" d="M54.7 74.4h5.5v5.5h-5.5zM14.7 89.4h5.5v5.5h-5.5zM29.7 89.4h5.5v5.5h-5.5zM19.7 94.4h5.5v5.5h-5.5zM74.7 139.4h5.5v5.5h-5.5zM104.7 159.4h10.5v5.5h-10.5zM84.7 164.4h5.5v5.5h-5.5zM94.7 164.4h5.5v5.5h-5.5zM119.7 169.4h5.5v5.5h-5.5zM84.7 174.4h5.5v5.5h-5.5zM94.7 174.4h10.5v5.5h-10.5zM109.7 209.4h5.5v5.5h-5.5zM74.7 214.4h5.5v5.5h-5.5zM94.7 214.4h5.5v5.5h-5.5zM39.7 269.4h5.5v5.5h-5.5zM144.7 279.4h5.5v5.5h-5.5zM159.7 284.4h10.5v5.5h-10.5zM154.7 289.4h5.5v5.5h-5.5zM164.7 289.4h5.5v5.5h-5.5zM119.7 294.4h25.5v5.5h-25.5zM94.7 299.4h5.5v5.5h-5.5zM49.7 309.4h5.5v5.5h-5.5zM4.7 314.4h5.5v5.5h-5.5zM359.7 314.4h40.5v5.5h-40.5zM129.7 319.4h5.5v5.5h-5.5zM319.7 319.4h5.5v5.5h-5.5zM34.7 324.4h5.5v5.5h-5.5zM409.7 324.4h5.5v5.5h-5.5zM409.7 329.4h5.5v5.5h-5.5zM94.7 339.4h5.5v5.5h-5.5zM94.7 344.4h5.5v5.5h-5.5z"/><path fill="rgb(129,129,129)" d="M29.7 9.4h5.5v5.5h-5.5zM19.7 29.4h5.5v5.5h-5.5zM39.7 29.4h5.5v5.5h-5.5zM39.7 39.4h5.5v5.5h-5.5zM54.7 84.4h5.5v5.5h-5.5zM29.7 94.4h5.5v5.5h-5.5zM39.7 109.4h5.5v5.5h-5.5zM39.7 114.4h5.5v5.5h-5.5zM79.7 119.4h5.5v5.5h-5.5zM119.7 134.4h5.5v5.5h-5.5zM74.7 149.4h5.5v5.5h-5.5zM104.7 174.4h10.5v5.5h-10.5zM79.7 209.4h5.5v5.5h-5.5zM34.7 244.4h5.5v5.5h-5.5zM74.7 274.4h5.5v5.5h-5.5zM149.7 284.4h5.5v5.5h-5.5zM149.7 289.4h5.5v5.5h-5.5zM159.7 289.4h5.5v5.5h-5.5zM69.7 304.4h5.5v5.5h-5.5zM329.7 314.4h5.5v5.5h-5.5zM339.7 314.4h20.5v5.5h-20.5zM399.7 314.4h5.5v5.5h-5.5zM94.7 319.4h5.5v5.5h-5.5zM94.7 324.4h5.5v5.5h-5.5zM94.7 329.4h5.5v5.5h-5.5zM94.7 334.4h5.5v5.5h-5.5zM124.7 334.4h5.5v5.5h-5.5zM124.7 339.4h5.5v5.5h-5.5zM124.7 344.4h5.5v5.5h-5.5z"/><path fill="rgb(130,130,130)" d="M9.7 9.4h10.5v5.5h-10.5zM44.7 24.4h5.5v5.5h-5.5zM4.7 34.4h5.5v5.5h-5.5zM39.7 64.4h5.5v5.5h-5.5zM19.7 89.4h5.5v5.5h-5.5zM24.7 94.4h5.5v5.5h-5.5zM9.7 104.4h5.5v5.5h-5.5zM59.7 119.4h5.5v5.5h-5.5zM79.7 159.4h5.5v5.5h-5.5zM104.7 209.4h5.5v5.5h-5.5zM74.7 259.4h5.5v5.5h-5.5zM74.7 269.4h5.5v5.5h-5.5zM139.7 279.4h5.5v5.5h-5.5zM124.7 289.4h5.5v5.5h-5.5zM59.7 294.4h5.5v5.5h-5.5zM9.7 314.4h5.5v5.5h-5.5zM334.7 314.4h5.5v5.5h-5.5zM124.7 319.4h5.5v5.5h-5.5zM379.7 319.4h15.5v5.5h-15.5zM404.7 319.4h5.5v5.5h-5.5zM124.7 324.4h5.5v5.5h-5.5zM319.7 324.4h5.5v5.5h-5.5zM124.7 329.4h5.5v5.5h-5.5zM319.7 329.4h5.5v5.5h-5.5zM404.7 329.4h5.5v5.5h-5.5zM319.7 334.4h5.5v5.5h-5.5zM404.7 334.4h5.5v5.5h-5.5zM319.7 339.4h5.5v5.5h-5.5zM404.7 339.4h5.5v5.5h-5.5zM319.7 344.4h5.5v5.5h-5.5zM404.7 344.4h5.5v5.5h-5.5z"/><path fill="rgb(131,131,131)" d="M19.7 -20.6h5.5v5.5h-5.5zM19.7 -15.6h5.5v5.5h-5.5zM19.7 -10.6h5.5v5.5h-5.5zM19.7 -5.6h5.5v5.5h-5.5zM19.7 -0.6h5.5v5.5h-5.5zM39.7 14.4h5.5v5.5h-5.5zM14.7 29.4h5.5v5.5h-5.5zM44.7 54.4h5.5v5.5h-5.5zM24.7 89.4h5.5v5.5h-5.5zM9.7 99.4h5.5v5.5h-5.5zM24.7 99.4h5.5v5.5h-5.5zM74.7 124.4h10.5v5.5h-10.5zM79.7 129.4h5.5v5.5h-5.5zM114.7 134.4h5.5v5.5h-5.5zM99.7 164.4h5.5v5.5h-5.5zM89.7 169.4h5.5v5.5h-5.5zM94.7 209.4h10.5v5.5h-10.5zM34.7 259.4h5.5v5.5h-5.5zM134.7 279.4h5.5v5.5h-5.5zM49.7 289.4h5.5v5.5h-5.5zM64.7 304.4h5.5v5.5h-5.5zM324.7 319.4h5.5v5.5h-5.5zM334.7 319.4h45.5v5.5h-45.5zM394.7 319.4h10.5v5.5h-10.5zM334.7 324.4h60.5v5.5h-60.5zM404.7 324.4h5.5v5.5h-5.5zM334.7 329.4h60.5v5.5h-60.5zM334.7 334.4h60.5v5.5h-60.5zM334.7 339.4h60.5v5.5h-60.5zM334.7 344.4h60.5v5.5h-60.5z"/><path fill="rgb(132,132,132)" d="M29.7 4.4h5.5v5.5h-5.5zM34.7 14.4h5.5v5.5h-5.5zM44.7 49.4h5.5v5.5h-5.5zM9.7 89.4h5.5v5.5h-5.5zM24.7 104.4h5.5v5.5h-5.5zM39.7 119.4h5.5v5.5h-5.5zM49.7 124.4h5.5v5.5h-5.5zM109.7 139.4h10.5v5.5h-10.5zM84.7 169.4h5.5v5.5h-5.5zM59.7 289.4h5.5v5.5h-5.5zM144.7 289.4h5.5v5.5h-5.5zM39.7 309.4h5.5v5.5h-5.5zM24.7 319.4h5.5v5.5h-5.5zM329.7 319.4h5.5v5.5h-5.5zM24.7 324.4h5.5v5.5h-5.5zM329.7 324.4h5.5v5.5h-5.5zM394.7 324.4h10.5v5.5h-10.5zM24.7 329.4h5.5v5.5h-5.5zM119.7 329.4h5.5v5.5h-5.5zM329.7 329.4h5.5v5.5h-5.5zM394.7 329.4h10.5v5.5h-10.5zM24.7 334.4h5.5v5.5h-5.5zM119.7 334.4h5.5v5.5h-5.5zM329.7 334.4h5.5v5.5h-5.5zM394.7 334.4h10.5v5.5h-10.5zM24.7 339.4h5.5v5.5h-5.5zM119.7 339.4h5.5v5.5h-5.5zM329.7 339.4h5.5v5.5h-5.5zM394.7 339.4h10.5v5.5h-10.5zM24.7 344.4h5.5v5.5h-5.5zM119.7 344.4h5.5v5.5h-5.5zM329.7 344.4h5.5v5.5h-5.5zM394.7 344.4h10.5v5.5h-10.5z"/><path fill="rgb(133,133,133)" d="M14.7 -20.6h5.5v5.5h-5.5zM14.7 -15.6h5.5v5.5h-5.5zM14.7 -10.6h5.5v5.5h-5.5zM14.7 -5.6h5.5v5.5h-5.5zM14.7 -0.6h5.5v5.5h-5.5zM29.7 -0.6h5.5v5.5h-5.5zM14.7 4.4h5.5v5.5h-5.5zM24.7 29.4h5.5v5.5h-5.5zM9.7 94.4h5.5v5.5h-5.5zM69.7 124.4h5.5v5.5h-5.5zM119.7 164.4h5.5v5.5h-5.5zM94.7 169.4h5.5v5.5h-5.5zM74.7 194.4h5.5v5.5h-5.5zM79.7 204.4h5.5v5.5h-5.5zM34.7 239.4h5.5v5.5h-5.5zM34.7 249.4h5.5v5.5h-5.5zM74.7 264.4h5.5v5.5h-5.5zM129.7 289.4h5.5v5.5h-5.5zM119.7 319.4h5.5v5.5h-5.5zM119.7 324.4h5.5v5.5h-5.5zM324.7 324.4h5.5v5.5h-5.5zM324.7 329.4h5.5v5.5h-5.5zM324.7 334.4h5.5v5.5h-5.5zM324.7 339.4h5.5v5.5h-5.5zM324.7 344.4h5.5v5.5h-5.5z"/><path fill="rgb(134,134,134)" d="M24.7 -20.6h10.5v5.5h-10.5zM24.7 -15.6h10.5v5.5h-10.5zM24.7 -10.6h10.5v5.5h-10.5zM24.7 -5.6h10.5v5.5h-10.5zM24.7 -0.6h5.5v5.5h-5.5zM19.7 4.4h5.5v5.5h-5.5zM4.7 9.4h5.5v5.5h-5.5zM19.7 9.4h10.5v5.5h-10.5zM29.7 14.4h5.5v5.5h-5.5zM39.7 59.4h5.5v5.5h-5.5zM39.7 69.4h5.5v5.5h-5.5zM9.7 84.4h5.5v5.5h-5.5zM39.7 124.4h5.5v5.5h-5.5zM79.7 179.4h5.5v5.5h-5.5zM34.7 254.4h5.5v5.5h-5.5zM29.7 259.4h5.5v5.5h-5.5zM129.7 284.4h5.5v5.5h-5.5zM144.7 284.4h5.5v5.5h-5.5zM134.7 289.4h10.5v5.5h-10.5zM44.7 294.4h5.5v5.5h-5.5zM49.7 314.4h5.5v5.5h-5.5zM99.7 319.4h5.5v5.5h-5.5zM19.7 324.4h5.5v5.5h-5.5zM99.7 329.4h5.5v5.5h-5.5zM99.7 334.4h5.5v5.5h-5.5zM99.7 339.4h5.5v5.5h-5.5zM99.7 344.4h5.5v5.5h-5.5z"/><path fill="rgb(135,135,135)" d="M34.7 84.4h5.5v5.5h-5.5zM9.7 109.4h5.5v5.5h-5.5zM74.7 134.4h5.5v5.5h-5.5zM74.7 154.4h5.5v5.5h-5.5zM104.7 164.4h5.5v5.5h-5.5zM29.7 244.4h5.5v5.5h-5.5zM54.7 284.4h5.5v5.5h-5.5zM114.7 319.4h5.5v5.5h-5.5zM99.7 324.4h5.5v5.5h-5.5zM19.7 329.4h5.5v5.5h-5.5zM114.7 329.4h5.5v5.5h-5.5zM19.7 334.4h5.5v5.5h-5.5zM114.7 334.4h5.5v5.5h-5.5zM19.7 339.4h5.5v5.5h-5.5zM114.7 339.4h5.5v5.5h-5.5zM19.7 344.4h5.5v5.5h-5.5zM114.7 344.4h5.5v5.5h-5.5z"/><path fill="rgb(136,136,136)" d="M9.7 4.4h5.5v5.5h-5.5zM24.7 4.4h5.5v5.5h-5.5zM9.7 29.4h5.5v5.5h-5.5zM-15.3 34.4h10.5v5.5h-10.5zM14.7 59.4h5.5v5.5h-5.5zM49.7 74.4h5.5v5.5h-5.5zM4.7 84.4h5.5v5.5h-5.5zM39.7 84.4h5.5v5.5h-5.5zM49.7 84.4h5.5v5.5h-5.5zM4.7 89.4h5.5v5.5h-5.5zM34.7 99.4h5.5v5.5h-5.5zM19.7 149.4h5.5v5.5h-5.5zM79.7 164.4h5.5v5.5h-5.5zM99.7 169.4h5.5v5.5h-5.5zM114.7 169.4h5.5v5.5h-5.5zM74.7 189.4h5.5v5.5h-5.5zM24.7 269.4h5.5v5.5h-5.5zM24.7 274.4h5.5v5.5h-5.5zM69.7 299.4h5.5v5.5h-5.5zM-20.3 309.4h25.5v5.5h-25.5zM19.7 319.4h5.5v5.5h-5.5zM114.7 324.4h5.5v5.5h-5.5z"/><path fill="rgb(137,137,137)" d="M9.7 -20.6h5.5v5.5h-5.5zM9.7 -15.6h5.5v5.5h-5.5zM9.7 -10.6h5.5v5.5h-5.5zM9.7 -5.6h5.5v5.5h-5.5zM9.7 -0.6h5.5v5.5h-5.5zM39.7 19.4h5.5v5.5h-5.5zM-20.3 34.4h5.5v5.5h-5.5zM34.7 39.4h5.5v5.5h-5.5zM19.7 59.4h5.5v5.5h-5.5zM14.7 84.4h5.5v5.5h-5.5zM44.7 84.4h5.5v5.5h-5.5zM24.7 109.4h5.5v5.5h-5.5zM14.7 149.4h5.5v5.5h-5.5zM-20.3 154.4h35.5v5.5h-35.5zM24.7 279.4h5.5v5.5h-5.5zM44.7 299.4h5.5v5.5h-5.5zM64.7 299.4h5.5v5.5h-5.5zM104.7 319.4h10.5v5.5h-10.5zM109.7 329.4h5.5v5.5h-5.5zM104.7 334.4h10.5v5.5h-10.5zM104.7 339.4h10.5v5.5h-10.5zM104.7 344.4h10.5v5.5h-10.5z"/><path fill="rgb(138,138,138)" d="M39.7 24.4h5.5v5.5h-5.5zM34.7 29.4h5.5v5.5h-5.5zM-5.3 34.4h10.5v5.5h-10.5zM34.7 64.4h5.5v5.5h-5.5zM54.7 79.4h5.5v5.5h-5.5zM-15.3 84.4h10.5v5.5h-10.5zM74.7 129.4h5.5v5.5h-5.5zM4.7 149.4h10.5v5.5h-10.5zM14.7 154.4h5.5v5.5h-5.5zM109.7 164.4h10.5v5.5h-10.5zM59.7 284.4h5.5v5.5h-5.5zM44.7 304.4h5.5v5.5h-5.5zM109.7 324.4h5.5v5.5h-5.5zM104.7 329.4h5.5v5.5h-5.5z"/><path fill="rgb(139,139,139)" d="M4.7 -20.6h5.5v5.5h-5.5zM4.7 -15.6h5.5v5.5h-5.5zM4.7 -10.6h5.5v5.5h-5.5zM4.7 -5.6h5.5v5.5h-5.5zM4.7 -0.6h5.5v5.5h-5.5zM4.7 4.4h5.5v5.5h-5.5zM-20.3 9.4h15.5v5.5h-15.5zM24.7 14.4h5.5v5.5h-5.5zM19.7 64.4h5.5v5.5h-5.5zM34.7 69.4h5.5v5.5h-5.5zM-20.3 84.4h5.5v5.5h-5.5zM29.7 84.4h5.5v5.5h-5.5zM54.7 124.4h5.5v5.5h-5.5zM-20.3 149.4h25.5v5.5h-25.5zM104.7 169.4h5.5v5.5h-5.5zM49.7 284.4h5.5v5.5h-5.5zM139.7 284.4h5.5v5.5h-5.5zM44.7 289.4h5.5v5.5h-5.5zM4.7 309.4h5.5v5.5h-5.5zM104.7 324.4h5.5v5.5h-5.5zM49.7 334.4h5.5v5.5h-5.5zM49.7 339.4h5.5v5.5h-5.5zM49.7 344.4h5.5v5.5h-5.5z"/><path fill="rgb(140,140,140)" d="M-20.3 -5.6h15.5v5.5h-15.5zM4.7 29.4h5.5v5.5h-5.5zM29.7 29.4h5.5v5.5h-5.5zM19.7 39.4h10.5v5.5h-10.5zM39.7 44.4h5.5v5.5h-5.5zM34.7 59.4h5.5v5.5h-5.5zM24.7 64.4h5.5v5.5h-5.5zM24.7 69.4h10.5v5.5h-10.5zM-5.3 84.4h10.5v5.5h-10.5zM64.7 124.4h5.5v5.5h-5.5zM24.7 149.4h5.5v5.5h-5.5zM109.7 169.4h5.5v5.5h-5.5zM79.7 174.4h5.5v5.5h-5.5zM29.7 239.4h5.5v5.5h-5.5zM59.7 239.4h5.5v5.5h-5.5zM59.7 244.4h5.5v5.5h-5.5zM59.7 249.4h5.5v5.5h-5.5zM54.7 279.4h5.5v5.5h-5.5zM134.7 284.4h5.5v5.5h-5.5zM49.7 319.4h5.5v5.5h-5.5zM49.7 324.4h5.5v5.5h-5.5zM49.7 329.4h5.5v5.5h-5.5z"/><path fill="rgb(141,141,141)" d="M-20.3 -20.6h25.5v5.5h-25.5zM-20.3 -15.6h25.5v5.5h-25.5zM-20.3 -10.6h25.5v5.5h-25.5zM-5.3 -5.6h10.5v5.5h-10.5zM-20.3 -0.6h15.5v5.5h-15.5zM-5.3 9.4h10.5v5.5h-10.5zM14.7 14.4h5.5v5.5h-5.5zM9.7 59.4h5.5v5.5h-5.5zM24.7 59.4h5.5v5.5h-5.5zM4.7 94.4h5.5v5.5h-5.5zM4.7 99.4h5.5v5.5h-5.5zM29.7 99.4h5.5v5.5h-5.5zM4.7 104.4h5.5v5.5h-5.5zM69.7 144.4h5.5v5.5h-5.5zM19.7 154.4h5.5v5.5h-5.5zM74.7 159.4h5.5v5.5h-5.5zM29.7 249.4h5.5v5.5h-5.5zM29.7 254.4h5.5v5.5h-5.5zM59.7 254.4h5.5v5.5h-5.5zM39.7 264.4h5.5v5.5h-5.5zM54.7 274.4h5.5v5.5h-5.5zM59.7 279.4h5.5v5.5h-5.5zM24.7 314.4h5.5v5.5h-5.5z"/><path fill="rgb(142,142,142)" d="M-5.3 -0.6h10.5v5.5h-10.5zM19.7 14.4h5.5v5.5h-5.5zM29.7 39.4h5.5v5.5h-5.5zM29.7 59.4h5.5v5.5h-5.5zM14.7 64.4h5.5v5.5h-5.5zM29.7 64.4h5.5v5.5h-5.5zM69.7 149.4h5.5v5.5h-5.5zM24.7 284.4h5.5v5.5h-5.5z"/><path fill="rgb(143,143,143)" d="M39.7 54.4h5.5v5.5h-5.5zM19.7 69.4h5.5v5.5h-5.5zM29.7 74.4h10.5v5.5h-10.5zM44.7 74.4h5.5v5.5h-5.5zM59.7 234.4h5.5v5.5h-5.5zM54.7 244.4h5.5v5.5h-5.5zM69.7 254.4h5.5v5.5h-5.5zM44.7 284.4h5.5v5.5h-5.5zM69.7 284.4h5.5v5.5h-5.5zM24.7 289.4h5.5v5.5h-5.5zM69.7 289.4h5.5v5.5h-5.5zM24.7 294.4h5.5v5.5h-5.5zM69.7 294.4h5.5v5.5h-5.5zM9.7 309.4h5.5v5.5h-5.5z"/><path fill="rgb(144,144,144)" d="M9.7 14.4h5.5v5.5h-5.5zM14.7 39.4h5.5v5.5h-5.5zM34.7 104.4h5.5v5.5h-5.5zM14.7 114.4h5.5v5.5h-5.5zM59.7 124.4h5.5v5.5h-5.5zM69.7 139.4h5.5v5.5h-5.5zM14.7 144.4h10.5v5.5h-10.5zM79.7 169.4h5.5v5.5h-5.5zM64.7 234.4h5.5v5.5h-5.5zM54.7 239.4h5.5v5.5h-5.5zM39.7 244.4h5.5v5.5h-5.5zM54.7 249.4h5.5v5.5h-5.5zM64.7 249.4h10.5v5.5h-10.5zM54.7 254.4h5.5v5.5h-5.5zM64.7 254.4h5.5v5.5h-5.5zM69.7 259.4h5.5v5.5h-5.5zM44.7 274.4h5.5v5.5h-5.5zM44.7 279.4h5.5v5.5h-5.5zM64.7 289.4h5.5v5.5h-5.5zM64.7 294.4h5.5v5.5h-5.5zM44.7 309.4h5.5v5.5h-5.5zM14.7 314.4h5.5v5.5h-5.5z"/><path fill="rgb(145,145,145)" d="M39.7 74.4h5.5v5.5h-5.5zM-20.3 89.4h15.5v5.5h-15.5zM69.7 219.4h5.5v5.5h-5.5zM69.7 234.4h5.5v5.5h-5.5zM64.7 239.4h10.5v5.5h-10.5zM64.7 244.4h10.5v5.5h-10.5zM49.7 274.4h5.5v5.5h-5.5zM59.7 274.4h5.5v5.5h-5.5zM49.7 279.4h5.5v5.5h-5.5zM39.7 314.4h5.5v5.5h-5.5z"/><path fill="rgb(146,146,146)" d="M-20.3 4.4h15.5v5.5h-15.5zM-15.3 29.4h5.5v5.5h-5.5zM14.7 54.4h10.5v5.5h-10.5zM19.7 84.4h5.5v5.5h-5.5zM24.7 144.4h5.5v5.5h-5.5zM69.7 224.4h5.5v5.5h-5.5zM69.7 229.4h5.5v5.5h-5.5zM54.7 259.4h5.5v5.5h-5.5zM54.7 264.4h5.5v5.5h-5.5zM54.7 269.4h5.5v5.5h-5.5zM24.7 309.4h5.5v5.5h-5.5z"/><path fill="rgb(147,147,147)" d="M-5.3 4.4h5.5v5.5h-5.5zM34.7 19.4h5.5v5.5h-5.5zM-20.3 29.4h5.5v5.5h-5.5zM-10.3 29.4h5.5v5.5h-5.5zM24.7 74.4h5.5v5.5h-5.5zM24.7 84.4h5.5v5.5h-5.5zM-5.3 89.4h5.5v5.5h-5.5zM39.7 129.4h5.5v5.5h-5.5zM9.7 144.4h5.5v5.5h-5.5zM69.7 154.4h5.5v5.5h-5.5zM39.7 239.4h5.5v5.5h-5.5zM39.7 249.4h5.5v5.5h-5.5zM59.7 259.4h5.5v5.5h-5.5zM24.7 264.4h5.5v5.5h-5.5zM59.7 264.4h5.5v5.5h-5.5zM59.7 269.4h5.5v5.5h-5.5zM64.7 284.4h5.5v5.5h-5.5z"/><path fill="rgb(148,148,148)" d="M-0.3 4.4h5.5v5.5h-5.5zM-5.3 29.4h5.5v5.5h-5.5zM-0.3 89.4h5.5v5.5h-5.5zM4.7 109.4h5.5v5.5h-5.5zM19.7 114.4h5.5v5.5h-5.5zM39.7 259.4h5.5v5.5h-5.5zM64.7 279.4h10.5v5.5h-10.5zM-5.3 304.4h5.5v5.5h-5.5z"/><path fill="rgb(149,149,149)" d="M4.7 14.4h5.5v5.5h-5.5zM-0.3 29.4h5.5v5.5h-5.5zM24.7 54.4h5.5v5.5h-5.5zM34.7 54.4h5.5v5.5h-5.5zM4.7 59.4h5.5v5.5h-5.5zM29.7 104.4h5.5v5.5h-5.5zM69.7 129.4h5.5v5.5h-5.5zM29.7 149.4h5.5v5.5h-5.5zM24.7 154.4h5.5v5.5h-5.5zM74.7 209.4h5.5v5.5h-5.5zM59.7 219.4h10.5v5.5h-10.5zM39.7 254.4h5.5v5.5h-5.5zM64.7 259.4h5.5v5.5h-5.5zM24.7 299.4h5.5v5.5h-5.5zM-20.3 304.4h15.5v5.5h-15.5zM-0.3 304.4h5.5v5.5h-5.5z"/><path fill="rgb(150,150,150)" d="M29.7 54.4h5.5v5.5h-5.5zM4.7 144.4h5.5v5.5h-5.5zM29.7 144.4h5.5v5.5h-5.5zM59.7 214.4h5.5v5.5h-5.5zM64.7 224.4h5.5v5.5h-5.5zM64.7 229.4h5.5v5.5h-5.5zM24.7 304.4h5.5v5.5h-5.5z"/><path fill="rgb(151,151,151)" d="M-5.3 159.4h5.5v5.5h-5.5zM74.7 184.4h5.5v5.5h-5.5zM64.7 214.4h10.5v5.5h-10.5zM59.7 229.4h5.5v5.5h-5.5zM54.7 234.4h5.5v5.5h-5.5z"/><path fill="rgb(152,152,152)" d="M9.7 39.4h5.5v5.5h-5.5zM39.7 49.4h5.5v5.5h-5.5zM9.7 64.4h5.5v5.5h-5.5zM29.7 79.4h5.5v5.5h-5.5zM34.7 109.4h5.5v5.5h-5.5zM69.7 134.4h5.5v5.5h-5.5zM-20.3 159.4h15.5v5.5h-15.5zM-0.3 159.4h5.5v5.5h-5.5zM59.7 224.4h5.5v5.5h-5.5zM34.7 234.4h5.5v5.5h-5.5zM69.7 264.4h5.5v5.5h-5.5z"/><path fill="rgb(153,153,153)" d="M9.7 54.4h5.5v5.5h-5.5zM34.7 79.4h5.5v5.5h-5.5zM9.7 114.4h5.5v5.5h-5.5zM44.7 129.4h5.5v5.5h-5.5zM64.7 144.4h5.5v5.5h-5.5zM44.7 269.4h5.5v5.5h-5.5z"/><path fill="rgb(154,154,154)" d="M49.7 79.4h5.5v5.5h-5.5zM-20.3 144.4h15.5v5.5h-15.5zM-0.3 144.4h5.5v5.5h-5.5zM49.7 239.4h5.5v5.5h-5.5zM49.7 254.4h5.5v5.5h-5.5zM64.7 264.4h5.5v5.5h-5.5zM49.7 269.4h5.5v5.5h-5.5zM4.7 304.4h5.5v5.5h-5.5z"/><path fill="rgb(155,155,155)" d="M19.7 74.4h5.5v5.5h-5.5zM-5.3 144.4h5.5v5.5h-5.5zM4.7 159.4h5.5v5.5h-5.5zM49.7 244.4h5.5v5.5h-5.5zM49.7 249.4h5.5v5.5h-5.5zM49.7 259.4h5.5v5.5h-5.5z"/><path fill="rgb(156,156,156)" d="M34.7 44.4h5.5v5.5h-5.5zM-20.3 94.4h15.5v5.5h-15.5zM34.7 114.4h5.5v5.5h-5.5zM29.7 139.4h5.5v5.5h-5.5zM74.7 164.4h5.5v5.5h-5.5zM64.7 269.4h10.5v5.5h-10.5zM64.7 274.4h5.5v5.5h-5.5z"/><path fill="rgb(157,157,157)" d="M-20.3 14.4h15.5v5.5h-15.5zM29.7 19.4h5.5v5.5h-5.5zM4.7 39.4h5.5v5.5h-5.5zM14.7 69.4h5.5v5.5h-5.5zM34.7 129.4h5.5v5.5h-5.5zM34.7 149.4h5.5v5.5h-5.5zM69.7 159.4h5.5v5.5h-5.5zM49.7 264.4h5.5v5.5h-5.5zM69.7 274.4h5.5v5.5h-5.5zM39.7 329.4h5.5v5.5h-5.5zM39.7 334.4h5.5v5.5h-5.5zM39.7 339.4h5.5v5.5h-5.5zM39.7 344.4h5.5v5.5h-5.5z"/><path fill="rgb(158,158,158)" d="M9.7 79.4h5.5v5.5h-5.5zM29.7 109.4h5.5v5.5h-5.5zM34.7 139.4h5.5v5.5h-5.5zM64.7 149.4h5.5v5.5h-5.5zM9.7 159.4h5.5v5.5h-5.5zM-20.3 299.4h25.5v5.5h-25.5zM39.7 319.4h5.5v5.5h-5.5zM39.7 324.4h5.5v5.5h-5.5z"/><path fill="rgb(159,159,159)" d="M-5.3 14.4h10.5v5.5h-10.5zM34.7 24.4h5.5v5.5h-5.5zM34.7 144.4h5.5v5.5h-5.5zM29.7 154.4h5.5v5.5h-5.5zM54.7 214.4h5.5v5.5h-5.5zM54.7 219.4h5.5v5.5h-5.5zM4.7 299.4h5.5v5.5h-5.5zM9.7 304.4h5.5v5.5h-5.5zM44.7 314.4h5.5v5.5h-5.5z"/><path fill="rgb(160,160,160)" d="M34.7 49.4h5.5v5.5h-5.5zM-15.3 59.4h5.5v5.5h-5.5zM4.7 79.4h5.5v5.5h-5.5zM14.7 79.4h5.5v5.5h-5.5zM-5.3 94.4h10.5v5.5h-10.5zM34.7 124.4h5.5v5.5h-5.5zM64.7 139.4h5.5v5.5h-5.5zM64.7 154.4h5.5v5.5h-5.5zM74.7 199.4h5.5v5.5h-5.5zM29.7 234.4h5.5v5.5h-5.5zM39.7 234.4h5.5v5.5h-5.5zM44.7 239.4h5.5v5.5h-5.5z"/><path fill="rgb(161,161,161)" d="M29.7 44.4h5.5v5.5h-5.5zM29.7 49.4h5.5v5.5h-5.5zM4.7 54.4h5.5v5.5h-5.5zM-20.3 59.4h5.5v5.5h-5.5zM-10.3 59.4h5.5v5.5h-5.5zM4.7 64.4h5.5v5.5h-5.5zM24.7 139.4h5.5v5.5h-5.5zM39.7 149.4h5.5v5.5h-5.5zM54.7 224.4h5.5v5.5h-5.5zM54.7 229.4h5.5v5.5h-5.5zM44.7 244.4h5.5v5.5h-5.5zM44.7 249.4h5.5v5.5h-5.5zM9.7 254.4h5.5v5.5h-5.5zM44.7 254.4h5.5v5.5h-5.5zM9.7 299.4h5.5v5.5h-5.5z"/><path fill="rgb(162,162,162)" d="M24.7 79.4h5.5v5.5h-5.5zM34.7 119.4h5.5v5.5h-5.5zM34.7 134.4h5.5v5.5h-5.5zM59.7 144.4h5.5v5.5h-5.5zM14.7 159.4h5.5v5.5h-5.5zM49.7 234.4h5.5v5.5h-5.5zM9.7 249.4h5.5v5.5h-5.5zM9.7 289.4h5.5v5.5h-5.5zM4.7 294.4h10.5v5.5h-10.5z"/><path fill="rgb(163,163,163)" d="M-20.3 39.4h15.5v5.5h-15.5zM24.7 49.4h5.5v5.5h-5.5zM-5.3 59.4h5.5v5.5h-5.5zM-15.3 99.4h5.5v5.5h-5.5zM24.7 114.4h5.5v5.5h-5.5zM64.7 129.4h5.5v5.5h-5.5zM39.7 154.4h5.5v5.5h-5.5zM74.7 179.4h5.5v5.5h-5.5zM69.7 194.4h5.5v5.5h-5.5zM39.7 219.4h5.5v5.5h-5.5zM9.7 259.4h5.5v5.5h-5.5zM24.7 259.4h5.5v5.5h-5.5zM44.7 259.4h5.5v5.5h-5.5zM4.7 269.4h10.5v5.5h-10.5zM4.7 274.4h10.5v5.5h-10.5zM4.7 289.4h5.5v5.5h-5.5zM19.7 314.4h5.5v5.5h-5.5z"/><path fill="rgb(164,164,164)" d="M24.7 44.4h5.5v5.5h-5.5zM-0.3 59.4h5.5v5.5h-5.5zM-20.3 79.4h15.5v5.5h-15.5zM39.7 79.4h5.5v5.5h-5.5zM-10.3 99.4h5.5v5.5h-5.5zM-15.3 104.4h10.5v5.5h-10.5zM34.7 154.4h5.5v5.5h-5.5zM44.7 154.4h5.5v5.5h-5.5zM74.7 204.4h5.5v5.5h-5.5zM44.7 219.4h5.5v5.5h-5.5zM39.7 224.4h5.5v5.5h-5.5zM39.7 229.4h5.5v5.5h-5.5zM9.7 264.4h5.5v5.5h-5.5zM44.7 264.4h5.5v5.5h-5.5zM-20.3 269.4h20.5v5.5h-20.5zM-20.3 274.4h15.5v5.5h-15.5zM9.7 284.4h5.5v5.5h-5.5zM14.7 309.4h5.5v5.5h-5.5z"/><path fill="rgb(165,165,165)" d="M-5.3 39.4h10.5v5.5h-10.5zM-20.3 99.4h5.5v5.5h-5.5zM-20.3 104.4h5.5v5.5h-5.5zM4.7 114.4h5.5v5.5h-5.5zM-20.3 139.4h45.5v5.5h-45.5zM49.7 219.4h5.5v5.5h-5.5zM44.7 224.4h5.5v5.5h-5.5zM4.7 249.4h5.5v5.5h-5.5zM4.7 254.4h5.5v5.5h-5.5zM-0.3 269.4h5.5v5.5h-5.5zM-5.3 274.4h10.5v5.5h-10.5zM9.7 279.4h5.5v5.5h-5.5zM-15.3 289.4h10.5v5.5h-10.5zM-20.3 294.4h25.5v5.5h-25.5z"/><path fill="rgb(166,166,166)" d="M24.7 19.4h5.5v5.5h-5.5zM-5.3 79.4h10.5v5.5h-10.5zM19.7 79.4h5.5v5.5h-5.5zM44.7 79.4h5.5v5.5h-5.5zM44.7 149.4h5.5v5.5h-5.5zM19.7 159.4h5.5v5.5h-5.5zM49.7 224.4h5.5v5.5h-5.5zM44.7 229.4h5.5v5.5h-5.5zM44.7 234.4h5.5v5.5h-5.5zM4.7 259.4h5.5v5.5h-5.5zM-20.3 289.4h5.5v5.5h-5.5zM-5.3 289.4h10.5v5.5h-10.5zM44.7 334.4h5.5v5.5h-5.5zM44.7 339.4h5.5v5.5h-5.5zM44.7 344.4h5.5v5.5h-5.5z"/><path fill="rgb(167,167,167)" d="M39.7 134.4h5.5v5.5h-5.5zM59.7 194.4h10.5v5.5h-10.5zM49.7 214.4h5.5v5.5h-5.5zM34.7 229.4h5.5v5.5h-5.5zM49.7 229.4h5.5v5.5h-5.5zM4.7 264.4h5.5v5.5h-5.5zM4.7 279.4h5.5v5.5h-5.5zM4.7 284.4h5.5v5.5h-5.5zM44.7 324.4h5.5v5.5h-5.5zM44.7 329.4h5.5v5.5h-5.5z"/><path fill="rgb(168,168,168)" d="M14.7 74.4h5.5v5.5h-5.5zM29.7 134.4h5.5v5.5h-5.5zM39.7 139.4h5.5v5.5h-5.5zM39.7 144.4h5.5v5.5h-5.5zM59.7 149.4h5.5v5.5h-5.5zM59.7 154.4h5.5v5.5h-5.5zM64.7 159.4h5.5v5.5h-5.5zM69.7 189.4h5.5v5.5h-5.5zM69.7 209.4h5.5v5.5h-5.5zM44.7 319.4h5.5v5.5h-5.5z"/><path fill="rgb(169,169,169)" d="M-5.3 99.4h10.5v5.5h-10.5zM-5.3 104.4h10.5v5.5h-10.5zM49.7 129.4h5.5v5.5h-5.5zM64.7 134.4h5.5v5.5h-5.5zM49.7 154.4h5.5v5.5h-5.5z"/><path fill="rgb(170,170,170)" d="M54.7 144.4h5.5v5.5h-5.5zM49.7 149.4h5.5v5.5h-5.5zM39.7 214.4h10.5v5.5h-10.5zM34.7 219.4h5.5v5.5h-5.5zM14.7 254.4h5.5v5.5h-5.5zM14.7 259.4h5.5v5.5h-5.5zM14.7 264.4h5.5v5.5h-5.5zM14.7 269.4h10.5v5.5h-10.5zM14.7 274.4h10.5v5.5h-10.5zM14.7 279.4h5.5v5.5h-5.5z"/><path fill="rgb(171,171,171)" d="M-15.3 54.4h10.5v5.5h-10.5zM-15.3 64.4h10.5v5.5h-10.5zM-15.3 109.4h10.5v5.5h-10.5zM29.7 114.4h5.5v5.5h-5.5zM54.7 149.4h5.5v5.5h-5.5zM54.7 154.4h5.5v5.5h-5.5zM74.7 169.4h5.5v5.5h-5.5zM74.7 174.4h5.5v5.5h-5.5zM-15.3 249.4h10.5v5.5h-10.5zM-20.3 254.4h15.5v5.5h-15.5zM-15.3 264.4h10.5v5.5h-10.5zM19.7 279.4h5.5v5.5h-5.5z"/><path fill="rgb(172,172,172)" d="M19.7 19.4h5.5v5.5h-5.5zM29.7 24.4h5.5v5.5h-5.5zM19.7 49.4h5.5v5.5h-5.5zM-20.3 54.4h5.5v5.5h-5.5zM-20.3 64.4h5.5v5.5h-5.5zM-20.3 109.4h5.5v5.5h-5.5zM59.7 139.4h5.5v5.5h-5.5zM59.7 189.4h10.5v5.5h-10.5zM64.7 209.4h5.5v5.5h-5.5zM34.7 224.4h5.5v5.5h-5.5zM-20.3 249.4h5.5v5.5h-5.5zM24.7 254.4h5.5v5.5h-5.5zM-20.3 259.4h15.5v5.5h-15.5zM-20.3 264.4h5.5v5.5h-5.5zM-5.3 264.4h10.5v5.5h-10.5zM-20.3 279.4h15.5v5.5h-15.5zM-20.3 284.4h15.5v5.5h-15.5zM14.7 284.4h5.5v5.5h-5.5z"/><path fill="rgb(173,173,173)" d="M-5.3 54.4h10.5v5.5h-10.5zM59.7 129.4h5.5v5.5h-5.5zM34.7 214.4h5.5v5.5h-5.5zM-5.3 249.4h10.5v5.5h-10.5zM14.7 249.4h5.5v5.5h-5.5zM-5.3 254.4h10.5v5.5h-10.5zM-5.3 259.4h10.5v5.5h-10.5zM19.7 264.4h5.5v5.5h-5.5zM-5.3 279.4h10.5v5.5h-10.5zM-5.3 284.4h10.5v5.5h-10.5zM14.7 289.4h5.5v5.5h-5.5zM14.7 294.4h5.5v5.5h-5.5z"/><path fill="rgb(174,174,174)" d="M19.7 24.4h10.5v5.5h-10.5zM19.7 44.4h5.5v5.5h-5.5zM-5.3 64.4h10.5v5.5h-10.5zM9.7 69.4h5.5v5.5h-5.5zM19.7 119.4h5.5v5.5h-5.5zM44.7 144.4h10.5v5.5h-10.5zM24.7 159.4h5.5v5.5h-5.5zM69.7 164.4h5.5v5.5h-5.5zM54.7 194.4h5.5v5.5h-5.5zM59.7 209.4h5.5v5.5h-5.5zM24.7 239.4h5.5v5.5h-5.5zM24.7 244.4h5.5v5.5h-5.5z"/><path fill="rgb(175,175,175)" d="M-5.3 109.4h10.5v5.5h-10.5zM59.7 159.4h5.5v5.5h-5.5zM69.7 184.4h5.5v5.5h-5.5zM4.7 244.4h10.5v5.5h-10.5z"/><path fill="rgb(176,176,176)" d="M14.7 119.4h5.5v5.5h-5.5zM29.7 129.4h5.5v5.5h-5.5zM54.7 129.4h5.5v5.5h-5.5zM44.7 159.4h5.5v5.5h-5.5zM19.7 284.4h5.5v5.5h-5.5z"/><path fill="rgb(177,177,177)" d="M24.7 119.4h5.5v5.5h-5.5zM54.7 209.4h5.5v5.5h-5.5zM29.7 229.4h5.5v5.5h-5.5zM4.7 239.4h10.5v5.5h-10.5zM-15.3 244.4h10.5v5.5h-10.5zM24.7 249.4h5.5v5.5h-5.5zM19.7 259.4h5.5v5.5h-5.5zM19.7 289.4h5.5v5.5h-5.5zM14.7 299.4h5.5v5.5h-5.5zM14.7 304.4h5.5v5.5h-5.5zM19.7 309.4h5.5v5.5h-5.5z"/><path fill="rgb(178,178,178)" d="M14.7 19.4h5.5v5.5h-5.5zM14.7 24.4h5.5v5.5h-5.5zM-15.3 114.4h5.5v5.5h-5.5zM-5.3 134.4h10.5v5.5h-10.5zM44.7 134.4h5.5v5.5h-5.5zM44.7 139.4h5.5v5.5h-5.5zM49.7 159.4h10.5v5.5h-10.5zM-20.3 239.4h15.5v5.5h-15.5zM-20.3 244.4h5.5v5.5h-5.5zM-5.3 244.4h10.5v5.5h-10.5zM19.7 294.4h5.5v5.5h-5.5z"/><path fill="rgb(179,179,179)" d="M-20.3 114.4h5.5v5.5h-5.5zM-10.3 114.4h5.5v5.5h-5.5zM29.7 119.4h5.5v5.5h-5.5zM-20.3 134.4h15.5v5.5h-15.5zM39.7 159.4h5.5v5.5h-5.5zM64.7 184.4h5.5v5.5h-5.5zM54.7 189.4h5.5v5.5h-5.5zM24.7 234.4h5.5v5.5h-5.5zM-5.3 239.4h10.5v5.5h-10.5z"/><path fill="rgb(180,180,180)" d="M9.7 74.4h5.5v5.5h-5.5zM54.7 139.4h5.5v5.5h-5.5zM59.7 184.4h5.5v5.5h-5.5z"/><path fill="rgb(181,181,181)" d="M9.7 119.4h5.5v5.5h-5.5zM24.7 134.4h5.5v5.5h-5.5zM59.7 134.4h5.5v5.5h-5.5zM49.7 209.4h5.5v5.5h-5.5z"/><path fill="rgb(182,182,182)" d="M-5.3 114.4h10.5v5.5h-10.5zM29.7 124.4h5.5v5.5h-5.5zM49.7 139.4h5.5v5.5h-5.5zM29.7 159.4h5.5v5.5h-5.5zM69.7 179.4h5.5v5.5h-5.5zM19.7 254.4h5.5v5.5h-5.5z"/><path fill="rgb(183,183,183)" d="M14.7 49.4h5.5v5.5h-5.5zM4.7 69.4h5.5v5.5h-5.5zM4.7 119.4h5.5v5.5h-5.5zM34.7 159.4h5.5v5.5h-5.5zM64.7 164.4h5.5v5.5h-5.5zM54.7 184.4h5.5v5.5h-5.5zM49.7 194.4h5.5v5.5h-5.5zM69.7 199.4h5.5v5.5h-5.5z"/><path fill="rgb(184,184,184)" d="M9.7 24.4h5.5v5.5h-5.5zM69.7 204.4h5.5v5.5h-5.5zM44.7 209.4h5.5v5.5h-5.5zM-20.3 234.4h35.5v5.5h-35.5zM14.7 239.4h5.5v5.5h-5.5zM14.7 244.4h5.5v5.5h-5.5z"/><path fill="rgb(185,185,185)" d="M9.7 19.4h5.5v5.5h-5.5zM-5.3 129.4h10.5v5.5h-10.5zM49.7 184.4h5.5v5.5h-5.5zM49.7 189.4h5.5v5.5h-5.5zM39.7 209.4h5.5v5.5h-5.5zM19.7 299.4h5.5v5.5h-5.5zM19.7 304.4h5.5v5.5h-5.5z"/><path fill="rgb(186,186,186)" d="M4.7 74.4h5.5v5.5h-5.5zM-20.3 119.4h20.5v5.5h-20.5zM-20.3 124.4h25.5v5.5h-25.5zM-20.3 129.4h15.5v5.5h-15.5zM4.7 134.4h5.5v5.5h-5.5zM64.7 179.4h5.5v5.5h-5.5zM29.7 214.4h5.5v5.5h-5.5z"/><path fill="rgb(187,187,187)" d="M-0.3 119.4h5.5v5.5h-5.5zM49.7 134.4h5.5v5.5h-5.5zM59.7 179.4h5.5v5.5h-5.5zM59.7 199.4h10.5v5.5h-10.5zM29.7 219.4h5.5v5.5h-5.5zM29.7 224.4h5.5v5.5h-5.5zM14.7 234.4h5.5v5.5h-5.5z"/><path fill="rgb(188,188,188)" d="M4.7 24.4h5.5v5.5h-5.5zM54.7 134.4h5.5v5.5h-5.5zM69.7 169.4h5.5v5.5h-5.5zM69.7 174.4h5.5v5.5h-5.5zM44.7 184.4h5.5v5.5h-5.5zM44.7 189.4h5.5v5.5h-5.5zM44.7 194.4h5.5v5.5h-5.5zM64.7 204.4h5.5v5.5h-5.5zM34.7 209.4h5.5v5.5h-5.5zM19.7 249.4h5.5v5.5h-5.5z"/><path fill="rgb(189,189,189)" d="M14.7 44.4h5.5v5.5h-5.5zM59.7 164.4h5.5v5.5h-5.5zM59.7 204.4h5.5v5.5h-5.5zM19.7 234.4h5.5v5.5h-5.5z"/><path fill="rgb(190,190,190)" d="M4.7 19.4h5.5v5.5h-5.5zM54.7 179.4h5.5v5.5h-5.5zM54.7 199.4h5.5v5.5h-5.5zM9.7 229.4h5.5v5.5h-5.5zM24.7 229.4h5.5v5.5h-5.5zM19.7 239.4h5.5v5.5h-5.5z"/><path fill="rgb(191,191,191)" d="M9.7 49.4h5.5v5.5h-5.5zM4.7 124.4h5.5v5.5h-5.5zM9.7 134.4h5.5v5.5h-5.5zM-20.3 164.4h30.5v5.5h-30.5zM54.7 164.4h5.5v5.5h-5.5zM39.7 199.4h5.5v5.5h-5.5zM-20.3 229.4h15.5v5.5h-15.5zM4.7 229.4h5.5v5.5h-5.5zM19.7 244.4h5.5v5.5h-5.5z"/><path fill="rgb(192,192,192)" d="M24.7 124.4h5.5v5.5h-5.5zM19.7 134.4h5.5v5.5h-5.5zM9.7 164.4h5.5v5.5h-5.5zM44.7 164.4h10.5v5.5h-10.5zM39.7 194.4h5.5v5.5h-5.5zM44.7 199.4h5.5v5.5h-5.5zM39.7 204.4h5.5v5.5h-5.5zM54.7 204.4h5.5v5.5h-5.5zM9.7 214.4h5.5v5.5h-5.5zM9.7 219.4h5.5v5.5h-5.5zM9.7 224.4h5.5v5.5h-5.5zM-5.3 229.4h10.5v5.5h-10.5z"/><path fill="rgb(193,193,193)" d="M4.7 49.4h5.5v5.5h-5.5zM-15.3 69.4h5.5v5.5h-5.5zM64.7 169.4h5.5v5.5h-5.5zM64.7 174.4h5.5v5.5h-5.5zM39.7 189.4h5.5v5.5h-5.5zM49.7 199.4h5.5v5.5h-5.5zM44.7 204.4h10.5v5.5h-10.5zM14.7 214.4h5.5v5.5h-5.5zM14.7 219.4h5.5v5.5h-5.5zM14.7 229.4h5.5v5.5h-5.5z"/><path fill="rgb(194,194,194)" d="M-20.3 24.4h15.5v5.5h-15.5zM-20.3 44.4h20.5v5.5h-20.5zM-20.3 49.4h20.5v5.5h-20.5zM-20.3 69.4h5.5v5.5h-5.5zM-10.3 69.4h5.5v5.5h-5.5zM-20.3 74.4h15.5v5.5h-15.5zM9.7 124.4h5.5v5.5h-5.5zM24.7 129.4h5.5v5.5h-5.5zM14.7 164.4h5.5v5.5h-5.5zM39.7 164.4h5.5v5.5h-5.5zM49.7 179.4h5.5v5.5h-5.5zM34.7 199.4h5.5v5.5h-5.5zM34.7 204.4h5.5v5.5h-5.5zM29.7 209.4h5.5v5.5h-5.5z"/><path fill="rgb(195,195,195)" d="M-20.3 19.4h15.5v5.5h-15.5zM-5.3 24.4h10.5v5.5h-10.5zM-0.3 44.4h5.5v5.5h-5.5zM-0.3 49.4h5.5v5.5h-5.5zM14.7 134.4h5.5v5.5h-5.5zM59.7 169.4h5.5v5.5h-5.5zM14.7 224.4h5.5v5.5h-5.5zM19.7 229.4h5.5v5.5h-5.5z"/><path fill="rgb(196,196,196)" d="M-5.3 19.4h5.5v5.5h-5.5zM4.7 44.4h5.5v5.5h-5.5zM-5.3 69.4h10.5v5.5h-10.5zM-5.3 74.4h10.5v5.5h-10.5zM19.7 124.4h5.5v5.5h-5.5zM4.7 129.4h5.5v5.5h-5.5zM59.7 174.4h5.5v5.5h-5.5zM39.7 184.4h5.5v5.5h-5.5z"/><path fill="rgb(197,197,197)" d="M-0.3 19.4h5.5v5.5h-5.5zM9.7 44.4h5.5v5.5h-5.5zM14.7 124.4h5.5v5.5h-5.5zM19.7 164.4h5.5v5.5h-5.5zM4.7 224.4h5.5v5.5h-5.5z"/><path fill="rgb(198,198,198)" d="M34.7 164.4h5.5v5.5h-5.5zM54.7 169.4h5.5v5.5h-5.5zM34.7 194.4h5.5v5.5h-5.5z"/><path fill="rgb(199,199,199)" d="M4.7 214.4h5.5v5.5h-5.5zM4.7 219.4h5.5v5.5h-5.5z"/><path fill="rgb(200,200,200)" d="M24.7 164.4h10.5v5.5h-10.5zM44.7 179.4h5.5v5.5h-5.5z"/><path fill="rgb(201,201,201)" d="M29.7 204.4h5.5v5.5h-5.5zM24.7 214.4h5.5v5.5h-5.5z"/><path fill="rgb(202,202,202)" d="M54.7 174.4h5.5v5.5h-5.5zM14.7 209.4h5.5v5.5h-5.5zM24.7 209.4h5.5v5.5h-5.5zM19.7 214.4h5.5v5.5h-5.5zM24.7 224.4h5.5v5.5h-5.5z"/><path fill="rgb(203,203,203)" d="M49.7 169.4h5.5v5.5h-5.5zM34.7 189.4h5.5v5.5h-5.5zM24.7 219.4h5.5v5.5h-5.5z"/><path fill="rgb(204,204,204)" d="M9.7 129.4h5.5v5.5h-5.5zM29.7 199.4h5.5v5.5h-5.5zM9.7 209.4h5.5v5.5h-5.5zM19.7 209.4h5.5v5.5h-5.5zM19.7 219.4h5.5v5.5h-5.5zM-15.3 224.4h10.5v5.5h-10.5zM19.7 224.4h5.5v5.5h-5.5z"/><path fill="rgb(205,205,205)" d="M-20.3 224.4h5.5v5.5h-5.5z"/><path fill="rgb(206,206,206)" d="M-5.3 224.4h10.5v5.5h-10.5z"/><path fill="rgb(207,207,207)" d="M19.7 129.4h5.5v5.5h-5.5zM49.7 174.4h5.5v5.5h-5.5z"/><path fill="rgb(208,208,208)" d="M24.7 204.4h5.5v5.5h-5.5z"/><path fill="rgb(209,209,209)" d="M44.7 169.4h5.5v5.5h-5.5zM39.7 179.4h5.5v5.5h-5.5zM4.7 209.4h5.5v5.5h-5.5zM-15.3 214.4h10.5v5.5h-10.5z"/><path fill="rgb(210,210,210)" d="M14.7 129.4h5.5v5.5h-5.5zM34.7 184.4h5.5v5.5h-5.5zM-20.3 214.4h5.5v5.5h-5.5zM-15.3 219.4h10.5v5.5h-10.5z"/><path fill="rgb(211,211,211)" d="M44.7 174.4h5.5v5.5h-5.5zM29.7 194.4h5.5v5.5h-5.5zM-20.3 219.4h5.5v5.5h-5.5z"/><path fill="rgb(212,212,212)" d="M-5.3 214.4h10.5v5.5h-10.5z"/><path fill="rgb(213,213,213)" d="M19.7 204.4h5.5v5.5h-5.5zM-5.3 219.4h10.5v5.5h-10.5z"/><path fill="rgb(214,214,214)" d="M39.7 169.4h5.5v5.5h-5.5z"/><path fill="rgb(215,215,215)" d="M14.7 204.4h5.5v5.5h-5.5z"/><path fill="rgb(216,216,216)" d="M39.7 174.4h5.5v5.5h-5.5zM-20.3 209.4h15.5v5.5h-15.5z"/><path fill="rgb(217,217,217)" d="M34.7 169.4h5.5v5.5h-5.5zM-5.3 209.4h5.5v5.5h-5.5z"/><path fill="rgb(218,218,218)" d="M24.7 199.4h5.5v5.5h-5.5zM-0.3 209.4h5.5v5.5h-5.5z"/><path fill="rgb(219,219,219)" d="M29.7 189.4h5.5v5.5h-5.5z"/><path fill="rgb(220,220,220)" d="M29.7 169.4h5.5v5.5h-5.5zM34.7 179.4h5.5v5.5h-5.5zM9.7 204.4h5.5v5.5h-5.5z"/><path fill="rgb(223,223,223)" d="M34.7 174.4h5.5v5.5h-5.5z"/><path fill="rgb(224,224,224)" d="M24.7 169.4h5.5v5.5h-5.5zM4.7 204.4h5.5v5.5h-5.5z"/><path fill="rgb(225,225,225)" d="M29.7 184.4h5.5v5.5h-5.5z"/><path fill="rgb(227,227,227)" d="M19.7 169.4h5.5v5.5h-5.5zM24.7 194.4h5.5v5.5h-5.5zM19.7 199.4h5.5v5.5h-5.5z"/><path fill="rgb(228,228,228)" d="M29.7 174.4h5.5v5.5h-5.5z"/><path fill="rgb(229,229,229)" d="M29.7 179.4h5.5v5.5h-5.5zM14.7 199.4h5.5v5.5h-5.5zM-15.3 204.4h10.5v5.5h-10.5z"/><path fill="rgb(230,230,230)" d="M14.7 169.4h5.5v5.5h-5.5zM14.7 194.4h5.5v5.5h-5.5zM-20.3 204.4h5.5v5.5h-5.5z"/><path fill="rgb(231,231,231)" d="M24.7 174.4h5.5v5.5h-5.5zM14.7 189.4h5.5v5.5h-5.5zM-5.3 204.4h10.5v5.5h-10.5z"/><path fill="rgb(232,232,232)" d="M-20.3 169.4h35.5v5.5h-35.5zM9.7 189.4h5.5v5.5h-5.5zM19.7 194.4h5.5v5.5h-5.5z"/><path fill="rgb(233,233,233)" d="M9.7 194.4h5.5v5.5h-5.5zM9.7 199.4h5.5v5.5h-5.5z"/><path fill="rgb(234,234,234)" d="M19.7 174.4h5.5v5.5h-5.5zM24.7 189.4h5.5v5.5h-5.5z"/><path fill="rgb(236,236,236)" d="M24.7 179.4h5.5v5.5h-5.5zM14.7 184.4h5.5v5.5h-5.5zM24.7 184.4h5.5v5.5h-5.5z"/><path fill="rgb(237,237,237)" d="M19.7 189.4h5.5v5.5h-5.5zM4.7 199.4h5.5v5.5h-5.5z"/><path fill="rgb(238,238,238)" d="M14.7 174.4h5.5v5.5h-5.5zM19.7 184.4h5.5v5.5h-5.5z"/><path fill="rgb(239,239,239)" d="M9.7 184.4h5.5v5.5h-5.5zM4.7 189.4h5.5v5.5h-5.5z"/><path fill="rgb(240,240,240)" d="M19.7 179.4h5.5v5.5h-5.5zM4.7 194.4h5.5v5.5h-5.5z"/><path fill="rgb(242,242,242)" d="M9.7 174.4h5.5v5.5h-5.5zM14.7 179.4h5.5v5.5h-5.5z"/><path fill="rgb(243,243,243)" d="M4.7 184.4h5.5v5.5h-5.5zM-20.3 199.4h15.5v5.5h-15.5z"/><path fill="rgb(244,244,244)" d="M4.7 174.4h5.5v5.5h-5.5z"/><path fill="rgb(245,245,245)" d="M9.7 179.4h5.5v5.5h-5.5zM-5.3 199.4h10.5v5.5h-10.5z"/><path fill="rgb(246,246,246)" d="M-20.3 174.4h20.5v5.5h-20.5z"/><path fill="rgb(247,247,247)" d="M-0.3 174.4h5.5v5.5h-5.5z"/><path fill="rgb(248,248,248)" d="M4.7 179.4h5.5v5.5h-5.5z"/><path fill="rgb(249,249,249)" d="M-15.3 184.4h10.5v5.5h-10.5zM-15.3 189.4h10.5v5.5h-10.5z"/><path fill="rgb(250,250,250)" d="M-15.3 179.4h10.5v5.5h-10.5zM-20.3 184.4h5.5v5.5h-5.5zM-20.3 189.4h5.5v5.5h-5.5zM-20.3 194.4h15.5v5.5h-15.5z"/><path fill="rgb(251,251,251)" d="M-20.3 179.4h5.5v5.5h-5.5zM-5.3 179.4h5.5v5.5h-5.5zM-5.3 184.4h10.5v5.5h-10.5z"/><path fill="rgb(252,252,252)" d="M-0.3 179.4h5.5v5.5h-5.5zM-5.3 189.4h10.5v5.5h-10.5zM-5.3 194.4h10.5v5.5h-10.5z"/></g><path d="M0.5 325V0.5H428.3" stroke="#000" stroke-width="1" fill="none"/></svg><svg class="abs" style="left:0;top:420px" width="800" height="380" viewBox="0 420 800 380"><defs><linearGradient id="cb" x1="0" y1="1" x2="0" y2="0"><stop offset="0" stop-color="#000066"/><stop offset="0.2" stop-color="#0000ff"/><stop offset="0.4" stop-color="#00ffff"/><stop offset="0.6" stop-color="#ffff00"/><stop offset="0.8" stop-color="#ff0000"/><stop offset="1" stop-color="#ff00ff"/></linearGradient></defs><rect x="520.1" y="756.69" width="8.8" height="6.81" fill="#00006e"/><rect x="520.1" y="750.18" width="8.8" height="6.81" fill="#00007d"/><rect x="520.1" y="743.66" width="8.8" height="6.81" fill="#00008c"/><rect x="520.1" y="737.15" width="8.8" height="6.81" fill="#00009c"/><rect x="520.1" y="730.64" width="8.8" height="6.81" fill="#0000ab"/><rect x="520.1" y="724.13" width="8.8" height="6.81" fill="#0000ba"/><rect x="520.1" y="717.62" width="8.8" height="6.81" fill="#0000c9"/><rect x="520.1" y="711.1" width="8.8" height="6.81" fill="#0000d9"/><rect x="520.1" y="704.59" width="8.8" height="6.81" fill="#0000e8"/><rect x="520.1" y="698.08" width="8.8" height="6.81" fill="#0000f7"/><rect x="520.1" y="691.57" width="8.8" height="6.81" fill="#000dff"/><rect x="520.1" y="685.06" width="8.8" height="6.81" fill="#0026ff"/><rect x="520.1" y="678.54" width="8.8" height="6.81" fill="#0040ff"/><rect x="520.1" y="672.03" width="8.8" height="6.81" fill="#0059ff"/><rect x="520.1" y="665.52" width="8.8" height="6.81" fill="#0073ff"/><rect x="520.1" y="659.01" width="8.8" height="6.81" fill="#008cff"/><rect x="520.1" y="652.5" width="8.8" height="6.81" fill="#00a6ff"/><rect x="520.1" y="645.98" width="8.8" height="6.81" fill="#00bfff"/><rect x="520.1" y="639.47" width="8.8" height="6.81" fill="#00d9ff"/><rect x="520.1" y="632.96" width="8.8" height="6.81" fill="#00f2ff"/><rect x="520.1" y="626.45" width="8.8" height="6.81" fill="#0dfff2"/><rect x="520.1" y="619.94" width="8.8" height="6.81" fill="#26ffd9"/><rect x="520.1" y="613.42" width="8.8" height="6.81" fill="#40ffbf"/><rect x="520.1" y="606.91" width="8.8" height="6.81" fill="#59ffa6"/><rect x="520.1" y="600.4" width="8.8" height="6.81" fill="#73ff8c"/><rect x="520.1" y="593.89" width="8.8" height="6.81" fill="#8cff73"/><rect x="520.1" y="587.38" width="8.8" height="6.81" fill="#a6ff59"/><rect x="520.1" y="580.86" width="8.8" height="6.81" fill="#bfff40"/><rect x="520.1" y="574.35" width="8.8" height="6.81" fill="#d9ff26"/><rect x="520.1" y="567.84" width="8.8" height="6.81" fill="#f2ff0d"/><rect x="520.1" y="561.33" width="8.8" height="6.81" fill="#fff200"/><rect x="520.1" y="554.82" width="8.8" height="6.81" fill="#ffd900"/><rect x="520.1" y="548.3" width="8.8" height="6.81" fill="#ffbf00"/><rect x="520.1" y="541.79" width="8.8" height="6.81" fill="#ffa600"/><rect x="520.1" y="535.28" width="8.8" height="6.81" fill="#ff8c00"/><rect x="520.1" y="528.77" width="8.8" height="6.81" fill="#ff7300"/><rect x="520.1" y="522.26" width="8.8" height="6.81" fill="#ff5900"/><rect x="520.1" y="515.74" width="8.8" height="6.81" fill="#ff4000"/><rect x="520.1" y="509.23" width="8.8" height="6.81" fill="#ff2600"/><rect x="520.1" y="502.72" width="8.8" height="6.81" fill="#ff0d00"/><rect x="520.1" y="496.21" width="8.8" height="6.81" fill="#ff000d"/><rect x="520.1" y="489.7" width="8.8" height="6.81" fill="#ff0026"/><rect x="520.1" y="483.18" width="8.8" height="6.81" fill="#ff0040"/><rect x="520.1" y="476.67" width="8.8" height="6.81" fill="#ff0059"/><rect x="520.1" y="470.16" width="8.8" height="6.81" fill="#ff0073"/><rect x="520.1" y="463.65" width="8.8" height="6.81" fill="#ff008c"/><rect x="520.1" y="457.14" width="8.8" height="6.81" fill="#ff00a6"/><rect x="520.1" y="450.62" width="8.8" height="6.81" fill="#ff00bf"/><rect x="520.1" y="444.11" width="8.8" height="6.81" fill="#ff00d9"/><rect x="520.1" y="437.6" width="8.8" height="6.81" fill="#ff00f2"/><path d="M89.3 762.9H518V437.6" stroke="#000" stroke-width="1" fill="none"/><path d="M174.3 435V762.6" stroke="#dcdc64" stroke-width="1"/><circle cx="174.3" cy="435.2" r="1.5" fill="#f2e52a"/><path d="M85.9 762.6H89.3M87.1 742.3H89.3M87.1 722H89.3M85.9 701.7H89.3M87.1 681.4H89.3M87.1 661.1H89.3M85.9 640.8H89.3M87.1 620.5H89.3M87.1 600.2H89.3M85.9 579.9H89.3M87.1 559.6H89.3M87.1 539.3H89.3M85.9 519H89.3M87.1 498.7H89.3M87.1 478.4H89.3M85.9 458.1H89.3M87.1 437.8H89.3M89.3 762.6v4M260.65 762.6v4M432 762.6v4" stroke="#333" stroke-width="0.8" fill="none"/><text x="84.5" y="765.7" text-anchor="end" class="ax2">8</text><text x="84.5" y="704.8" text-anchor="end" class="ax2">16</text><text x="84.5" y="643.9" text-anchor="end" class="ax2">31.5</text><text x="84.5" y="583" text-anchor="end" class="ax2">63</text><text x="84.5" y="522.1" text-anchor="end" class="ax2">125</text><text x="84.5" y="461.2" text-anchor="end" class="ax2">250</text><text x="77.5" y="492.5" text-anchor="middle" class="ax2 b">Hz</text><text x="89.3" y="777.5" text-anchor="middle" class="ax2">0</text><text x="260.65" y="777.5" text-anchor="middle" class="ax2">100</text><text x="432" y="777.5" text-anchor="middle" class="ax2">200</text><text x="345" y="777.5" text-anchor="middle" class="ax2 b">ms</text><text x="533" y="765.8" class="ax2" style="font-size:9.3px">20</text><text x="533" y="700.8" class="ax2" style="font-size:9.3px">30</text><text x="533" y="635.8" class="ax2" style="font-size:9.3px">40</text><text x="533" y="570.8" class="ax2" style="font-size:9.3px">50</text><text x="533" y="505.8" class="ax2" style="font-size:9.3px">60</text><text x="533" y="440.8" class="ax2" style="font-size:9.3px">70</text><text x="533" y="474" class="ax2 b" style="font-size:9.3px">dB</text></svg><div class="abs sunk" style="left:561px;top:432px;width:136.6px;height:96.8px"></div><svg class="abs" style="left:560px;top:430px" width="140" height="100" viewBox="560 430 140 100"><rect x="578.3" y="437.8" width="116.2" height="79" fill="#fff"/><path d="M578.3 508.9H694.5M578.3 501H694.5M578.3 493.1H694.5M578.3 485.2H694.5M578.3 477.3H694.5M578.3 469.4H694.5M578.3 461.5H694.5M578.3 453.6H694.5M578.3 445.7H694.5M587.18 437.8V516.8M596.07 437.8V516.8M604.95 437.8V516.8M613.83 437.8V516.8M622.72 437.8V516.8M631.6 437.8V516.8M640.48 437.8V516.8M649.37 437.8V516.8M658.25 437.8V516.8M667.13 437.8V516.8M676.02 437.8V516.8M684.9 437.8V516.8" stroke="#cfcfcf" stroke-width="0.8" fill="none"/><path d="M578.75 485.5L580.5 483.75L582.5 481.75L585 480.75L587.5 480L590 477L592.5 473.75L595.5 470.75L598.75 468.75L602 464.5L605 461.25L608 459.5L611.25 458.25L613.75 457.5L615.5 458L617.5 461.25L619.5 467L621.25 472.5L623.25 476.5L625 478L626.75 478L628.5 475.5L630 473L631.75 472.5L633.25 474.5L635 478L636.5 479.5L638 478.5L639.5 476L641.25 472.5L643 471L645 471L647.5 471.75L650 472L652 470.75L653.75 469.5L655.5 469.25L657.5 469.5L660 467.5L662.5 466.25L664.5 467L666.25 467.5L668.25 467.5L670 470L672 473.25L673.75 475L675.5 474.5L677.5 472.5L680 470L682.5 468.75L684 470L685.5 473L687.5 478.75L689.5 480.25L691.25 480.75L692.75 483L694 486" stroke="#1fb9bd" stroke-width="1.1" fill="none" stroke-linejoin="round"/><rect x="578.3" y="437.8" width="116.2" height="79" fill="none" stroke="#000" stroke-width="1.1"/><path d="M576.1 516.8H578.3M577.1 515.22H578.3M577.1 513.64H578.3M577.1 512.06H578.3M577.1 510.48H578.3M576.1 508.9H578.3M577.1 507.32H578.3M577.1 505.74H578.3M577.1 504.16H578.3M577.1 502.58H578.3M576.1 501H578.3M577.1 499.42H578.3M577.1 497.84H578.3M577.1 496.26H578.3M577.1 494.68H578.3M576.1 493.1H578.3M577.1 491.52H578.3M577.1 489.94H578.3M577.1 488.36H578.3M577.1 486.78H578.3M576.1 485.2H578.3M577.1 483.62H578.3M577.1 482.04H578.3M577.1 480.46H578.3M577.1 478.88H578.3M576.1 477.3H578.3M577.1 475.72H578.3M577.1 474.14H578.3M577.1 472.56H578.3M577.1 470.98H578.3M576.1 469.4H578.3M577.1 467.82H578.3M577.1 466.24H578.3M577.1 464.66H578.3M577.1 463.08H578.3M576.1 461.5H578.3M577.1 459.92H578.3M577.1 458.34H578.3M577.1 456.76H578.3M577.1 455.18H578.3M576.1 453.6H578.3M577.1 452.02H578.3M577.1 450.44H578.3M577.1 448.86H578.3M577.1 447.28H578.3M576.1 445.7H578.3M577.1 444.12H578.3M577.1 442.54H578.3M577.1 440.96H578.3M577.1 439.38H578.3M576.1 437.8H578.3M578.3 516.8v2.4M587.18 516.8v1.4M596.07 516.8v1.4M604.95 516.8v2.4M613.83 516.8v1.4M622.72 516.8v1.4M631.6 516.8v2.4M640.48 516.8v1.4M649.37 516.8v1.4M658.25 516.8v2.4M667.13 516.8v1.4M676.02 516.8v1.4M684.9 516.8v2.4M693.78 516.8v1.4" stroke="#333" stroke-width="0.6" fill="none"/><text x="574.5" y="518.1" text-anchor="end" class="ax3">20</text><text x="574.5" y="510.2" text-anchor="end" class="ax3">25</text><text x="574.5" y="502.3" text-anchor="end" class="ax3">30</text><text x="574.5" y="494.4" text-anchor="end" class="ax3">35</text><text x="574.5" y="486.5" text-anchor="end" class="ax3">40</text><text x="574.5" y="478.6" text-anchor="end" class="ax3">45</text><text x="574.5" y="470.7" text-anchor="end" class="ax3">50</text><text x="574.5" y="462.8" text-anchor="end" class="ax3">55</text><text x="574.5" y="454.9" text-anchor="end" class="ax3">60</text><text x="574.5" y="447" text-anchor="end" class="ax3">65</text><text x="574.5" y="439.1" text-anchor="end" class="ax3">70</text><text x="578.3" y="526.5" text-anchor="middle" class="ax3">16</text><text x="604.95" y="526.5" text-anchor="middle" class="ax3">31.5</text><text x="631.6" y="526.5" text-anchor="middle" class="ax3">63</text><text x="658.25" y="526.5" text-anchor="middle" class="ax3">125</text><text x="671" y="526.5" text-anchor="middle" class="ax3">Hz</text><text x="685" y="526.5" text-anchor="middle" class="ax3">250</text><rect x="568.6" y="522.6" width="5" height="4" fill="#e9e9a6"/></svg><div class="p2"><div class="abs lab" style="left:561.2px;top:530.6px;">Found Room Modes:</div><div class="abs list" style="left:561.2px;top:540.8px;width:136px;height:84.4px"><div class="lhead"></div><svg class="abs" style="left:0;top:0" width="136" height="84.4"><path d="M0 18.7H136M0 26.8H136M0 34.9H136M0 43H136M0 51.1H136M0 59.2H136M0 67.3H136M0 75.4H136M20 10.6V84.4M46.8 10.6V84.4M73.6 10.6V84.4M100.2 10.6V84.4" stroke="#eeede5" stroke-width="0.8" fill="none"/><path d="M20 1.5V9M46.8 1.5V9M73.6 1.5V9M100.2 1.5V9" stroke="#c9c6b8" stroke-width="0.8" fill="none"/></svg><span class="lh" style="left:5.8px">Use</span><span class="lh" style="left:24.8px">f [Hz]</span><span class="lh" style="left:51.8px">Q</span><span class="lh" style="left:78.8px">G [dB]</span><span class="lh" style="left:105.8px">Type</span></div><div class="abs lab" style="left:561.2px;top:625.8px;">Stimulus EQ:</div><div class="abs list" style="left:561.2px;top:636.2px;width:136px;height:84.8px"><div class="lhead"></div><svg class="abs" style="left:0;top:0" width="136" height="84.8"><path d="M0 18.7H136M0 26.8H136M0 34.9H136M0 43H136M0 51.1H136M0 59.2H136M0 67.3H136M0 75.4H136M0 83.5H136M20 10.6V84.8M46.8 10.6V84.8M73.6 10.6V84.8M100.2 10.6V84.8" stroke="#eeede5" stroke-width="0.8" fill="none"/><path d="M20 1.5V9M46.8 1.5V9M73.6 1.5V9M100.2 1.5V9" stroke="#c9c6b8" stroke-width="0.8" fill="none"/></svg><span class="lh" style="left:5.8px">Use</span><span class="lh" style="left:24.8px">f [Hz]</span><span class="lh" style="left:51.8px">Q</span><span class="lh" style="left:78.8px">G [dB]</span></div><div class="abs btn plain" style="left:561.6px;top:725.2px;width:65.2px;height:11.6px;line-height:10.4px"><span class="sx">Clear Stimulus EQ</span></div><div class="abs btn plain" style="left:630.4px;top:725.2px;width:66.8px;height:11.6px;line-height:10.4px"><span class="sx">Copy Room Modes</span></div><div class="abs grp" style="left:702px;top:435.4px;width:42.6px;height:104.2px"></div><div class="abs glab" style="left:705.4px;top:431.2px">Action</div><div class="abs btn " style="left:706.7px;top:443.1px;width:34.2px;height:12px;line-height:10.8px"><span class="sx">Measure</span></div><div class="abs" style="left:706.5px;top:457.5px;width:34.6px;height:5.3px;box-sizing:border-box;border:1px solid #a8a696;border-radius:2px;background:#fff"></div><svg class="abs" style="left:700px;top:465px" width="46" height="64" viewBox="700 465 46 64"><path d="M715 476V522.6" stroke="#fff" stroke-width="2.2" stroke-linecap="round"/><path d="M714.3 476V522.6" stroke="#b9b7a8" stroke-width="0.9"/><path d="M706.6 478.3h1.7M722 478.3h1.7M706.6 485.3h1.7M722 485.3h1.7M706.6 492.3h1.7M722 492.3h1.7M706.6 499.3h1.7M722 499.3h1.7M706.6 506.3h1.7M722 506.3h1.7M706.6 513.3h1.7M722 513.3h1.7M706.6 520.3h1.7M722 520.3h1.7" stroke="#b3b1a2" stroke-width="0.8"/><rect x="708.9" y="489.6" width="12.2" height="5.7" rx="1.2" fill="#f6f6f2" stroke="#8fa58f" stroke-width="0.7"/><path d="M709.7 490.2v4.5M720.3 490.2v4.5" stroke="#3fc24a" stroke-width="1.3"/><rect x="732.7" y="473.8" width="6.2" height="48.9" fill="#000"/><text x="729.3" y="475.3" text-anchor="middle" class="hgl" style="fill:#d40000;font-size:6.2px">H</text><text x="729.3" y="500.5" text-anchor="middle" class="hgl" style="fill:#1fc01f;font-size:6.2px">G</text><text x="729.3" y="525.2" text-anchor="middle" class="hgl" style="fill:#0000c8;font-size:6.2px">L</text></svg><div class="abs lab" style="left:706.2px;top:527.6px;">Output Level</div><div class="abs cb" style="left:703.2px;top:545.2px"></div><div class="abs lab" style="left:711.8px;top:544.2px;">Result</div><div class="abs cb" style="left:703.2px;top:553.95px"></div><div class="abs lab" style="left:711.8px;top:552.95px;">Modes+EQ</div><div class="abs cb" style="left:703.2px;top:562.7px"></div><div class="abs lab" style="left:711.8px;top:561.7px;">Measured</div><svg class="abs" style="left:703.2px;top:562.7px" width="8" height="8"><path d="M1.8 3.6L3.2 5.2L5.6 2" stroke="#21a121" stroke-width="1.2" fill="none"/></svg><div class="abs lab" style="left:702.2px;top:573px;">Result smooth:</div><div class="abs combo" style="left:702.9px;top:582.7px;width:41.4px;height:11.3px"><span class="ct" style="left:3px;line-height:10.3px">6 ppo</span><span class="cbtn" style="width:9.1px;height:9.3px"><svg width="9.1" height="9.3" style="display:block"><path d="M1.85 3.25L4.05 5.45L6.25 3.25" stroke="#4d6185" stroke-width="1.3" fill="none"/></svg></span></div><div class="abs lab" style="left:702.2px;top:594.2px;">Modes smooth:</div><div class="abs combo" style="left:702.9px;top:604.4px;width:41.4px;height:11.3px"><span class="ct" style="left:3px;line-height:10.3px">6 ppo</span><span class="cbtn" style="width:9.1px;height:9.3px"><svg width="9.1" height="9.3" style="display:block"><path d="M1.85 3.25L4.05 5.45L6.25 3.25" stroke="#4d6185" stroke-width="1.3" fill="none"/></svg></span></div><div class="abs lab" style="left:703.4px;top:616px;">Meas. smooth:</div><div class="abs combo" style="left:702.9px;top:626.5px;width:41.4px;height:11.3px"><span class="ct" style="left:3px;line-height:10.3px">6 ppo</span><span class="cbtn" style="width:9.1px;height:9.3px"><svg width="9.1" height="9.3" style="display:block"><path d="M1.85 3.25L4.05 5.45L6.25 3.25" stroke="#4d6185" stroke-width="1.3" fill="none"/></svg></span></div><div class="abs lab" style="left:699.6px;top:645.4px;font-size:7px">t (ms)</div><div class="abs combo" style="left:716px;top:644.4px;width:28.4px;height:11.8px"><span class="ct" style="left:1.3px;line-height:10.6px">50.0</span><span class="cbtn" style="width:8px;height:9.8px;right:0.6px"><svg width="8" height="9.8" style="display:block"><path d="M1.9 3.9L3.5 2.3L5.1 3.9M1.9 6.4L3.5 8L5.1 6.4" stroke="#3f5682" stroke-width="1.3" fill="none"/></svg></span></div><div class="abs grp" style="left:702px;top:677.6px;width:42.5px;height:59.8px"></div><div class="abs glab" style="left:705.6px;top:673.4px">Overlay</div><div class="abs btn num" style="left:705px;top:684.5px;width:10.2px;height:9.9px;line-height:8.7px"><span class="sx">1</span></div><div class="abs btn dis" style="left:717.7px;top:685.2px;width:23.4px;height:8.8px;line-height:7.6px"><span class="sx">Show 1</span></div><div class="abs btn num" style="left:705px;top:698px;width:10.2px;height:9.9px;line-height:8.7px"><span class="sx">2</span></div><div class="abs btn dis" style="left:717.7px;top:698.7px;width:23.4px;height:8.8px;line-height:7.6px"><span class="sx">Show 2</span></div><div class="abs btn num" style="left:705px;top:710.4px;width:10.2px;height:9.9px;line-height:8.7px"><span class="sx">3</span></div><div class="abs btn dis" style="left:717.7px;top:711.1px;width:23.4px;height:8.8px;line-height:7.6px"><span class="sx">Show 3</span></div><div class="abs btn num" style="left:705px;top:722.4px;width:10.2px;height:9.9px;line-height:8.7px"><span class="sx">4</span></div><div class="abs btn dis" style="left:717.7px;top:723.1px;width:23.4px;height:8.8px;line-height:7.6px"><span class="sx">Show 4</span></div></div></div></body></html>
